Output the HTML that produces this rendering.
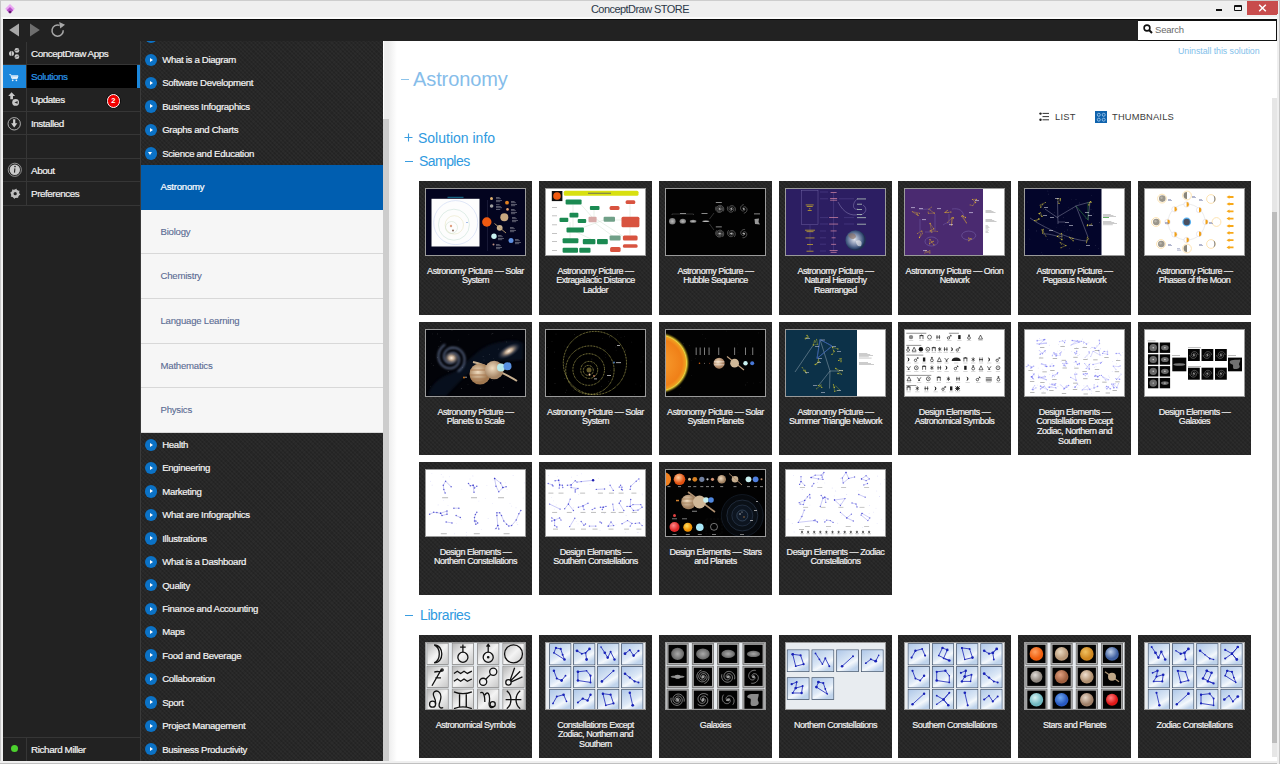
<!DOCTYPE html>
<html><head><meta charset="utf-8"><style>
*{margin:0;padding:0;box-sizing:border-box}
html,body{width:1280px;height:764px;overflow:hidden;background:#efefef;font-family:"Liberation Sans",sans-serif}
.a{position:absolute}
.tex{background-color:#252525;background-image:repeating-linear-gradient(45deg,rgba(255,255,255,0.02) 0 1.5px,rgba(0,0,0,0.035) 1.5px 3px),repeating-linear-gradient(-45deg,rgba(255,255,255,0.012) 0 1.5px,rgba(0,0,0,0.02) 1.5px 3px)}
.nr{position:absolute;left:0;width:137px;height:24px;border-bottom:1px solid #383838}
.nr .ic{position:absolute;left:0;top:0;width:23px;height:100%;border-right:1px solid #383838}
.nr .tx{position:absolute;left:28px;top:0;line-height:23px;font-size:9.6px;color:#f4f4f4;letter-spacing:-0.26px;white-space:nowrap}
.ci{position:absolute;left:0;width:243px;height:23.43px}
.ci .cc{position:absolute;left:3.6px;top:5.5px;width:12.4px;height:12.4px;border-radius:50%;background:#0b72c6}
.ci .cc:after{content:"";position:absolute;left:5px;top:4px;border-left:3.5px solid #fff;border-top:2.2px solid transparent;border-bottom:2.2px solid transparent}
.ci .tx{position:absolute;left:21.2px;top:0;line-height:23px;font-size:9.6px;color:#f4f4f4;letter-spacing:-0.3px;white-space:nowrap;-webkit-text-stroke:0.2px #f4f4f4}
.ci .cc.dn:after{left:3.9px;top:5px;border-top:3.5px solid #fff;border-left:2.2px solid transparent;border-right:2.2px solid transparent;border-bottom:0}
.ch{position:absolute;left:1px;width:242px;background:#f6f6f6;border-bottom:1px solid #dadada}
.ch .tx{position:absolute;left:19.5px;font-size:9.6px;color:#5d6d92;letter-spacing:-0.2px;white-space:nowrap}
.card{position:absolute;width:113px;height:134px}
.card .th{position:absolute;left:6px;top:7px;width:101px;height:68px;overflow:hidden;border:1px solid #9a9a9a}
.card .th svg{display:block}
.card .ct{position:absolute;left:-5px;right:-5px;top:85.6px;white-space:nowrap;text-align:center;font-size:9px;line-height:9.7px;color:#f2f2f2;letter-spacing:-0.47px;-webkit-text-stroke:0.2px #f2f2f2}
.sec{position:absolute;font-size:14px;color:#2f9ae0;white-space:nowrap}
</style></head><body>
<div class="a" style="left:0;top:0;width:1280px;height:764px;background:#efefef;border:1px solid #c6c6c6;border-top-color:#cdcdcd"></div>
<div class="a" style="left:1px;top:16.5px;width:1278px;height:2px;background:#fbfbfb"></div>
<svg class="a" style="left:4px;top:3px" width="12" height="12" viewBox="0 0 12 12">
<path d="M6 1 L10.8 5.8 L6 10.6 L1.2 5.8Z" fill="#eaa8f2"/>
<path d="M6 4 L9.3 7.3 L6 10.6 L2.7 7.3Z" fill="#b64fc8"/>
<path d="M6 7.5 L7.8 9.1 L6 10.6 L4.2 9.1Z" fill="#5e1a6a"/></svg>
<div class="a" style="left:0;top:3px;width:1280px;text-align:center;font-size:11px;line-height:13px;color:#2b3848;letter-spacing:-0.55px">ConceptDraw STORE</div>
<div class="a" style="left:1216px;top:8.8px;width:6px;height:2px;background:#111"></div>
<div class="a" style="left:1234px;top:5px;width:7.5px;height:6px;border:1px solid #111;border-top-width:2px;border-radius:1px"></div>
<div class="a" style="left:1247px;top:1px;width:30.5px;height:13.5px;background:#c84c4c"></div>
<svg class="a" style="left:1258px;top:4px" width="9" height="8" viewBox="0 0 9 8"><path d="M1.2 0.8 L7.8 7.2 M7.8 0.8 L1.2 7.2" stroke="#fff" stroke-width="1.5"/></svg>
<div class="a" style="left:3px;top:18.75px;width:1274.8px;height:742px;background:#222;border-top:1px solid #0b0b0b"></div>
<svg class="a" style="left:8px;top:22px" width="60" height="16" viewBox="0 0 60 16"><path d="M1.2 8 L11 1.4 L11 14.6Z" fill="#a9a9a9"/><path d="M31.8 8 L22 1.4 L22 14.6Z" fill="#6f6f6f"/><path d="M52.6 3.4 A5.6 5.6 0 1 0 56.2 8.2" fill="none" stroke="#a8a8a8" stroke-width="1.5" transform="translate(-1,0)"/><path d="M51.2 0 L57 2.7 L52.2 6.4Z" fill="#a8a8a8"/></svg>
<div class="a" style="left:1137.5px;top:19.5px;width:139px;height:21px;background:#fff;border:1px solid #111;border-left:0"></div>
<svg class="a" style="left:1143px;top:24px" width="10" height="10" viewBox="0 0 10 10"><circle cx="4" cy="4" r="2.9" fill="none" stroke="#111" stroke-width="1.6"/><path d="M6 6 L9 9" stroke="#111" stroke-width="2"/></svg>
<div class="a" style="left:1155px;top:24px;font-size:9.5px;line-height:12px;color:#6a6a6a;letter-spacing:-0.2px">Search</div>
<div class="a" style="left:3px;top:40.5px;width:1274px;height:1px;background:#0d0d0d"></div>
<div class="a" style="left:3px;top:41px;width:137px;height:720px;background:#222"></div>
<div class="a" style="left:3px;top:41.60px;width:137px;height:23.43px;border-bottom:1px solid #363636"></div>
<div class="a" style="left:25.5px;top:41.60px;width:1px;height:23.43px;background:#363636"></div>
<div class="a" style="left:31px;top:41.60px;line-height:23.43px;font-size:9.9px;color:#f2f2f2;letter-spacing:-0.45px;white-space:nowrap;-webkit-text-stroke:0.2px #f2f2f2">ConceptDraw Apps</div>
<svg class="a" style="left:2.50px;top:41.31px" width="24" height="24" viewBox="0 0 24 24"><g fill="#c9c9c9"><circle cx="8.5" cy="12.6" r="2.5"/><circle cx="13.9" cy="9.4" r="2.4"/><circle cx="13.9" cy="15.7" r="2.4"/></g><g stroke="#333" stroke-width="0.6"><path d="M8.5 10.2V15"/><path d="M12 9.9L15.6 8.7"/><path d="M12.3 16.4L15.6 14.9"/></g></svg>
<div class="a" style="left:3px;top:65.03px;width:137px;height:23.43px;border-bottom:1px solid #363636"></div>
<div class="a" style="left:25.5px;top:65.03px;width:1px;height:23.43px;background:#363636"></div>
<div class="a" style="left:3px;top:65.43px;width:22.5px;height:22.43px;background:#1b87dc"></div>
<div class="a" style="left:26.5px;top:65.43px;width:110px;height:22.43px;background:#000"></div>
<div class="a" style="left:136.5px;top:65.43px;width:3.5px;height:22.43px;background:#1b87dc"></div>
<div class="a" style="left:31px;top:65.03px;line-height:23.43px;font-size:9.9px;color:#2b98ea;letter-spacing:-0.45px;white-space:nowrap;-webkit-text-stroke:0.2px #2b98ea">Solutions</div>
<svg class="a" style="left:2.50px;top:64.75px" width="24" height="24" viewBox="0 0 24 24"><g transform="translate(-1.2,0.4)"><path d="M7.6 9.2H9L10.1 13.2H15.4L16.2 10.4H9.6" fill="none" stroke="#e8f2fb" stroke-width="1"/><path d="M10 10.8H15.9L15.2 12.9H10.6Z" fill="#e8f2fb"/><circle cx="10.9" cy="14.9" r="0.85" fill="#e8f2fb"/><circle cx="14.6" cy="14.9" r="0.85" fill="#e8f2fb"/></g></svg>
<div class="a" style="left:3px;top:88.46px;width:137px;height:23.43px;border-bottom:1px solid #363636"></div>
<div class="a" style="left:25.5px;top:88.46px;width:1px;height:23.43px;background:#363636"></div>
<div class="a" style="left:31px;top:88.46px;line-height:23.43px;font-size:9.9px;color:#f2f2f2;letter-spacing:-0.45px;white-space:nowrap;-webkit-text-stroke:0.2px #f2f2f2">Updates</div>
<svg class="a" style="left:2.50px;top:88.18px" width="24" height="24" viewBox="0 0 24 24"><path d="M8.6 4.2L5.2 8H7.3V11.2H10V8H12.1Z" fill="#c9c9c9"/><circle cx="12.6" cy="14.4" r="3.4" fill="#c9c9c9"/><path d="M11.4 14.4L14.6 13V15.8Z" fill="#2a2a2a"/></svg>
<div class="a" style="left:3px;top:111.89px;width:137px;height:23.43px;border-bottom:1px solid #363636"></div>
<div class="a" style="left:25.5px;top:111.89px;width:1px;height:23.43px;background:#363636"></div>
<div class="a" style="left:31px;top:111.89px;line-height:23.43px;font-size:9.9px;color:#f2f2f2;letter-spacing:-0.45px;white-space:nowrap;-webkit-text-stroke:0.2px #f2f2f2">Installed</div>
<svg class="a" style="left:2.50px;top:111.60px" width="24" height="24" viewBox="0 0 24 24"><circle cx="11.2" cy="11.8" r="6.2" fill="none" stroke="#bdbdbd" stroke-width="0.9"/><path d="M10.1 7.3H12.3V11.3H14.3L11.2 15.4L8.1 11.3H10.1Z" fill="#cfcfcf"/></svg>
<div class="a" style="left:3px;top:135.32px;width:137px;height:23.43px;border-bottom:1px solid #363636"></div>
<div class="a" style="left:25.5px;top:135.32px;width:1px;height:23.43px;background:#363636"></div>

<div class="a" style="left:3px;top:158.75px;width:137px;height:23.43px;border-bottom:1px solid #363636"></div>
<div class="a" style="left:25.5px;top:158.75px;width:1px;height:23.43px;background:#363636"></div>
<div class="a" style="left:31px;top:158.75px;line-height:23.43px;font-size:9.9px;color:#f2f2f2;letter-spacing:-0.45px;white-space:nowrap;-webkit-text-stroke:0.2px #f2f2f2">About</div>
<svg class="a" style="left:2.50px;top:158.47px" width="24" height="24" viewBox="0 0 24 24"><circle cx="11.8" cy="11.8" r="6.6" fill="none" stroke="#9a9a9a" stroke-width="0.9"/><circle cx="11.8" cy="11.8" r="5.2" fill="#c9c9c9"/><circle cx="12" cy="8.6" r="0.8" fill="#222"/><path d="M11.9 10.4L11.5 14.6" stroke="#222" stroke-width="1.1"/></svg>
<div class="a" style="left:3px;top:182.18px;width:137px;height:23.43px;border-bottom:1px solid #363636"></div>
<div class="a" style="left:25.5px;top:182.18px;width:1px;height:23.43px;background:#363636"></div>
<div class="a" style="left:31px;top:182.18px;line-height:23.43px;font-size:9.9px;color:#f2f2f2;letter-spacing:-0.45px;white-space:nowrap;-webkit-text-stroke:0.2px #f2f2f2">Preferences</div>
<svg class="a" style="left:2.50px;top:181.89px" width="24" height="24" viewBox="0 0 24 24"><polygon points="17.40,12.73 15.19,13.70 15.14,16.11 12.90,15.23 11.17,16.90 10.20,14.69 7.79,14.64 8.67,12.40 7.00,10.67 9.21,9.70 9.26,7.29 11.50,8.17 13.23,6.50 14.20,8.71 16.61,8.76 15.73,11.00" fill="#bdbdbd"/><circle cx="12.2" cy="11.7" r="4.2" fill="#bdbdbd"/><circle cx="12.2" cy="11.7" r="1.6" fill="#222"/></svg>
<div class="a" style="left:106.6px;top:94.36px;width:13.5px;height:13.5px;border-radius:50%;background:#f00000;border:1.6px solid #fff;box-shadow:0 0 0 0.6px #000;color:#fff;font-size:7.5px;line-height:11px;text-align:center;font-weight:bold">2</div>
<div class="a" style="left:3px;top:736.6px;width:137px;height:1px;background:#363636"></div>
<div class="a" style="left:25.5px;top:737.6px;width:1px;height:23px;background:#363636"></div>
<div class="a" style="left:10.8px;top:744.6px;width:7.2px;height:7.2px;border-radius:50%;background:#4cd12e"></div>
<div class="a" style="left:31px;top:737.6px;line-height:23px;font-size:9.9px;color:#f2f2f2;letter-spacing:-0.4px;white-space:nowrap;-webkit-text-stroke:0.2px #f2f2f2">Richard Miller</div>
<div class="a" style="left:140px;top:41px;width:1px;height:720px;background:#3a3a3a"></div>
<div class="a tex" style="left:141px;top:41px;width:242px;height:719.6px;overflow:hidden">
<div class="ci" style="top:-16.38px"><div class="cc"></div><div class="tx"></div></div>
<div class="ci" style="top:7.05px"><div class="cc"></div><div class="tx">What is a Diagram</div></div>
<div class="ci" style="top:30.48px"><div class="cc"></div><div class="tx">Software Development</div></div>
<div class="ci" style="top:53.91px"><div class="cc"></div><div class="tx">Business Infographics</div></div>
<div class="ci" style="top:77.34px"><div class="cc"></div><div class="tx">Graphs and Charts</div></div>
<div class="ci" style="top:100.77px"><div class="cc dn"></div><div class="tx">Science and Education</div></div>
<div class="a" style="left:0;top:124.20px;width:242px;height:44.63px;background:#005eb0"></div>
<div class="a" style="left:19.5px;top:124.20px;line-height:44.63px;font-size:9.6px;color:#fff;letter-spacing:-0.22px;-webkit-text-stroke:0.2px #fff">Astronomy</div>
<div class="a" style="left:0;top:168.83px;width:242px;height:44.63px;background:#f6f6f6;border-bottom:1px solid #d8d8d8"></div>
<div class="a" style="left:19.5px;top:168.83px;line-height:44.63px;font-size:9.6px;color:#5a6b93;letter-spacing:-0.22px;-webkit-text-stroke:0.1px #5a6b93">Biology</div>
<div class="a" style="left:0;top:213.47px;width:242px;height:44.63px;background:#f6f6f6;border-bottom:1px solid #d8d8d8"></div>
<div class="a" style="left:19.5px;top:213.47px;line-height:44.63px;font-size:9.6px;color:#5a6b93;letter-spacing:-0.22px;-webkit-text-stroke:0.1px #5a6b93">Chemistry</div>
<div class="a" style="left:0;top:258.10px;width:242px;height:44.63px;background:#f6f6f6;border-bottom:1px solid #d8d8d8"></div>
<div class="a" style="left:19.5px;top:258.10px;line-height:44.63px;font-size:9.6px;color:#5a6b93;letter-spacing:-0.22px;-webkit-text-stroke:0.1px #5a6b93">Language Learning</div>
<div class="a" style="left:0;top:302.73px;width:242px;height:44.63px;background:#f6f6f6;border-bottom:1px solid #d8d8d8"></div>
<div class="a" style="left:19.5px;top:302.73px;line-height:44.63px;font-size:9.6px;color:#5a6b93;letter-spacing:-0.22px;-webkit-text-stroke:0.1px #5a6b93">Mathematics</div>
<div class="a" style="left:0;top:347.37px;width:242px;height:44.63px;background:#f6f6f6;border-bottom:1px solid #d8d8d8"></div>
<div class="a" style="left:19.5px;top:347.37px;line-height:44.63px;font-size:9.6px;color:#5a6b93;letter-spacing:-0.22px;-webkit-text-stroke:0.1px #5a6b93">Physics</div>
<div class="ci" style="top:392.00px"><div class="cc"></div><div class="tx">Health</div></div>
<div class="ci" style="top:415.43px"><div class="cc"></div><div class="tx">Engineering</div></div>
<div class="ci" style="top:438.86px"><div class="cc"></div><div class="tx">Marketing</div></div>
<div class="ci" style="top:462.29px"><div class="cc"></div><div class="tx">What are Infographics</div></div>
<div class="ci" style="top:485.72px"><div class="cc"></div><div class="tx">Illustrations</div></div>
<div class="ci" style="top:509.15px"><div class="cc"></div><div class="tx">What is a Dashboard</div></div>
<div class="ci" style="top:532.58px"><div class="cc"></div><div class="tx">Quality</div></div>
<div class="ci" style="top:556.01px"><div class="cc"></div><div class="tx">Finance and Accounting</div></div>
<div class="ci" style="top:579.44px"><div class="cc"></div><div class="tx">Maps</div></div>
<div class="ci" style="top:602.87px"><div class="cc"></div><div class="tx">Food and Beverage</div></div>
<div class="ci" style="top:626.30px"><div class="cc"></div><div class="tx">Collaboration</div></div>
<div class="ci" style="top:649.73px"><div class="cc"></div><div class="tx">Sport</div></div>
<div class="ci" style="top:673.16px"><div class="cc"></div><div class="tx">Project Management</div></div>
<div class="ci" style="top:696.59px"><div class="cc"></div><div class="tx">Business Productivity</div></div>
</div>
<div class="a" style="left:383px;top:41px;width:6px;height:720px;background:#cdcdcd"></div>
<div class="a" style="left:383px;top:41px;width:6px;height:77.8px;background:#ededed;border-left:1px solid #fff"></div>
<div class="a" style="left:389px;top:41px;width:8px;height:720px;background:linear-gradient(90deg,#eeeeee,#fff)"></div>
<div class="a" style="left:397px;top:41px;width:881px;height:720px;background:#fff"></div>
<div class="a" style="left:1271.8px;top:97.7px;width:5.5px;height:659.7px;background:#e6e6e6"></div>
<div class="a" style="left:1271.8px;top:211.5px;width:5.5px;height:531.5px;background:#bcbcbc"></div>
<div class="a" style="left:1178px;top:45.3px;font-size:8.8px;line-height:12px;color:#82c0ea;letter-spacing:-0.05px;white-space:nowrap">Uninstall this solution</div>
<div class="a" style="left:401px;top:78.8px;width:7.5px;height:1.2px;background:#8cc3ea"></div>
<div class="a" style="left:413px;top:67px;font-size:20px;line-height:24px;color:#86bdea;letter-spacing:-0.1px;white-space:nowrap">Astronomy</div>
<svg class="a" style="left:1039px;top:112px" width="11" height="10" viewBox="0 0 11 10"><circle cx="1.5" cy="1.6" r="1.2" fill="#222"/><circle cx="1.5" cy="7.8" r="1.2" fill="#222"/><path d="M3.5 1.4H10M3.5 4.6H10M3.5 7.8H10" stroke="#333" stroke-width="1"/></svg>
<div class="a" style="left:1055px;top:112px;font-size:9.3px;line-height:11px;color:#3a3a3a;letter-spacing:0.3px">LIST</div>
<svg class="a" style="left:1094.5px;top:110.8px" width="12.5" height="12.5" viewBox="0 0 12.5 12.5"><rect width="12.5" height="12.5" fill="#0f63ad"/><g fill="none" stroke="#9cc4ea" stroke-width="0.9"><circle cx="3.8" cy="3.8" r="1.5"/><circle cx="8.7" cy="3.8" r="1.5"/><circle cx="3.8" cy="8.7" r="1.5"/><circle cx="8.7" cy="8.7" r="1.5"/></g></svg>
<div class="a" style="left:1112px;top:112px;font-size:9.3px;line-height:11px;color:#3a3a3a;letter-spacing:0.2px">THUMBNAILS</div>
<svg class="a" style="left:404px;top:133px" width="9" height="9" viewBox="0 0 9 9"><path d="M0.5 4.5H8.5M4.5 0.5V8.5" stroke="#3a9de0" stroke-width="1.1"/></svg>
<div class="sec" style="left:418px;top:129px;line-height:18px;letter-spacing:0px">Solution info</div>
<div class="a" style="left:405px;top:161px;width:7.5px;height:1.2px;background:#3a9de0"></div>
<div class="sec" style="left:419px;top:152px;line-height:18px;letter-spacing:-0.55px">Samples</div>
<div class="a" style="left:405px;top:615px;width:7.5px;height:1.2px;background:#3a9de0"></div>
<div class="sec" style="left:420px;top:606px;line-height:18px;letter-spacing:-0.4px">Libraries</div>
<div class="card tex" style="left:419px;top:181px;height:134px"><div class="th"><svg width="99" height="66" viewBox="0 0 99 66"><rect width="99" height="66" fill="#03041f"/><rect x="5.5" y="9.8" width="48" height="47.7" fill="#fdfdfd"/><rect x="21.5" y="7.8" width="16" height="1" fill="#1a7a9a"/><circle cx="29.7" cy="33.6" r="22" fill="none" stroke="#c0cef0" stroke-width="0.5"/><circle cx="27.9" cy="35.7" r="15.5" fill="none" stroke="#c0dcd0" stroke-width="0.5"/><circle cx="28.3" cy="35.9" r="9.2" fill="none" stroke="#e4e0b8" stroke-width="0.5"/><circle cx="25.5" cy="38.5" r="6" fill="none" stroke="#c8dcc8" stroke-width="0.5"/><circle cx="25" cy="37" r="1.2" fill="#e0a080"/><circle cx="27" cy="41.5" r="0.9" fill="#806050"/><circle cx="41" cy="33.5" r="0.6" fill="#4070d0"/><path d="M61.5 11V62" stroke="#3a3a5a" stroke-width="0.4"/><circle cx="60.8" cy="33" r="4.7" fill="#f05a10"/><circle cx="78.3" cy="28.2" r="4" fill="#c8a880"/><circle cx="73.7" cy="38.8" r="2.9" fill="#c8b090"/><path d="M68.5 34.5L80 44" stroke="#c0a070" stroke-width="0.9"/><circle cx="68" cy="47.2" r="2.7" fill="#c8f0f0"/><circle cx="85" cy="51.5" r="2.5" fill="#6090e0"/><circle cx="65.5" cy="9.6" r="1.5" fill="#e0b070"/><circle cx="81" cy="13.7" r="1.9" fill="#e08020"/><circle cx="65.6" cy="17" r="1.8" fill="#a0a0a0"/><circle cx="81.5" cy="20.4" r="1.3" fill="#e0a070"/><circle cx="67.5" cy="55.5" r="1" fill="#c09080"/><rect x="70" y="8.0" width="3.6" height="0.6" fill="#b0b0b8" opacity="0.8"/><rect x="70" y="9.5" width="4.8" height="0.6" fill="#b0b0b8" opacity="0.8"/><rect x="70" y="11.0" width="6.0" height="0.6" fill="#b0b0b8" opacity="0.8"/><rect x="70" y="12.5" width="4.2" height="0.6" fill="#b0b0b8" opacity="0.8"/><rect x="85" y="12.0" width="3.6" height="0.6" fill="#b0b0b8" opacity="0.8"/><rect x="85" y="13.5" width="4.8" height="0.6" fill="#b0b0b8" opacity="0.8"/><rect x="85" y="15.0" width="6.0" height="0.6" fill="#b0b0b8" opacity="0.8"/><rect x="85" y="16.5" width="4.2" height="0.6" fill="#b0b0b8" opacity="0.8"/><rect x="70" y="15.5" width="3.6" height="0.6" fill="#b0b0b8" opacity="0.8"/><rect x="70" y="17.0" width="4.8" height="0.6" fill="#b0b0b8" opacity="0.8"/><rect x="70" y="18.5" width="6.0" height="0.6" fill="#b0b0b8" opacity="0.8"/><rect x="70" y="20.0" width="4.2" height="0.6" fill="#b0b0b8" opacity="0.8"/><rect x="85" y="20.0" width="3.6" height="0.6" fill="#b0b0b8" opacity="0.8"/><rect x="85" y="21.5" width="4.8" height="0.6" fill="#b0b0b8" opacity="0.8"/><rect x="85" y="23.0" width="6.0" height="0.6" fill="#b0b0b8" opacity="0.8"/><rect x="85" y="24.5" width="4.2" height="0.6" fill="#b0b0b8" opacity="0.8"/><rect x="86" y="28.0" width="3.6" height="0.6" fill="#b0b0b8" opacity="0.8"/><rect x="86" y="29.5" width="4.8" height="0.6" fill="#b0b0b8" opacity="0.8"/><rect x="86" y="31.0" width="6.0" height="0.6" fill="#b0b0b8" opacity="0.8"/><rect x="86" y="32.5" width="4.2" height="0.6" fill="#b0b0b8" opacity="0.8"/><rect x="84" y="38.0" width="3.6" height="0.6" fill="#b0b0b8" opacity="0.8"/><rect x="84" y="39.5" width="4.8" height="0.6" fill="#b0b0b8" opacity="0.8"/><rect x="84" y="41.0" width="6.0" height="0.6" fill="#b0b0b8" opacity="0.8"/><rect x="84" y="42.5" width="4.2" height="0.6" fill="#b0b0b8" opacity="0.8"/><rect x="72" y="46.0" width="3.6" height="0.6" fill="#b0b0b8" opacity="0.8"/><rect x="72" y="47.5" width="4.8" height="0.6" fill="#b0b0b8" opacity="0.8"/><rect x="72" y="49.0" width="6.0" height="0.6" fill="#b0b0b8" opacity="0.8"/><rect x="72" y="50.5" width="4.2" height="0.6" fill="#b0b0b8" opacity="0.8"/><rect x="89" y="50.0" width="3.6" height="0.6" fill="#b0b0b8" opacity="0.8"/><rect x="89" y="51.5" width="4.8" height="0.6" fill="#b0b0b8" opacity="0.8"/><rect x="89" y="53.0" width="6.0" height="0.6" fill="#b0b0b8" opacity="0.8"/><rect x="89" y="54.5" width="4.2" height="0.6" fill="#b0b0b8" opacity="0.8"/><rect x="70" y="55.0" width="3.6" height="0.6" fill="#b0b0b8" opacity="0.8"/><rect x="70" y="56.5" width="4.8" height="0.6" fill="#b0b0b8" opacity="0.8"/><rect x="70" y="58.0" width="6.0" height="0.6" fill="#b0b0b8" opacity="0.8"/><rect x="70" y="59.5" width="4.2" height="0.6" fill="#b0b0b8" opacity="0.8"/></svg></div><div class="ct">Astronomy Picture — Solar<br>System</div></div>
<div class="card tex" style="left:539px;top:181px;height:134px"><div class="th"><svg width="99" height="66" viewBox="0 0 99 66"><rect width="99" height="66" fill="#fff"/><rect x="5.8" y="2" width="10.6" height="10.1" fill="#111"/><circle cx="11" cy="7" r="3.8" fill="#f05a10"/><rect x="17.8" y="1.8" width="74.7" height="5" rx="1.5" fill="#d8e010"/><rect x="42" y="3.8" width="23" height="0.8" fill="#556"/><g stroke="#c8d8c8" stroke-width="0.4"><path d="M27 15.5L27 38"/><path d="M35 15.5L46 28"/><path d="M48 21L48 28"/><path d="M50 30L78 48"/><path d="M30 43L45 50"/><path d="M33 40L66 28"/><path d="M84 15L84 28"/><path d="M84 38L84 46"/><path d="M49 34L68 48"/><path d="M58 31L76 31"/><path d="M24 33L24 50"/></g><rect x="19.6" y="10.5" width="16" height="5" rx="1" fill="#1b8a52"/><rect x="43.9" y="17.1" width="9.6" height="3.9" rx="1" fill="#1b8a52"/><rect x="23.5" y="23.7" width="8.9" height="4.9" rx="1" fill="#1b8a52"/><rect x="13.5" y="28.8" width="8.8" height="4.1" rx="1" fill="#1b8a52"/><rect x="31.7" y="30" width="8.5" height="4.1" rx="1" fill="#1b8a52"/><rect x="20.5" y="38.5" width="17.4" height="5" rx="1" fill="#1b8a52"/><rect x="16.6" y="49.2" width="15.8" height="5.1" rx="1" fill="#1b8a52"/><rect x="36.8" y="50.1" width="12.6" height="5.1" rx="1" fill="#1b8a52"/><rect x="51" y="50.1" width="10.8" height="5.1" rx="1" fill="#1b8a52"/><rect x="16.6" y="58.7" width="15.4" height="5" rx="1" fill="#1b8a52"/><rect x="33.3" y="58.7" width="11.2" height="5" rx="1" fill="#1b8a52"/><rect x="57.6" y="27.7" width="11.4" height="5" rx="1" fill="#70a088"/><rect x="63.6" y="46.5" width="11" height="5" rx="1" fill="#70a088"/><rect x="42.5" y="27.7" width="8.1" height="5.5" rx="1" fill="#d8aaa8"/><rect x="79.6" y="11.2" width="9.7" height="3.7" rx="1.5" fill="#d8533f"/><rect x="63.6" y="17.1" width="9.9" height="3.9" rx="1.5" fill="#d8533f"/><rect x="75.5" y="27.7" width="17.9" height="10.5" rx="1.5" fill="#d8533f"/><rect x="76.9" y="46.5" width="14.7" height="5" rx="1.5" fill="#d8533f"/><rect x="76.9" y="55.2" width="14.7" height="3.6" rx="1.5" fill="#d8533f"/><rect x="64.1" y="57.9" width="10.5" height="5.1" rx="1.5" fill="#d8533f"/><rect x="6" y="18" width="5" height="0.7" fill="#aaa"/><rect x="6" y="26.5" width="5" height="0.7" fill="#aaa"/><rect x="6" y="35.5" width="5" height="0.7" fill="#aaa"/><rect x="6" y="44" width="5" height="0.7" fill="#aaa"/><rect x="6" y="52" width="5" height="0.7" fill="#aaa"/><rect x="6" y="61" width="5" height="0.7" fill="#aaa"/></svg></div><div class="ct">Astronomy Picture —<br>Extragalactic Distance<br>Ladder</div></div>
<div class="card tex" style="left:659px;top:181px;height:134px"><div class="th"><svg width="99" height="66" viewBox="0 0 99 66"><rect width="99" height="66" fill="#020202"/><defs><radialGradient id="hg"><stop offset="0" stop-color="#bbb"/><stop offset="1" stop-color="#777"/></radialGradient></defs><ellipse cx="6.3" cy="32.3" rx="3.3" ry="3.3" fill="url(#hg)"/><ellipse cx="16.8" cy="32.3" rx="3.2" ry="2.5" fill="url(#hg)"/><ellipse cx="27.1" cy="32.3" rx="3.3" ry="1.5" fill="url(#hg)"/><ellipse cx="39.8" cy="32.3" rx="3.6" ry="0.8" fill="#bbb"/><path d="M6 26V25H27.5V26M43.5 30L48 24M43.5 35L48 41" stroke="#888" stroke-width="0.35" fill="none"/><path d="M54.47 19.90L54.54 20.15L54.52 20.43L54.40 20.72L54.18 20.97L53.87 21.17L53.49 21.26L53.07 21.24L52.65 21.08L52.27 20.79L51.98 20.37L51.82 19.87L51.81 19.30L51.97 18.74L52.31 18.22L52.80 17.80L53.42 17.53L54.12 17.45L54.84 17.58L55.52 17.92L56.09 18.47L56.50 19.18L56.69 20.01L56.63 20.88L56.32 21.73L55.75 22.47L54.98 23.04L54.04 23.38L53.03 23.43L52.01 23.19L51.08 22.64L50.32 21.84L49.81 20.82L49.61 19.68L49.74 18.50L50.22 17.37" fill="none" stroke="#b0b0b0" stroke-width="0.45"/><path d="M52.93 19.90L52.86 19.65L52.88 19.37L53.00 19.08L53.22 18.83L53.53 18.63L53.91 18.54L54.33 18.56L54.75 18.72L55.13 19.01L55.42 19.43L55.58 19.93L55.59 20.50L55.43 21.06L55.09 21.58L54.60 22.00L53.98 22.27L53.28 22.35L52.56 22.22L51.88 21.88L51.31 21.33L50.90 20.62L50.71 19.79L50.77 18.92L51.08 18.07L51.65 17.33L52.42 16.76L53.36 16.42L54.37 16.37L55.39 16.61L56.32 17.16L57.08 17.96L57.59 18.98L57.79 20.12L57.66 21.30L57.18 22.43" fill="none" stroke="#b0b0b0" stroke-width="0.45"/><circle cx="53.7" cy="19.9" r="0.95" fill="#b0b0b0"/><path d="M54.44 44.83L54.43 45.08L54.33 45.35L54.13 45.59L53.84 45.77L53.49 45.86L53.10 45.84L52.70 45.69L52.35 45.42L52.07 45.03L51.92 44.55L51.91 44.01L52.07 43.47L52.39 42.98L52.87 42.58L53.46 42.33L54.13 42.25L54.83 42.38L55.48 42.72L56.03 43.25L56.41 43.94L56.59 44.74L56.52 45.59L56.21 46.40L55.66 47.12L54.90 47.67L53.99 47.98L53.00 48.02L52.01 47.77L51.11 47.24L50.38 46.45L49.90 45.45L49.71 44.33L49.86 43.18L50.33 42.09L51.12 41.16" fill="none" stroke="#b0b0b0" stroke-width="0.45"/><path d="M52.96 44.37L52.97 44.12L53.07 43.85L53.27 43.61L53.56 43.43L53.91 43.34L54.30 43.36L54.70 43.51L55.05 43.78L55.33 44.17L55.48 44.65L55.49 45.19L55.33 45.73L55.01 46.22L54.53 46.62L53.94 46.87L53.27 46.95L52.57 46.82L51.92 46.48L51.37 45.95L50.99 45.26L50.81 44.46L50.88 43.61L51.19 42.80L51.74 42.08L52.50 41.53L53.41 41.22L54.40 41.18L55.39 41.43L56.29 41.96L57.02 42.75L57.50 43.75L57.69 44.87L57.54 46.02L57.07 47.11L56.28 48.04" fill="none" stroke="#b0b0b0" stroke-width="0.45"/><ellipse cx="53.7" cy="44.6" rx="1.50" ry="0.52" fill="#b0b0b0" transform="rotate(17.2 53.7 44.6)"/><circle cx="53.7" cy="44.6" r="0.95" fill="#b0b0b0"/><path d="M66.17 19.90L66.26 20.07L66.30 20.28L66.29 20.50L66.23 20.74L66.10 20.97L65.92 21.18L65.68 21.35L65.39 21.48L65.06 21.54L64.70 21.54L64.34 21.45L63.98 21.28L63.65 21.03L63.37 20.70L63.15 20.31L63.01 19.86L62.97 19.37L63.03 18.86L63.20 18.36L63.47 17.88L63.85 17.46L64.32 17.11L64.88 16.85L65.49 16.71L66.13 16.69L66.79 16.80L67.43 17.05L68.02 17.44L68.54 17.95L68.95 18.57L69.25 19.27L69.40 20.04L69.39 20.85L69.22 21.65L68.88 22.43" fill="none" stroke="#b0b0b0" stroke-width="0.45"/><path d="M64.63 19.90L64.54 19.73L64.50 19.52L64.51 19.30L64.57 19.06L64.70 18.83L64.88 18.62L65.12 18.45L65.41 18.32L65.74 18.26L66.10 18.26L66.46 18.35L66.82 18.52L67.15 18.77L67.43 19.10L67.65 19.49L67.79 19.94L67.83 20.43L67.77 20.94L67.60 21.44L67.33 21.92L66.95 22.34L66.48 22.69L65.92 22.95L65.31 23.09L64.67 23.11L64.01 23.00L63.37 22.75L62.78 22.36L62.26 21.85L61.85 21.23L61.55 20.53L61.40 19.76L61.41 18.95L61.58 18.15L61.92 17.37" fill="none" stroke="#b0b0b0" stroke-width="0.45"/><circle cx="65.4" cy="19.9" r="0.95" fill="#b0b0b0"/><path d="M66.14 44.83L66.17 45.02L66.15 45.22L66.08 45.44L65.94 45.64L65.76 45.83L65.52 45.97L65.24 46.07L64.92 46.11L64.58 46.07L64.25 45.96L63.92 45.77L63.63 45.50L63.39 45.16L63.22 44.77L63.13 44.33L63.13 43.85L63.24 43.37L63.44 42.91L63.75 42.48L64.15 42.10L64.64 41.81L65.20 41.62L65.80 41.53L66.43 41.58L67.05 41.75L67.64 42.05L68.18 42.48L68.63 43.02L68.97 43.66L69.19 44.38L69.26 45.14L69.17 45.92L68.93 46.68L68.53 47.40L67.98 48.04" fill="none" stroke="#b0b0b0" stroke-width="0.45"/><path d="M64.66 44.37L64.63 44.18L64.65 43.98L64.72 43.76L64.86 43.56L65.04 43.37L65.28 43.23L65.56 43.13L65.88 43.09L66.22 43.13L66.55 43.24L66.88 43.43L67.17 43.70L67.41 44.04L67.58 44.43L67.67 44.87L67.67 45.35L67.56 45.83L67.36 46.29L67.05 46.72L66.65 47.10L66.16 47.39L65.60 47.58L65.00 47.67L64.37 47.62L63.75 47.45L63.16 47.15L62.62 46.72L62.17 46.18L61.83 45.54L61.61 44.82L61.54 44.06L61.63 43.28L61.87 42.52L62.27 41.80L62.82 41.16" fill="none" stroke="#b0b0b0" stroke-width="0.45"/><ellipse cx="65.4" cy="44.6" rx="1.50" ry="0.52" fill="#b0b0b0" transform="rotate(17.2 65.4 44.6)"/><circle cx="65.4" cy="44.6" r="0.95" fill="#b0b0b0"/><path d="M78.57 19.90L78.67 20.02L78.74 20.16L78.79 20.32L78.81 20.50L78.80 20.70L78.75 20.90L78.67 21.10L78.55 21.29L78.39 21.47L78.20 21.64L77.97 21.77L77.71 21.88L77.43 21.95L77.12 21.98L76.81 21.96L76.49 21.89L76.16 21.77L75.85 21.60L75.56 21.38L75.29 21.11L75.05 20.79L74.86 20.43L74.71 20.04L74.62 19.61L74.59 19.17L74.62 18.71L74.72 18.24L74.89 17.79L75.13 17.35L75.43 16.93L75.80 16.55L76.23 16.22L76.71 15.95L77.24 15.74L77.80 15.60" fill="none" stroke="#b0b0b0" stroke-width="0.45"/><path d="M77.03 19.90L76.93 19.78L76.86 19.64L76.81 19.48L76.79 19.30L76.80 19.10L76.85 18.90L76.93 18.70L77.05 18.51L77.21 18.33L77.40 18.16L77.63 18.03L77.89 17.92L78.17 17.85L78.48 17.82L78.79 17.84L79.11 17.91L79.44 18.03L79.75 18.20L80.04 18.42L80.31 18.69L80.55 19.01L80.74 19.37L80.89 19.76L80.98 20.19L81.01 20.63L80.98 21.09L80.88 21.56L80.71 22.01L80.47 22.45L80.17 22.87L79.80 23.25L79.37 23.58L78.89 23.85L78.36 24.06L77.80 24.20" fill="none" stroke="#b0b0b0" stroke-width="0.45"/><circle cx="77.8" cy="19.9" r="0.95" fill="#b0b0b0"/><path d="M78.54 44.83L78.59 44.97L78.62 45.13L78.62 45.30L78.59 45.48L78.52 45.66L78.42 45.83L78.28 46.00L78.10 46.15L77.90 46.28L77.67 46.38L77.41 46.44L77.13 46.47L76.84 46.45L76.54 46.39L76.24 46.27L75.96 46.11L75.68 45.91L75.44 45.65L75.22 45.35L75.04 45.01L74.91 44.64L74.83 44.24L74.81 43.82L74.85 43.39L74.95 42.95L75.12 42.52L75.35 42.11L75.65 41.72L76.00 41.37L76.42 41.07L76.88 40.81L77.39 40.62L77.93 40.50L78.49 40.46L79.07 40.49" fill="none" stroke="#b0b0b0" stroke-width="0.45"/><path d="M77.06 44.37L77.01 44.23L76.98 44.07L76.98 43.90L77.01 43.72L77.08 43.54L77.18 43.37L77.32 43.20L77.50 43.05L77.70 42.92L77.93 42.82L78.19 42.76L78.47 42.73L78.76 42.75L79.06 42.81L79.36 42.93L79.64 43.09L79.92 43.29L80.16 43.55L80.38 43.85L80.56 44.19L80.69 44.56L80.77 44.96L80.79 45.38L80.75 45.81L80.65 46.25L80.48 46.68L80.25 47.09L79.95 47.48L79.60 47.83L79.18 48.13L78.72 48.39L78.21 48.58L77.67 48.70L77.11 48.74L76.53 48.71" fill="none" stroke="#b0b0b0" stroke-width="0.45"/><ellipse cx="77.8" cy="44.6" rx="1.50" ry="0.52" fill="#b0b0b0" transform="rotate(17.2 77.8 44.6)"/><circle cx="77.8" cy="44.6" r="0.95" fill="#b0b0b0"/><path d="M88.5 30L93 29.5L92.5 33L94 35.5L89 35Z" fill="#999"/><rect x="49.8" y="13" width="6" height="0.8" fill="#aaa"/><rect x="49.8" y="37.5" width="6" height="0.8" fill="#aaa"/><rect x="14" y="24" width="6" height="0.8" fill="#aaa"/><rect x="35.5" y="24" width="6" height="0.8" fill="#aaa"/><rect x="88" y="24.5" width="6" height="0.8" fill="#aaa"/></svg></div><div class="ct">Astronomy Picture —<br>Hubble Sequence</div></div>
<div class="card tex" style="left:779px;top:181px;height:134px"><div class="th"><svg width="99" height="66" viewBox="0 0 99 66"><rect width="99" height="66" fill="#2c1e62"/><rect x="15.5" y="1.2" width="16.5" height="34.3" fill="none" stroke="#7c70b0" stroke-width="0.4"/><path d="M47.6 4V62M24 36V62M34 3H42M34 9.8H42M34 28.6H42M34 35H42M34 42H40M34 48.8H40M34 55.2H40M34 62H40M53 9.8H68M58 28.6H68M58 35H68" stroke="#6a60a8" stroke-width="0.35"/><path d="M52 13C58 25 66 27 72 25.5M72 9.5C66 13 66 22 72 20M77 16C82 19 80 25 74 26" fill="none" stroke="#a8a0d0" stroke-width="0.4"/><rect x="19.7" y="15.6" width="8" height="0.7" fill="#d8b828"/><rect x="20.7" y="17.3" width="6" height="0.7" fill="#d8b828"/><rect x="22.95" y="19.5" width="1.5" height="0.7" fill="#d8b828"/><rect x="21.7" y="21.2" width="4" height="0.7" fill="#d8b828"/><rect x="19.0" y="40.8" width="10" height="0.7" fill="#d8b828"/><rect x="20.5" y="42.4" width="7" height="0.7" fill="#d8b828"/><rect x="19.5" y="48.6" width="9" height="0.7" fill="#d8b828"/><rect x="21.0" y="55" width="6" height="0.7" fill="#d8b828"/><rect x="20.5" y="61.8" width="7" height="0.7" fill="#d8b828"/><rect x="44.6" y="3" width="6" height="0.7" fill="#d88aa8"/><rect x="44.1" y="9.2" width="7" height="0.7" fill="#d88aa8"/><rect x="44.1" y="10.8" width="7" height="0.7" fill="#d88aa8"/><rect x="43.1" y="28.3" width="9" height="0.7" fill="#d88aa8"/><rect x="43.1" y="34.7" width="9" height="0.7" fill="#d88aa8"/><rect x="44.6" y="41.6" width="6" height="0.7" fill="#d88aa8"/><rect x="45.6" y="48.5" width="4" height="0.7" fill="#d88aa8"/><rect x="45.1" y="54.9" width="5" height="0.7" fill="#d88aa8"/><rect x="43.6" y="61.3" width="8" height="0.7" fill="#d88aa8"/><rect x="44.6" y="62.9" width="6" height="0.7" fill="#d88aa8"/><rect x="71" y="9.6" width="9" height="0.7" fill="#c8e0c8"/><rect x="71" y="14.8" width="5" height="0.7" fill="#c8e0c8"/><rect x="71" y="20" width="5" height="0.7" fill="#c8e0c8"/><rect x="71" y="25.2" width="5" height="0.7" fill="#c8e0c8"/><rect x="71" y="28.4" width="9" height="0.7" fill="#c8e0c8"/><rect x="71" y="34.8" width="9" height="0.7" fill="#c8e0c8"/><defs><radialGradient id="eg" cx="0.45" cy="0.45"><stop offset="0" stop-color="#e0e4ec"/><stop offset="0.55" stop-color="#7888a8"/><stop offset="0.9" stop-color="#304870"/><stop offset="1" stop-color="#203050"/></radialGradient></defs><circle cx="69.6" cy="51.5" r="10.2" fill="url(#eg)"/><path d="M62 46C65 43 70 44 70 48C68 51 64 51 62 46Z" fill="#8a6a58" opacity="0.55"/><path d="M70 52C74 50 77 53 75 57C72 58 70 56 70 52Z" fill="#f0f0f0" opacity="0.6"/></svg></div><div class="ct">Astronomy Picture —<br>Natural Hierarchy<br>Rearranged</div></div>
<div class="card tex" style="left:898px;top:181px;height:134px"><div class="th"><svg width="99" height="66" viewBox="0 0 99 66"><rect width="99" height="66" fill="#4a2a70"/><rect x="78" y="0" width="21" height="66" fill="#fff"/><path d="M14 20C20 21 24 19 26 21M15 30V43M20 43H28M30 25V42M44 25V34M47 20C54 19 58 21 59 28M38 36C42 33 44 34 45 34" stroke="#7c68b0" stroke-width="0.45" fill="none"/><path d="M12.0 24.9L13.4 26.5L12.9 26.4L7.2 22.7L14.5 24.2" fill="none" stroke="#e0b030" stroke-width="0.4" opacity="0.85"/><circle cx="12.0" cy="24.9" r="0.62" fill="#e0b030"/><circle cx="13.4" cy="26.5" r="0.34" fill="#e0b030"/><circle cx="12.9" cy="26.4" r="0.46" fill="#e0b030"/><circle cx="7.2" cy="22.7" r="0.39" fill="#e0b030"/><circle cx="14.5" cy="24.2" r="0.49" fill="#e0b030"/><path d="M26.6 18.1L23.7 20.2L29.3 24.1L23.3 24.4L23.1 22.9" fill="none" stroke="#e0b030" stroke-width="0.4" opacity="0.85"/><circle cx="26.6" cy="18.1" r="0.34" fill="#e0b030"/><circle cx="23.7" cy="20.2" r="0.30" fill="#e0b030"/><circle cx="29.3" cy="24.1" r="0.60" fill="#e0b030"/><circle cx="23.3" cy="24.4" r="0.37" fill="#e0b030"/><circle cx="23.1" cy="22.9" r="0.38" fill="#e0b030"/><path d="M45.9 23.0L40.3 23.7L42.3 21.4L39.6 23.5L43.5 23.7" fill="none" stroke="#e0b030" stroke-width="0.4" opacity="0.85"/><circle cx="45.9" cy="23.0" r="0.61" fill="#e0b030"/><circle cx="40.3" cy="23.7" r="0.40" fill="#e0b030"/><circle cx="42.3" cy="21.4" r="0.43" fill="#e0b030"/><circle cx="39.6" cy="23.5" r="0.36" fill="#e0b030"/><circle cx="43.5" cy="23.7" r="0.35" fill="#e0b030"/><path d="M12.5 44.4L16.8 42.0L17.4 44.7L14.5 48.5L15.8 44.5" fill="none" stroke="#e0b030" stroke-width="0.4" opacity="0.85"/><circle cx="12.5" cy="44.4" r="0.47" fill="#e0b030"/><circle cx="16.8" cy="42.0" r="0.55" fill="#e0b030"/><circle cx="17.4" cy="44.7" r="0.32" fill="#e0b030"/><circle cx="14.5" cy="48.5" r="0.64" fill="#e0b030"/><circle cx="15.8" cy="44.5" r="0.31" fill="#e0b030"/><path d="M32.5 42.4L25.2 41.9L28.7 39.8L25.1 34.5L26.8 43.6" fill="none" stroke="#e0b030" stroke-width="0.4" opacity="0.85"/><circle cx="32.5" cy="42.4" r="0.37" fill="#e0b030"/><circle cx="25.2" cy="41.9" r="0.56" fill="#e0b030"/><circle cx="28.7" cy="39.8" r="0.63" fill="#e0b030"/><circle cx="25.1" cy="34.5" r="0.63" fill="#e0b030"/><circle cx="26.8" cy="43.6" r="0.42" fill="#e0b030"/><path d="M42.5 33.2L46.8 29.1L46.5 36.0L47.6 28.4L48.5 28.9" fill="none" stroke="#e0b030" stroke-width="0.4" opacity="0.85"/><circle cx="42.5" cy="33.2" r="0.42" fill="#e0b030"/><circle cx="46.8" cy="29.1" r="0.51" fill="#e0b030"/><circle cx="46.5" cy="36.0" r="0.62" fill="#e0b030"/><circle cx="47.6" cy="28.4" r="0.42" fill="#e0b030"/><circle cx="48.5" cy="28.9" r="0.62" fill="#e0b030"/><path d="M60.4 28.5L58.5 27.4L56.6 27.2L61.5 34.0L57.3 26.4" fill="none" stroke="#e0b030" stroke-width="0.4" opacity="0.85"/><circle cx="60.4" cy="28.5" r="0.65" fill="#e0b030"/><circle cx="58.5" cy="27.4" r="0.49" fill="#e0b030"/><circle cx="56.6" cy="27.2" r="0.44" fill="#e0b030"/><circle cx="61.5" cy="34.0" r="0.38" fill="#e0b030"/><circle cx="57.3" cy="26.4" r="0.51" fill="#e0b030"/><path d="M70.6 13.6L67.4 10.4L71.3 10.3L67.9 16.7L65.0 15.9" fill="none" stroke="#e0b030" stroke-width="0.4" opacity="0.85"/><circle cx="70.6" cy="13.6" r="0.63" fill="#e0b030"/><circle cx="67.4" cy="10.4" r="0.52" fill="#e0b030"/><circle cx="71.3" cy="10.3" r="0.58" fill="#e0b030"/><circle cx="67.9" cy="16.7" r="0.34" fill="#e0b030"/><circle cx="65.0" cy="15.9" r="0.45" fill="#e0b030"/><path d="M19.9 64.1L20.8 61.7L25.0 64.1L24.9 61.7L21.9 63.4" fill="none" stroke="#e0b030" stroke-width="0.4" opacity="0.85"/><circle cx="19.9" cy="64.1" r="0.47" fill="#e0b030"/><circle cx="20.8" cy="61.7" r="0.40" fill="#e0b030"/><circle cx="25.0" cy="64.1" r="0.44" fill="#e0b030"/><circle cx="24.9" cy="61.7" r="0.35" fill="#e0b030"/><circle cx="21.9" cy="63.4" r="0.43" fill="#e0b030"/><path d="M28.9 55.8L26.8 53.0L25.0 50.5L24.6 54.7L28.2 52.2" fill="none" stroke="#e0b030" stroke-width="0.4" opacity="0.85"/><circle cx="28.9" cy="55.8" r="0.58" fill="#e0b030"/><circle cx="26.8" cy="53.0" r="0.57" fill="#e0b030"/><circle cx="25.0" cy="50.5" r="0.54" fill="#e0b030"/><circle cx="24.6" cy="54.7" r="0.53" fill="#e0b030"/><circle cx="28.2" cy="52.2" r="0.57" fill="#e0b030"/><path d="M64.2 50.2L63.7 48.9L66.6 50.1L63.8 51.7L65.9 49.5" fill="none" stroke="#e0b030" stroke-width="0.4" opacity="0.85"/><circle cx="64.2" cy="50.2" r="0.30" fill="#e0b030"/><circle cx="63.7" cy="48.9" r="0.49" fill="#e0b030"/><circle cx="66.6" cy="50.1" r="0.39" fill="#e0b030"/><circle cx="63.8" cy="51.7" r="0.54" fill="#e0b030"/><circle cx="65.9" cy="49.5" r="0.46" fill="#e0b030"/><ellipse cx="26.5" cy="52.5" rx="6.5" ry="4.5" fill="none" stroke="#8878c0" stroke-width="0.4"/><ellipse cx="63.7" cy="46.5" rx="7" ry="4.4" fill="none" stroke="#8878c0" stroke-width="0.4"/><rect x="6" y="18" width="4" height="1.1" fill="#d8d0e8" opacity="0.6"/><rect x="14" y="19" width="4" height="1.1" fill="#d8d0e8" opacity="0.6"/><rect x="32" y="19" width="4" height="1.1" fill="#d8d0e8" opacity="0.6"/><rect x="17" y="30" width="4" height="1.1" fill="#d8d0e8" opacity="0.6"/><rect x="44" y="35" width="4" height="1.1" fill="#d8d0e8" opacity="0.6"/><rect x="64" y="23" width="4" height="1.1" fill="#d8d0e8" opacity="0.6"/><rect x="70" y="11" width="4" height="1.1" fill="#d8d0e8" opacity="0.6"/><rect x="18" y="61" width="4" height="1.1" fill="#d8d0e8" opacity="0.6"/><rect x="80.5" y="21.0" width="6.0" height="0.5" fill="#999" opacity="1"/><rect x="80.5" y="22.2" width="8.0" height="0.5" fill="#999" opacity="1"/><rect x="80.5" y="23.4" width="10.0" height="0.5" fill="#999" opacity="1"/><rect x="80.5" y="30.0" width="6.6" height="0.5" fill="#999" opacity="1"/><rect x="80.5" y="31.2" width="8.8" height="0.5" fill="#999" opacity="1"/><rect x="80.5" y="32.4" width="11.0" height="0.5" fill="#999" opacity="1"/><rect x="80.5" y="36.0" width="2.4" height="0.5" fill="#aaa" opacity="1"/><rect x="80.5" y="37.2" width="3.2" height="0.5" fill="#aaa" opacity="1"/><rect x="80.5" y="38.4" width="4.0" height="0.5" fill="#aaa" opacity="1"/><rect x="80.5" y="39.6" width="2.8" height="0.5" fill="#aaa" opacity="1"/><rect x="80.5" y="40.8" width="3.6" height="0.5" fill="#aaa" opacity="1"/><rect x="80.5" y="42.0" width="2.4" height="0.5" fill="#aaa" opacity="1"/><rect x="80.5" y="43.2" width="3.2" height="0.5" fill="#aaa" opacity="1"/></svg></div><div class="ct">Astronomy Picture — Orion<br>Network</div></div>
<div class="card tex" style="left:1018px;top:181px;height:134px"><div class="th"><svg width="99" height="66" viewBox="0 0 99 66"><rect width="99" height="66" fill="#03052a"/><rect x="76.5" y="0" width="22.5" height="66" fill="#fff"/><path d="M32.5 12L33 35M32.5 28L51 17L63 48M50.5 17L65 13L63 31M20 20L33 29M5 29C20 40 50 52 62 52M18 45C25 44 34 49 38 47M33 33H40" stroke="#9898b0" stroke-width="0.45" fill="none"/><path d="M51 17L63 31V13" stroke="#2a7a3a" stroke-width="0.6" fill="none"/><path d="M17.8 15.2L15.8 18.2L15.0 16.0L20.4 13.5" fill="none" stroke="#e0d040" stroke-width="0.4" opacity="0.85"/><circle cx="17.8" cy="15.2" r="0.49" fill="#e0d040"/><circle cx="15.8" cy="18.2" r="0.52" fill="#e0d040"/><circle cx="15.0" cy="16.0" r="0.31" fill="#e0d040"/><circle cx="20.4" cy="13.5" r="0.43" fill="#e0d040"/><path d="M35.2 11.7L35.4 9.9L32.4 9.7L34.0 14.5" fill="none" stroke="#e0d040" stroke-width="0.4" opacity="0.85"/><circle cx="35.2" cy="11.7" r="0.51" fill="#e0d040"/><circle cx="35.4" cy="9.9" r="0.57" fill="#e0d040"/><circle cx="32.4" cy="9.7" r="0.43" fill="#e0d040"/><circle cx="34.0" cy="14.5" r="0.56" fill="#e0d040"/><path d="M13.6 24.7L17.0 27.4L15.5 23.5L14.6 24.3" fill="none" stroke="#e0d040" stroke-width="0.4" opacity="0.85"/><circle cx="13.6" cy="24.7" r="0.40" fill="#e0d040"/><circle cx="17.0" cy="27.4" r="0.58" fill="#e0d040"/><circle cx="15.5" cy="23.5" r="0.37" fill="#e0d040"/><circle cx="14.6" cy="24.3" r="0.61" fill="#e0d040"/><path d="M13.9 29.8L11.4 32.0L9.6 31.6L14.0 30.1" fill="none" stroke="#e0d040" stroke-width="0.4" opacity="0.85"/><circle cx="13.9" cy="29.8" r="0.51" fill="#e0d040"/><circle cx="11.4" cy="32.0" r="0.34" fill="#e0d040"/><circle cx="9.6" cy="31.6" r="0.50" fill="#e0d040"/><circle cx="14.0" cy="30.1" r="0.61" fill="#e0d040"/><path d="M18.6 40.1L17.7 44.3L17.1 40.7L21.0 47.4" fill="none" stroke="#e0d040" stroke-width="0.4" opacity="0.85"/><circle cx="18.6" cy="40.1" r="0.45" fill="#e0d040"/><circle cx="17.7" cy="44.3" r="0.44" fill="#e0d040"/><circle cx="17.1" cy="40.7" r="0.52" fill="#e0d040"/><circle cx="21.0" cy="47.4" r="0.33" fill="#e0d040"/><path d="M36.6 44.4L36.9 50.7L32.4 47.4L36.9 44.2" fill="none" stroke="#e0d040" stroke-width="0.4" opacity="0.85"/><circle cx="36.6" cy="44.4" r="0.39" fill="#e0d040"/><circle cx="36.9" cy="50.7" r="0.65" fill="#e0d040"/><circle cx="32.4" cy="47.4" r="0.65" fill="#e0d040"/><circle cx="36.9" cy="44.2" r="0.34" fill="#e0d040"/><path d="M48.2 51.7L45.4 49.7L44.3 48.2L48.0 49.5" fill="none" stroke="#e0d040" stroke-width="0.4" opacity="0.85"/><circle cx="48.2" cy="51.7" r="0.57" fill="#e0d040"/><circle cx="45.4" cy="49.7" r="0.33" fill="#e0d040"/><circle cx="44.3" cy="48.2" r="0.42" fill="#e0d040"/><circle cx="48.0" cy="49.5" r="0.60" fill="#e0d040"/><path d="M62.5 50.7L61.4 53.9L62.4 48.1L63.8 50.0" fill="none" stroke="#e0d040" stroke-width="0.4" opacity="0.85"/><circle cx="62.5" cy="50.7" r="0.45" fill="#e0d040"/><circle cx="61.4" cy="53.9" r="0.37" fill="#e0d040"/><circle cx="62.4" cy="48.1" r="0.46" fill="#e0d040"/><circle cx="63.8" cy="50.0" r="0.41" fill="#e0d040"/><path d="M62.5 35.8L62.6 36.7L62.2 36.7L66.8 35.0" fill="none" stroke="#e0d040" stroke-width="0.4" opacity="0.85"/><circle cx="62.5" cy="35.8" r="0.55" fill="#e0d040"/><circle cx="62.6" cy="36.7" r="0.39" fill="#e0d040"/><circle cx="62.2" cy="36.7" r="0.56" fill="#e0d040"/><circle cx="66.8" cy="35.0" r="0.45" fill="#e0d040"/><path d="M63.9 15.9L64.6 13.5L66.4 13.5L65.7 12.7" fill="none" stroke="#e0d040" stroke-width="0.4" opacity="0.85"/><circle cx="63.9" cy="15.9" r="0.60" fill="#e0d040"/><circle cx="64.6" cy="13.5" r="0.39" fill="#e0d040"/><circle cx="66.4" cy="13.5" r="0.32" fill="#e0d040"/><circle cx="65.7" cy="12.7" r="0.64" fill="#e0d040"/><path d="M36.0 58.7L40.9 56.6L35.1 53.4L36.3 55.3" fill="none" stroke="#e0d040" stroke-width="0.4" opacity="0.85"/><circle cx="36.0" cy="58.7" r="0.51" fill="#e0d040"/><circle cx="40.9" cy="56.6" r="0.64" fill="#e0d040"/><circle cx="35.1" cy="53.4" r="0.42" fill="#e0d040"/><circle cx="36.3" cy="55.3" r="0.35" fill="#e0d040"/><rect x="30" y="9" width="4" height="1" fill="#e8e8f0" opacity="0.55"/><rect x="19" y="18" width="4" height="1" fill="#e8e8f0" opacity="0.55"/><rect x="18" y="26" width="4" height="1" fill="#e8e8f0" opacity="0.55"/><rect x="25" y="28" width="4" height="1" fill="#e8e8f0" opacity="0.55"/><rect x="40" y="33" width="4" height="1" fill="#e8e8f0" opacity="0.55"/><rect x="44" y="36" width="4" height="1" fill="#e8e8f0" opacity="0.55"/><rect x="60" y="23" width="4" height="1" fill="#e8e8f0" opacity="0.55"/><rect x="63" y="26" width="4" height="1" fill="#e8e8f0" opacity="0.55"/><rect x="64" y="36" width="4" height="1" fill="#e8e8f0" opacity="0.55"/><rect x="24" y="41" width="4" height="1" fill="#e8e8f0" opacity="0.55"/><rect x="61" y="56" width="4" height="1" fill="#e8e8f0" opacity="0.55"/><circle cx="18.1" cy="35.9" r="0.3" fill="#fff" opacity="0.31"/><circle cx="45.9" cy="41.3" r="0.3" fill="#fff" opacity="0.22"/><circle cx="1.0" cy="55.3" r="0.3" fill="#fff" opacity="0.28"/><circle cx="17.8" cy="65.7" r="0.3" fill="#fff" opacity="0.34"/><circle cx="63.6" cy="31.4" r="0.3" fill="#fff" opacity="0.39"/><circle cx="11.4" cy="41.9" r="0.3" fill="#fff" opacity="0.46"/><circle cx="39.8" cy="48.9" r="0.3" fill="#fff" opacity="0.40"/><circle cx="4.9" cy="50.0" r="0.3" fill="#fff" opacity="0.38"/><circle cx="22.9" cy="2.0" r="0.3" fill="#fff" opacity="0.46"/><circle cx="35.9" cy="47.4" r="0.3" fill="#fff" opacity="0.46"/><circle cx="54.3" cy="60.8" r="0.3" fill="#fff" opacity="0.32"/><circle cx="60.9" cy="29.3" r="0.3" fill="#fff" opacity="0.48"/><circle cx="66.8" cy="6.4" r="0.3" fill="#fff" opacity="0.24"/><circle cx="16.5" cy="63.7" r="0.3" fill="#fff" opacity="0.33"/><circle cx="47.6" cy="19.9" r="0.3" fill="#fff" opacity="0.35"/><circle cx="29.3" cy="23.2" r="0.3" fill="#fff" opacity="0.38"/><circle cx="44.4" cy="59.7" r="0.3" fill="#fff" opacity="0.40"/><circle cx="70.6" cy="56.5" r="0.3" fill="#fff" opacity="0.50"/><circle cx="51.0" cy="10.8" r="0.3" fill="#fff" opacity="0.46"/><circle cx="73.3" cy="59.7" r="0.3" fill="#fff" opacity="0.37"/><circle cx="54.3" cy="13.9" r="0.3" fill="#fff" opacity="0.45"/><circle cx="43.6" cy="18.8" r="0.3" fill="#fff" opacity="0.22"/><circle cx="64.9" cy="65.3" r="0.3" fill="#fff" opacity="0.23"/><circle cx="60.8" cy="27.1" r="0.3" fill="#fff" opacity="0.25"/><circle cx="22.3" cy="50.7" r="0.3" fill="#fff" opacity="0.46"/><circle cx="3.4" cy="40.6" r="0.3" fill="#fff" opacity="0.21"/><circle cx="54.6" cy="21.8" r="0.3" fill="#fff" opacity="0.46"/><circle cx="74.5" cy="33.4" r="0.3" fill="#fff" opacity="0.50"/><circle cx="23.5" cy="5.1" r="0.3" fill="#fff" opacity="0.38"/><circle cx="2.4" cy="13.0" r="0.3" fill="#fff" opacity="0.32"/><circle cx="46.4" cy="10.3" r="0.3" fill="#fff" opacity="0.21"/><circle cx="66.0" cy="20.7" r="0.3" fill="#fff" opacity="0.49"/><circle cx="68.1" cy="24.9" r="0.3" fill="#fff" opacity="0.34"/><circle cx="39.5" cy="42.5" r="0.3" fill="#fff" opacity="0.38"/><circle cx="42.5" cy="40.9" r="0.3" fill="#fff" opacity="0.48"/><circle cx="38.5" cy="28.5" r="0.3" fill="#fff" opacity="0.42"/><circle cx="18.1" cy="19.9" r="0.3" fill="#fff" opacity="0.49"/><circle cx="39.6" cy="36.2" r="0.3" fill="#fff" opacity="0.20"/><circle cx="31.6" cy="38.3" r="0.3" fill="#fff" opacity="0.21"/><circle cx="46.8" cy="41.7" r="0.3" fill="#fff" opacity="0.22"/><rect x="78" y="25.0" width="7.8" height="0.5" fill="#999" opacity="1"/><rect x="78" y="26.2" width="10.4" height="0.5" fill="#999" opacity="1"/><rect x="78" y="27.4" width="13.0" height="0.5" fill="#999" opacity="1"/><rect x="78" y="28" width="6" height="0.8" fill="#40a040"/><rect x="78" y="32.0" width="8.4" height="0.5" fill="#999" opacity="1"/><rect x="78" y="33.2" width="11.2" height="0.5" fill="#999" opacity="1"/><rect x="78" y="34.4" width="14.0" height="0.5" fill="#999" opacity="1"/><rect x="78" y="35.6" width="9.8" height="0.5" fill="#999" opacity="1"/></svg></div><div class="ct">Astronomy Picture —<br>Pegasus Network</div></div>
<div class="card tex" style="left:1138px;top:181px;height:134px"><div class="th"><svg width="99" height="66" viewBox="0 0 99 66"><rect width="99" height="66" fill="#fff"/><ellipse cx="41.6" cy="33" rx="18.5" ry="18" fill="none" stroke="#c8c8c8" stroke-width="0.35"/><circle cx="41.6" cy="15.5" r="2.7" fill="#fff" stroke="#d0c8d8" stroke-width="0.4"/><path d="M41.6 13.1A2.4 2.4 0 0 1 41.6 17.9Z" fill="#f0a018"/><circle cx="29.5" cy="20.2" r="2.7" fill="#fff" stroke="#d0c8d8" stroke-width="0.4"/><path d="M29.5 17.8A2.4 2.4 0 0 1 29.5 22.599999999999998Z" fill="#f0a018"/><circle cx="54" cy="21" r="2.7" fill="#fff" stroke="#d0c8d8" stroke-width="0.4"/><path d="M54 18.6A2.4 2.4 0 0 1 54 23.4Z" fill="#f0a018"/><circle cx="22.5" cy="33" r="2.7" fill="#fff" stroke="#d0c8d8" stroke-width="0.4"/><path d="M22.5 30.6A2.4 2.4 0 0 1 22.5 35.4Z" fill="#f0a018"/><circle cx="60.5" cy="33" r="2.7" fill="#fff" stroke="#d0c8d8" stroke-width="0.4"/><path d="M60.5 30.6A2.4 2.4 0 0 1 60.5 35.4Z" fill="#f0a018"/><circle cx="29.5" cy="45.5" r="2.7" fill="#fff" stroke="#d0c8d8" stroke-width="0.4"/><path d="M29.5 43.1A2.4 2.4 0 0 1 29.5 47.9Z" fill="#f0a018"/><circle cx="54" cy="45" r="2.7" fill="#fff" stroke="#d0c8d8" stroke-width="0.4"/><path d="M54 42.6A2.4 2.4 0 0 1 54 47.4Z" fill="#f0a018"/><circle cx="41.6" cy="51" r="2.7" fill="#fff" stroke="#d0c8d8" stroke-width="0.4"/><path d="M41.6 48.6A2.4 2.4 0 0 1 41.6 53.4Z" fill="#f0a018"/><circle cx="41.7" cy="33" r="4.4" fill="#58b0f0"/><circle cx="41.7" cy="33" r="3.2" fill="#4a5060"/><circle cx="17" cy="9.6" r="4.4" fill="#fff" stroke="#fde0a8" stroke-width="0.9"/><circle cx="17.3" cy="9.6" r="3.3" fill="#9a958a"/><circle cx="16.5" cy="8.799999999999999" r="1.2" fill="#b8b4aa"/><circle cx="42" cy="6.5" r="4.4" fill="#fff" stroke="#fde0a8" stroke-width="0.9"/><path d="M42 3.1A3.4 3.4 0 0 0 42 9.9Z" fill="#8a8578"/><circle cx="66" cy="10" r="4.4" fill="#fff" stroke="#fde0a8" stroke-width="0.9"/><path d="M67 6.6A3.4 3.4 0 0 1 67 13.4A2.4 3.4 0 0 0 67 6.6Z" fill="#777"/><circle cx="11" cy="33" r="4.4" fill="#fff" stroke="#fde0a8" stroke-width="0.9"/><circle cx="11.3" cy="33" r="3.3" fill="#9a958a"/><circle cx="10.5" cy="32.2" r="1.2" fill="#b8b4aa"/><circle cx="71.5" cy="33" r="4.4" fill="#fff" stroke="#fde0a8" stroke-width="0.9"/><circle cx="16" cy="55" r="4.4" fill="#fff" stroke="#fde0a8" stroke-width="0.9"/><circle cx="16.3" cy="55" r="3.3" fill="#9a958a"/><circle cx="15.5" cy="54.2" r="1.2" fill="#b8b4aa"/><circle cx="42" cy="59.5" r="4.4" fill="#fff" stroke="#fde0a8" stroke-width="0.9"/><path d="M42 56.1A3.4 3.4 0 0 0 42 62.9Z" fill="#8a8578"/><circle cx="66" cy="55" r="4.4" fill="#fff" stroke="#fde0a8" stroke-width="0.9"/><path d="M67 51.6A3.4 3.4 0 0 1 67 58.4A2.4 3.4 0 0 0 67 51.6Z" fill="#777"/><path d="M81.5 8L84.5 6.2V7.1H88.5V8.9H84.5V9.8Z" fill="#f8a818"/><path d="M81.5 15L84.5 13.2V14.1H88.5V15.9H84.5V16.8Z" fill="#f8a818"/><path d="M81.5 22.3L84.5 20.5V21.400000000000002H88.5V23.2H84.5V24.1Z" fill="#f8a818"/><path d="M81.5 29.6L84.5 27.8V28.700000000000003H88.5V30.5H84.5V31.400000000000002Z" fill="#f8a818"/><path d="M81.5 37L84.5 35.2V36.1H88.5V37.9H84.5V38.8Z" fill="#f8a818"/><path d="M81.5 43.9L84.5 42.1V43.0H88.5V44.8H84.5V45.699999999999996Z" fill="#f8a818"/><path d="M81.5 51.2L84.5 49.400000000000006V50.300000000000004H88.5V52.1H84.5V53.0Z" fill="#f8a818"/><path d="M81.5 58.4L84.5 56.6V57.5H88.5V59.3H84.5V60.199999999999996Z" fill="#f8a818"/><rect x="23" y="10.0" width="3.0" height="0.6" fill="#8088b0" opacity="1"/><rect x="23" y="11.3" width="4.0" height="0.6" fill="#8088b0" opacity="1"/><rect x="54" y="10.0" width="3.0" height="0.6" fill="#8088b0" opacity="1"/><rect x="54" y="11.3" width="4.0" height="0.6" fill="#8088b0" opacity="1"/><rect x="20" y="33.0" width="3.0" height="0.6" fill="#8088b0" opacity="1"/><rect x="20" y="34.3" width="4.0" height="0.6" fill="#8088b0" opacity="1"/><rect x="64" y="33.0" width="3.0" height="0.6" fill="#8088b0" opacity="1"/><rect x="64" y="34.3" width="4.0" height="0.6" fill="#8088b0" opacity="1"/><rect x="23" y="55.0" width="3.0" height="0.6" fill="#8088b0" opacity="1"/><rect x="23" y="56.3" width="4.0" height="0.6" fill="#8088b0" opacity="1"/><rect x="54" y="55.0" width="3.0" height="0.6" fill="#8088b0" opacity="1"/><rect x="54" y="56.3" width="4.0" height="0.6" fill="#8088b0" opacity="1"/><rect x="32" y="59.5" width="3.0" height="0.6" fill="#8088b0" opacity="1"/><rect x="32" y="60.8" width="4.0" height="0.6" fill="#8088b0" opacity="1"/><rect x="47" y="7.0" width="3.0" height="0.6" fill="#8088b0" opacity="1"/><rect x="47" y="8.3" width="4.0" height="0.6" fill="#8088b0" opacity="1"/></svg></div><div class="ct">Astronomy Picture —<br>Phases of the Moon</div></div>
<div class="card tex" style="left:419px;top:322px;height:133px"><div class="th"><svg width="99" height="66" viewBox="0 0 99 66"><rect width="99" height="66" fill="#020308"/><defs><radialGradient id="gal" ><stop offset="0" stop-color="#fff0e0"/><stop offset="0.3" stop-color="#c0a890"/><stop offset="1" stop-color="#203050" stop-opacity="0"/></radialGradient><radialGradient id="jup" cx="0.4" cy="0.4"><stop offset="0" stop-color="#f0dcc0"/><stop offset="1" stop-color="#a07850"/></radialGradient><radialGradient id="sat" cx="0.4" cy="0.4"><stop offset="0" stop-color="#f0dcc0"/><stop offset="1" stop-color="#a88868"/></radialGradient><filter id="blr" x="-0.3" y="-0.3" width="1.6" height="1.6"><feGaussianBlur stdDeviation="0.9"/></filter></defs><path d="M3 62C8 50 18 46 28 42C40 36 48 20 66 14C80 10 90 9 97 13V30C82 32 70 30 58 34C40 42 30 56 20 66H3Z" fill="#101a30" opacity="0.5" filter="url(#blr)"/><circle cx="32.1" cy="10.0" r="0.3" fill="#fff" opacity="0.46"/><circle cx="7.2" cy="35.4" r="0.3" fill="#fff" opacity="0.35"/><circle cx="5.7" cy="33.5" r="0.3" fill="#fff" opacity="0.21"/><circle cx="42.9" cy="4.6" r="0.3" fill="#fff" opacity="0.24"/><circle cx="42.0" cy="54.6" r="0.3" fill="#fff" opacity="0.25"/><circle cx="22.1" cy="41.4" r="0.3" fill="#fff" opacity="0.58"/><circle cx="57.1" cy="26.2" r="0.3" fill="#fff" opacity="0.59"/><circle cx="4.6" cy="56.7" r="0.3" fill="#fff" opacity="0.32"/><circle cx="14.3" cy="7.8" r="0.3" fill="#fff" opacity="0.32"/><circle cx="80.8" cy="11.9" r="0.3" fill="#fff" opacity="0.43"/><circle cx="63.3" cy="24.6" r="0.3" fill="#fff" opacity="0.42"/><circle cx="6.2" cy="3.9" r="0.3" fill="#fff" opacity="0.28"/><circle cx="67.4" cy="28.2" r="0.3" fill="#fff" opacity="0.33"/><circle cx="58.0" cy="29.9" r="0.3" fill="#fff" opacity="0.32"/><circle cx="78.6" cy="46.1" r="0.3" fill="#fff" opacity="0.30"/><circle cx="56.9" cy="34.7" r="0.3" fill="#fff" opacity="0.55"/><circle cx="72.2" cy="19.0" r="0.3" fill="#fff" opacity="0.59"/><circle cx="11.7" cy="27.6" r="0.3" fill="#fff" opacity="0.50"/><circle cx="15.0" cy="32.3" r="0.3" fill="#fff" opacity="0.22"/><circle cx="66.2" cy="50.5" r="0.3" fill="#fff" opacity="0.43"/><circle cx="86.7" cy="20.7" r="0.3" fill="#fff" opacity="0.48"/><circle cx="58.8" cy="38.3" r="0.3" fill="#fff" opacity="0.38"/><circle cx="83.2" cy="62.3" r="0.3" fill="#fff" opacity="0.39"/><circle cx="65.8" cy="4.0" r="0.3" fill="#fff" opacity="0.48"/><circle cx="64.1" cy="65.5" r="0.3" fill="#fff" opacity="0.53"/><circle cx="28.2" cy="25.5" r="0.3" fill="#fff" opacity="0.47"/><circle cx="2.2" cy="30.5" r="0.3" fill="#fff" opacity="0.27"/><circle cx="11.6" cy="3.9" r="0.3" fill="#fff" opacity="0.51"/><circle cx="12.8" cy="16.3" r="0.3" fill="#fff" opacity="0.36"/><circle cx="86.3" cy="5.3" r="0.3" fill="#fff" opacity="0.38"/><circle cx="54.4" cy="58.3" r="0.3" fill="#fff" opacity="0.53"/><circle cx="85.5" cy="18.4" r="0.3" fill="#fff" opacity="0.37"/><circle cx="35.5" cy="58.4" r="0.3" fill="#fff" opacity="0.58"/><circle cx="14.9" cy="11.6" r="0.3" fill="#fff" opacity="0.29"/><circle cx="23.1" cy="32.0" r="0.3" fill="#fff" opacity="0.44"/><circle cx="26.0" cy="0.3" r="0.3" fill="#fff" opacity="0.37"/><circle cx="36.6" cy="37.4" r="0.3" fill="#fff" opacity="0.58"/><circle cx="68.4" cy="34.0" r="0.3" fill="#fff" opacity="0.45"/><circle cx="66.9" cy="3.6" r="0.3" fill="#fff" opacity="0.56"/><circle cx="77.2" cy="57.7" r="0.3" fill="#fff" opacity="0.52"/><g filter="url(#blr)"><path d="M27.87 29.29L27.84 29.96L27.63 30.65L27.23 31.33L26.64 31.94L25.87 32.44L24.95 32.78L23.92 32.91L22.81 32.81L21.69 32.46L20.62 31.84L19.64 30.97L18.84 29.86L18.25 28.54L17.94 27.07L17.93 25.49L18.27 23.88L18.95 22.31L19.98 20.86L21.33 19.60L22.97 18.61L24.84 17.94L26.87 17.66L28.99 17.80L31.10 18.38L33.11 19.40L34.93 20.85L36.47 22.68L37.64 24.85L38.37 27.27L38.61 29.86L38.32 32.51L37.49 35.12L36.12 37.57L34.25 39.75L31.92 41.56" fill="none" stroke="#5c6a88" stroke-width="1.7"/><path d="M23.13 26.71L23.16 26.04L23.37 25.35L23.77 24.67L24.36 24.06L25.13 23.56L26.05 23.22L27.08 23.09L28.19 23.19L29.31 23.54L30.38 24.16L31.36 25.03L32.16 26.14L32.75 27.46L33.06 28.93L33.07 30.51L32.73 32.12L32.05 33.69L31.02 35.14L29.67 36.40L28.03 37.39L26.16 38.06L24.13 38.34L22.01 38.20L19.90 37.62L17.89 36.60L16.07 35.15L14.53 33.32L13.36 31.15L12.63 28.73L12.39 26.14L12.68 23.49L13.51 20.88L14.88 18.43L16.75 16.25L19.08 14.44" fill="none" stroke="#5c6a88" stroke-width="1.7"/><circle cx="25.5" cy="28" r="0.00" fill="#5c6a88"/></g><ellipse cx="25.5" cy="28" rx="9" ry="7.5" fill="url(#gal)"/><ellipse cx="83" cy="21" rx="13" ry="6" transform="rotate(-30 83 21)" fill="url(#gal)"/><path d="M47 32C60 35 82 45 91 51" stroke="#c8b090" stroke-width="2" fill="none"/><circle cx="54" cy="44" r="10.5" fill="url(#jup)"/><path d="M44.5 40H63.5M44 45H64M45 49H63" stroke="#a87850" stroke-width="0.9"/><circle cx="68.2" cy="40" r="9.3" fill="url(#sat)"/><circle cx="75" cy="37.6" r="4" fill="#b8e8ea"/><circle cx="81.5" cy="36.2" r="4" fill="#5890e0"/><circle cx="38" cy="47.5" r="0.9" fill="#e08020"/><circle cx="40" cy="47.3" r="0.8" fill="#aaa"/></svg></div><div class="ct">Astronomy Picture —<br>Planets to Scale</div></div>
<div class="card tex" style="left:539px;top:322px;height:133px"><div class="th"><svg width="99" height="66" viewBox="0 0 99 66"><rect width="99" height="66" fill="#000"/><circle cx="44.8" cy="36.9" r="0.3" fill="#fff" opacity="0.43"/><circle cx="46.1" cy="33.5" r="0.3" fill="#fff" opacity="0.35"/><circle cx="18.3" cy="33.8" r="0.3" fill="#fff" opacity="0.36"/><circle cx="78.5" cy="6.2" r="0.3" fill="#fff" opacity="0.28"/><circle cx="9.0" cy="53.4" r="0.3" fill="#fff" opacity="0.37"/><circle cx="4.1" cy="64.8" r="0.3" fill="#fff" opacity="0.44"/><circle cx="64.7" cy="40.6" r="0.3" fill="#fff" opacity="0.24"/><circle cx="1.5" cy="34.9" r="0.3" fill="#fff" opacity="0.21"/><circle cx="18.8" cy="16.0" r="0.3" fill="#fff" opacity="0.21"/><circle cx="45.9" cy="29.1" r="0.3" fill="#fff" opacity="0.41"/><circle cx="51.4" cy="42.3" r="0.3" fill="#fff" opacity="0.32"/><circle cx="65.6" cy="30.2" r="0.3" fill="#fff" opacity="0.27"/><circle cx="98.8" cy="65.7" r="0.3" fill="#fff" opacity="0.41"/><circle cx="70.1" cy="20.8" r="0.3" fill="#fff" opacity="0.26"/><circle cx="28.6" cy="4.6" r="0.3" fill="#fff" opacity="0.39"/><circle cx="39.6" cy="55.9" r="0.3" fill="#fff" opacity="0.30"/><circle cx="94.8" cy="55.9" r="0.3" fill="#fff" opacity="0.20"/><circle cx="20.8" cy="60.1" r="0.3" fill="#fff" opacity="0.32"/><circle cx="97.1" cy="26.2" r="0.3" fill="#fff" opacity="0.22"/><circle cx="62.3" cy="51.4" r="0.3" fill="#fff" opacity="0.27"/><circle cx="8.6" cy="22.0" r="0.3" fill="#fff" opacity="0.44"/><circle cx="75.0" cy="7.8" r="0.3" fill="#fff" opacity="0.26"/><circle cx="10.0" cy="4.0" r="0.3" fill="#fff" opacity="0.40"/><circle cx="17.6" cy="36.9" r="0.3" fill="#fff" opacity="0.31"/><circle cx="18.9" cy="48.3" r="0.3" fill="#fff" opacity="0.23"/><circle cx="63.7" cy="7.7" r="0.3" fill="#fff" opacity="0.31"/><circle cx="21.1" cy="17.8" r="0.3" fill="#fff" opacity="0.44"/><circle cx="79.5" cy="20.1" r="0.3" fill="#fff" opacity="0.42"/><circle cx="20.9" cy="26.0" r="0.3" fill="#fff" opacity="0.41"/><circle cx="63.5" cy="6.6" r="0.3" fill="#fff" opacity="0.45"/><circle cx="21.1" cy="17.0" r="0.3" fill="#fff" opacity="0.39"/><circle cx="32.6" cy="19.6" r="0.3" fill="#fff" opacity="0.22"/><circle cx="8.9" cy="38.5" r="0.3" fill="#fff" opacity="0.26"/><circle cx="59.5" cy="24.5" r="0.3" fill="#fff" opacity="0.31"/><circle cx="95.0" cy="31.9" r="0.3" fill="#fff" opacity="0.34"/><circle cx="85.8" cy="12.1" r="0.3" fill="#fff" opacity="0.24"/><circle cx="89.9" cy="54.0" r="0.3" fill="#fff" opacity="0.26"/><circle cx="18.8" cy="48.8" r="0.3" fill="#fff" opacity="0.44"/><circle cx="19.5" cy="62.7" r="0.3" fill="#fff" opacity="0.42"/><circle cx="59.7" cy="27.8" r="0.3" fill="#fff" opacity="0.23"/><circle cx="3.8" cy="63.5" r="0.3" fill="#fff" opacity="0.26"/><circle cx="69.8" cy="17.0" r="0.3" fill="#fff" opacity="0.41"/><circle cx="59.1" cy="19.4" r="0.3" fill="#fff" opacity="0.24"/><circle cx="71.3" cy="4.5" r="0.3" fill="#fff" opacity="0.26"/><circle cx="55.4" cy="56.3" r="0.3" fill="#fff" opacity="0.35"/><circle cx="27.7" cy="60.5" r="0.3" fill="#fff" opacity="0.25"/><circle cx="1.6" cy="17.8" r="0.3" fill="#fff" opacity="0.31"/><circle cx="6.0" cy="11.6" r="0.3" fill="#fff" opacity="0.29"/><circle cx="56.6" cy="8.7" r="0.3" fill="#fff" opacity="0.29"/><circle cx="88.2" cy="64.7" r="0.3" fill="#fff" opacity="0.36"/><circle cx="48.9" cy="33" r="31.6" fill="none" stroke="#d8d068" stroke-width="0.75" stroke-dasharray="0.75 0.8"/><circle cx="43.9" cy="40.1" r="24.2" fill="none" stroke="#d8d068" stroke-width="0.75" stroke-dasharray="0.75 0.8"/><circle cx="42.7" cy="39.5" r="15.8" fill="none" stroke="#d8d068" stroke-width="0.75" stroke-dasharray="0.75 0.8"/><circle cx="43.2" cy="39.9" r="8.5" fill="none" stroke="#d8d068" stroke-width="0.75" stroke-dasharray="0.75 0.8"/><circle cx="42.3" cy="40.4" r="5" fill="none" stroke="#d8d068" stroke-width="0.75" stroke-dasharray="0.75 0.8"/><circle cx="43" cy="40" r="2.5" fill="#a89848" opacity="0.6"/><circle cx="68" cy="32.5" r="0.9" fill="#5080c0"/><circle cx="43.5" cy="44.5" r="0.9" fill="#f0c0a0"/><circle cx="48" cy="46" r="0.9" fill="#c08060"/><rect x="70" y="32.3" width="5" height="0.8" fill="#ccc"/><rect x="71" y="15" width="3" height="0.8" fill="#ccc"/><rect x="61" y="45" width="4" height="0.8" fill="#ccc"/><rect x="48" y="48.5" width="3" height="0.8" fill="#ccc"/></svg></div><div class="ct">Astronomy Picture — Solar<br>System</div></div>
<div class="card tex" style="left:659px;top:322px;height:133px"><div class="th"><svg width="99" height="66" viewBox="0 0 99 66"><rect width="99" height="66" fill="#020202"/><defs><radialGradient id="sun2" cx="0.5" cy="0.5" r="0.5"><stop offset="0" stop-color="#f8a030"/><stop offset="0.75" stop-color="#f08018"/><stop offset="0.86" stop-color="#f0a020"/><stop offset="0.89" stop-color="#e8d040"/><stop offset="0.93" stop-color="#807018"/><stop offset="1" stop-color="#181404" stop-opacity="0"/></radialGradient><radialGradient id="jup2" cx="0.4" cy="0.4"><stop offset="0" stop-color="#f0dcc0"/><stop offset="1" stop-color="#a88060"/></radialGradient></defs><circle cx="25.6" cy="45.2" r="0.3" fill="#fff" opacity="0.27"/><circle cx="84.1" cy="12.3" r="0.3" fill="#fff" opacity="0.22"/><circle cx="14.6" cy="14.9" r="0.3" fill="#fff" opacity="0.27"/><circle cx="12.9" cy="35.1" r="0.3" fill="#fff" opacity="0.22"/><circle cx="29.2" cy="28.5" r="0.3" fill="#fff" opacity="0.28"/><circle cx="60.2" cy="1.0" r="0.3" fill="#fff" opacity="0.23"/><circle cx="14.5" cy="57.5" r="0.3" fill="#fff" opacity="0.28"/><circle cx="79.8" cy="54.5" r="0.3" fill="#fff" opacity="0.27"/><circle cx="94.0" cy="52.4" r="0.3" fill="#fff" opacity="0.23"/><circle cx="84.1" cy="32.1" r="0.3" fill="#fff" opacity="0.28"/><circle cx="55.8" cy="28.4" r="0.3" fill="#fff" opacity="0.24"/><circle cx="42.6" cy="20.7" r="0.3" fill="#fff" opacity="0.21"/><circle cx="81.1" cy="52.7" r="0.3" fill="#fff" opacity="0.30"/><circle cx="68.4" cy="36.6" r="0.3" fill="#fff" opacity="0.27"/><circle cx="13.4" cy="44.7" r="0.3" fill="#fff" opacity="0.24"/><circle cx="17.5" cy="13.4" r="0.3" fill="#fff" opacity="0.25"/><circle cx="25.1" cy="30.3" r="0.3" fill="#fff" opacity="0.26"/><circle cx="39.2" cy="8.6" r="0.3" fill="#fff" opacity="0.25"/><circle cx="23.3" cy="15.6" r="0.3" fill="#fff" opacity="0.22"/><circle cx="36.3" cy="4.8" r="0.3" fill="#fff" opacity="0.27"/><circle cx="94.4" cy="25.7" r="0.3" fill="#fff" opacity="0.27"/><circle cx="92.4" cy="2.9" r="0.3" fill="#fff" opacity="0.21"/><circle cx="79.8" cy="55.3" r="0.3" fill="#fff" opacity="0.26"/><circle cx="15.8" cy="27.3" r="0.3" fill="#fff" opacity="0.29"/><circle cx="87.7" cy="53.0" r="0.3" fill="#fff" opacity="0.22"/><circle cx="84.5" cy="24.7" r="0.3" fill="#fff" opacity="0.27"/><circle cx="13.6" cy="64.1" r="0.3" fill="#fff" opacity="0.26"/><circle cx="71.5" cy="14.0" r="0.3" fill="#fff" opacity="0.26"/><circle cx="57.5" cy="39.0" r="0.3" fill="#fff" opacity="0.24"/><circle cx="72.0" cy="22.5" r="0.3" fill="#fff" opacity="0.23"/><circle cx="-7.5" cy="33" r="31.5" fill="url(#sun2)"/><circle cx="53.1" cy="33.2" r="5.5" fill="url(#jup2)"/><path d="M47.8 31.8H58.4M47.8 34.8H58.4" stroke="#f8f0e8" stroke-width="0.6"/><path d="M61 26.5L78 40" stroke="#c0a080" stroke-width="1.1"/><circle cx="68.6" cy="33.2" r="4.4" fill="#d0b898"/><circle cx="79.5" cy="33.2" r="2.2" fill="#c8f0f0"/><circle cx="86.2" cy="33.2" r="2" fill="#4878d8"/><circle cx="33.5" cy="33.3" r="0.8" fill="#d06010"/><circle cx="38.5" cy="33.3" r="0.5" fill="#888"/><circle cx="43.5" cy="33.3" r="0.5" fill="#a05030"/><rect x="29.7" y="17.5" width="0.9" height="7.5" fill="#bbb" opacity="0.75"/><rect x="33.7" y="17.5" width="0.9" height="7.5" fill="#bbb" opacity="0.75"/><rect x="38" y="17.5" width="0.9" height="7.5" fill="#bbb" opacity="0.75"/><rect x="42.6" y="17.5" width="0.9" height="7.5" fill="#bbb" opacity="0.75"/><rect x="52.3" y="17.5" width="0.9" height="7.5" fill="#bbb" opacity="0.75"/><rect x="68.2" y="17.5" width="0.9" height="7.5" fill="#bbb" opacity="0.75"/><rect x="79" y="17.5" width="0.9" height="7.5" fill="#bbb" opacity="0.75"/><rect x="86.3" y="17.5" width="0.9" height="7.5" fill="#bbb" opacity="0.75"/></svg></div><div class="ct">Astronomy Picture — Solar<br>System Planets</div></div>
<div class="card tex" style="left:779px;top:322px;height:133px"><div class="th"><svg width="99" height="66" viewBox="0 0 99 66"><rect width="99" height="66" fill="#0c3148"/><rect x="71" y="0" width="28" height="66" fill="#fff"/><path d="M34 9.5L31 28.5L46 16L34 9.5L44 41L43.5 58.5M27 15.5L9 42M44 41L33 55M44 41H53" stroke="#a8b8c0" stroke-width="0.45" fill="none"/><path d="M34 9.5L31 28.5L46 16Z" stroke="#2050c0" stroke-width="0.6" fill="none"/><path d="M19.0 8.1L21.8 6.9L19.3 8.8L22.8 7.1L21.0 5.4" fill="none" stroke="#c8c030" stroke-width="0.4" opacity="0.85"/><circle cx="19.0" cy="8.1" r="0.30" fill="#c8c030"/><circle cx="21.8" cy="6.9" r="0.43" fill="#c8c030"/><circle cx="19.3" cy="8.8" r="0.50" fill="#c8c030"/><circle cx="22.8" cy="7.1" r="0.32" fill="#c8c030"/><circle cx="21.0" cy="5.4" r="0.58" fill="#c8c030"/><path d="M28.4 10.4L27.3 15.0L31.4 14.3L30.7 9.2L29.0 12.0" fill="none" stroke="#c8c030" stroke-width="0.4" opacity="0.85"/><circle cx="28.4" cy="10.4" r="0.34" fill="#c8c030"/><circle cx="27.3" cy="15.0" r="0.63" fill="#c8c030"/><circle cx="31.4" cy="14.3" r="0.43" fill="#c8c030"/><circle cx="30.7" cy="9.2" r="0.35" fill="#c8c030"/><circle cx="29.0" cy="12.0" r="0.59" fill="#c8c030"/><path d="M46.0 24.4L48.6 21.4L47.7 20.9L46.5 17.3L51.9 18.9" fill="none" stroke="#c8c030" stroke-width="0.4" opacity="0.85"/><circle cx="46.0" cy="24.4" r="0.57" fill="#c8c030"/><circle cx="48.6" cy="21.4" r="0.37" fill="#c8c030"/><circle cx="47.7" cy="20.9" r="0.64" fill="#c8c030"/><circle cx="46.5" cy="17.3" r="0.61" fill="#c8c030"/><circle cx="51.9" cy="18.9" r="0.56" fill="#c8c030"/><path d="M32.6 32.5L32.4 29.7L30.9 34.0L29.2 34.5L33.3 31.5" fill="none" stroke="#c8c030" stroke-width="0.4" opacity="0.85"/><circle cx="32.6" cy="32.5" r="0.43" fill="#c8c030"/><circle cx="32.4" cy="29.7" r="0.46" fill="#c8c030"/><circle cx="30.9" cy="34.0" r="0.44" fill="#c8c030"/><circle cx="29.2" cy="34.5" r="0.65" fill="#c8c030"/><circle cx="33.3" cy="31.5" r="0.44" fill="#c8c030"/><path d="M16.2 37.6L20.3 43.0L19.0 39.9L19.3 41.5L17.3 40.7" fill="none" stroke="#c8c030" stroke-width="0.4" opacity="0.85"/><circle cx="16.2" cy="37.6" r="0.49" fill="#c8c030"/><circle cx="20.3" cy="43.0" r="0.52" fill="#c8c030"/><circle cx="19.0" cy="39.9" r="0.36" fill="#c8c030"/><circle cx="19.3" cy="41.5" r="0.36" fill="#c8c030"/><circle cx="17.3" cy="40.7" r="0.42" fill="#c8c030"/><path d="M56.4 40.8L53.8 40.5L49.8 38.5L55.5 44.2L52.0 43.5" fill="none" stroke="#c8c030" stroke-width="0.4" opacity="0.85"/><circle cx="56.4" cy="40.8" r="0.54" fill="#c8c030"/><circle cx="53.8" cy="40.5" r="0.61" fill="#c8c030"/><circle cx="49.8" cy="38.5" r="0.64" fill="#c8c030"/><circle cx="55.5" cy="44.2" r="0.44" fill="#c8c030"/><circle cx="52.0" cy="43.5" r="0.65" fill="#c8c030"/><path d="M35.8 57.5L35.3 56.9L32.3 55.5L35.3 55.0L30.4 58.8" fill="none" stroke="#c8c030" stroke-width="0.4" opacity="0.85"/><circle cx="35.8" cy="57.5" r="0.57" fill="#c8c030"/><circle cx="35.3" cy="56.9" r="0.47" fill="#c8c030"/><circle cx="32.3" cy="55.5" r="0.59" fill="#c8c030"/><circle cx="35.3" cy="55.0" r="0.32" fill="#c8c030"/><circle cx="30.4" cy="58.8" r="0.39" fill="#c8c030"/><path d="M48.3 57.4L47.4 54.6L48.7 61.2L53.9 60.0L49.8 56.0" fill="none" stroke="#c8c030" stroke-width="0.4" opacity="0.85"/><circle cx="48.3" cy="57.4" r="0.64" fill="#c8c030"/><circle cx="47.4" cy="54.6" r="0.48" fill="#c8c030"/><circle cx="48.7" cy="61.2" r="0.56" fill="#c8c030"/><circle cx="53.9" cy="60.0" r="0.31" fill="#c8c030"/><circle cx="49.8" cy="56.0" r="0.37" fill="#c8c030"/><path d="M55.0 31.8L55.3 30.6L52.6 30.5L55.1 28.8L53.2 28.7" fill="none" stroke="#c8c030" stroke-width="0.4" opacity="0.85"/><circle cx="55.0" cy="31.8" r="0.57" fill="#c8c030"/><circle cx="55.3" cy="30.6" r="0.30" fill="#c8c030"/><circle cx="52.6" cy="30.5" r="0.54" fill="#c8c030"/><circle cx="55.1" cy="28.8" r="0.63" fill="#c8c030"/><circle cx="53.2" cy="28.7" r="0.31" fill="#c8c030"/><rect x="20" y="8" width="4" height="1" fill="#dde" opacity="0.5"/><rect x="35" y="9.5" width="4" height="1" fill="#dde" opacity="0.5"/><rect x="29" y="16" width="4" height="1" fill="#dde" opacity="0.5"/><rect x="46" y="16" width="4" height="1" fill="#dde" opacity="0.5"/><rect x="51" y="21" width="4" height="1" fill="#dde" opacity="0.5"/><rect x="32" y="28" width="4" height="1" fill="#dde" opacity="0.5"/><rect x="31" y="32" width="4" height="1" fill="#dde" opacity="0.5"/><rect x="19" y="42" width="4" height="1" fill="#dde" opacity="0.5"/><rect x="53" y="40" width="4" height="1" fill="#dde" opacity="0.5"/><rect x="27" y="55" width="4" height="1" fill="#dde" opacity="0.5"/><rect x="51" y="60" width="4" height="1" fill="#dde" opacity="0.5"/><rect x="35" y="62" width="4" height="1" fill="#dde" opacity="0.5"/><rect x="73" y="23.0" width="8.4" height="0.5" fill="#999" opacity="1"/><rect x="73" y="24.2" width="11.2" height="0.5" fill="#999" opacity="1"/><rect x="73" y="25.4" width="14.0" height="0.5" fill="#999" opacity="1"/><rect x="73" y="26.6" width="9.8" height="0.5" fill="#999" opacity="1"/><rect x="73" y="27.8" width="12.6" height="0.5" fill="#999" opacity="1"/><rect x="73" y="32.0" width="9.0" height="0.5" fill="#999" opacity="1"/><rect x="73" y="33.2" width="12.0" height="0.5" fill="#999" opacity="1"/><rect x="73" y="34.4" width="15.0" height="0.5" fill="#999" opacity="1"/></svg></div><div class="ct">Astronomy Picture —<br>Summer Triangle Network</div></div>
<div class="card tex" style="left:898px;top:322px;height:133px"><div class="th"><svg width="99" height="66" viewBox="0 0 99 66"><rect width="99" height="66" fill="#fff"/><rect x="1.3" y="2.8000000000000003" width="20" height="0.8" fill="#777"/><rect x="43.9" y="2.8000000000000003" width="10" height="0.8" fill="#777"/><rect x="1.3" y="14.9" width="15" height="0.8" fill="#777"/><rect x="1.3" y="24.700000000000003" width="17" height="0.8" fill="#777"/><rect x="1.3" y="44.9" width="25" height="0.8" fill="#777"/><rect x="1.3" y="55.0" width="10" height="0.8" fill="#777"/><circle cx="6" cy="7.1" r="2.2" fill="#888"/><rect x="3.8" y="10.3" width="4.4" height="0.6" fill="#c0c0c0"/><path d="M15.0 9.1V5.6H18.0V9.1M14.5 5.6H18.5M16.5 5.6V4.6" fill="none" stroke="#1a1a1a" stroke-width="0.65"/><rect x="14.3" y="10.3" width="4.4" height="0.6" fill="#c0c0c0"/><circle cx="24.5" cy="7.1" r="2" fill="none" stroke="#1a1a1a" stroke-width="0.6"/><rect x="22.3" y="10.3" width="4.4" height="0.6" fill="#c0c0c0"/><path d="M31.200000000000003 7.1H35.2M32.0 5.1V9.1M34.400000000000006 5.1V9.1" fill="none" stroke="#1a1a1a" stroke-width="0.65"/><rect x="31.000000000000004" y="10.3" width="4.4" height="0.6" fill="#c0c0c0"/><circle cx="43.5" cy="7.8999999999999995" r="1.2" fill="none" stroke="#1a1a1a" stroke-width="0.65"/><path d="M44.3 7.1L46.099999999999994 5.3M44.9 5.3H46.099999999999994V6.5" fill="none" stroke="#1a1a1a" stroke-width="0.65"/><rect x="42.099999999999994" y="10.3" width="4.4" height="0.6" fill="#c0c0c0"/><rect x="53.199999999999996" y="5.1" width="2.4" height="4" fill="#1a1a1a"/><rect x="52.199999999999996" y="10.3" width="4.4" height="0.6" fill="#c0c0c0"/><circle cx="64" cy="7.8999999999999995" r="1.4" fill="none" stroke="#1a1a1a" stroke-width="0.65"/><path d="M64 6.5V4.5M63 5.3H65" fill="none" stroke="#1a1a1a" stroke-width="0.65"/><rect x="61.8" y="10.3" width="4.4" height="0.6" fill="#c0c0c0"/><path d="M73.5 9.1L75.5 5.1L77.5 9.1Z" fill="none" stroke="#1a1a1a" stroke-width="0.65"/><rect x="73.3" y="10.3" width="4.4" height="0.6" fill="#c0c0c0"/><circle cx="3.1" cy="20.0" r="1.4" fill="none" stroke="#1a1a1a" stroke-width="0.65"/><path d="M3.1 18.599999999999998V16.599999999999998M2.1 17.4H4.1" fill="none" stroke="#1a1a1a" stroke-width="0.65"/><rect x="0.8999999999999999" y="22.4" width="4.4" height="0.6" fill="#c0c0c0"/><path d="M7.1 21.2L9.1 17.2L11.1 21.2Z" fill="none" stroke="#1a1a1a" stroke-width="0.65"/><rect x="6.8999999999999995" y="22.4" width="4.4" height="0.6" fill="#c0c0c0"/><circle cx="15.9" cy="19.2" r="2.2" fill="#111"/><rect x="13.7" y="22.4" width="4.4" height="0.6" fill="#c0c0c0"/><circle cx="22.8" cy="19.2" r="1.9" fill="none" stroke="#1a1a1a" stroke-width="0.65"/><circle cx="22.8" cy="19.2" r="0.5" fill="#1a1a1a"/><rect x="20.6" y="22.4" width="4.4" height="0.6" fill="#c0c0c0"/><path d="M27.3 21.2V17.7H30.3V21.2M26.8 17.7H30.8M28.8 17.7V16.7" fill="none" stroke="#1a1a1a" stroke-width="0.65"/><rect x="26.6" y="22.4" width="4.4" height="0.6" fill="#c0c0c0"/><path d="M34.7 17.0V21.4M33.1 18.2L36.300000000000004 20.2M36.300000000000004 18.2L33.1 20.2" fill="none" stroke="#1a1a1a" stroke-width="0.65"/><rect x="32.5" y="22.4" width="4.4" height="0.6" fill="#c0c0c0"/><path d="M38.7 19.2H42.7M39.5 17.2V21.2M41.900000000000006 17.2V21.2" fill="none" stroke="#1a1a1a" stroke-width="0.65"/><rect x="38.5" y="22.4" width="4.4" height="0.6" fill="#c0c0c0"/><path d="M45.7 17.2C48.6 17.2 48.6 21.2 45.7 21.2C47.1 20.2 47.1 18.2 45.7 17.2Z" fill="#1a1a1a"/><rect x="44.9" y="22.4" width="4.4" height="0.6" fill="#c0c0c0"/><circle cx="52.300000000000004" cy="20.0" r="1.2" fill="none" stroke="#1a1a1a" stroke-width="0.65"/><path d="M53.1 19.2L54.9 17.4M53.7 17.4H54.9V18.599999999999998" fill="none" stroke="#1a1a1a" stroke-width="0.65"/><rect x="50.9" y="22.4" width="4.4" height="0.6" fill="#c0c0c0"/><path d="M2.2 27.5C5.1 27.5 5.1 31.5 2.2 31.5C3.6 30.5 3.6 28.5 2.2 27.5Z" fill="#1a1a1a"/><rect x="1.4" y="32.7" width="4.4" height="0.6" fill="#c0c0c0"/><circle cx="10.5" cy="30.3" r="1.2" fill="none" stroke="#1a1a1a" stroke-width="0.65"/><path d="M11.3 29.5L13.100000000000001 27.7M11.9 27.7H13.100000000000001V28.9" fill="none" stroke="#1a1a1a" stroke-width="0.65"/><rect x="9.100000000000001" y="32.7" width="4.4" height="0.6" fill="#c0c0c0"/><rect x="17.900000000000002" y="27.5" width="2.4" height="4" fill="#1a1a1a"/><rect x="16.900000000000002" y="32.7" width="4.4" height="0.6" fill="#c0c0c0"/><circle cx="26.9" cy="30.3" r="1.4" fill="none" stroke="#1a1a1a" stroke-width="0.65"/><path d="M26.9 28.9V26.9M25.9 27.7H27.9" fill="none" stroke="#1a1a1a" stroke-width="0.65"/><rect x="24.7" y="32.7" width="4.4" height="0.6" fill="#c0c0c0"/><path d="M32.3 31.5L34.3 27.5L36.3 31.5Z" fill="none" stroke="#1a1a1a" stroke-width="0.65"/><rect x="32.099999999999994" y="32.7" width="4.4" height="0.6" fill="#c0c0c0"/><path d="M39.800000000000004 28.0C40.6 30.5 42.6 30.5 43.4 28.0M41.6 30.0V31.7M40.6 31.1H42.6" fill="none" stroke="#1a1a1a" stroke-width="0.65"/><rect x="39.4" y="32.7" width="4.4" height="0.6" fill="#c0c0c0"/><path d="M46.7 31.0A4.5 3.5 0 0 1 55.7 31.0Z" fill="#222"/><rect x="49.0" y="32.7" width="4.4" height="0.6" fill="#c0c0c0"/><path d="M58.9 31.5V28.0H61.9V31.5M58.4 28.0H62.4M60.4 28.0V27.0" fill="none" stroke="#1a1a1a" stroke-width="0.65"/><rect x="58.199999999999996" y="32.7" width="4.4" height="0.6" fill="#c0c0c0"/><path d="M68.2 27.3V31.7M66.60000000000001 28.5L69.8 30.5M69.8 28.5L66.60000000000001 30.5" fill="none" stroke="#1a1a1a" stroke-width="0.65"/><rect x="66.0" y="32.7" width="4.4" height="0.6" fill="#c0c0c0"/><path d="M74 29.5H78M74.8 27.5V31.5M77.2 27.5V31.5" fill="none" stroke="#1a1a1a" stroke-width="0.65"/><rect x="73.8" y="32.7" width="4.4" height="0.6" fill="#c0c0c0"/><path d="M82.8 27.5C85.7 27.5 85.7 31.5 82.8 31.5C84.2 30.5 84.2 28.5 82.8 27.5Z" fill="#1a1a1a"/><rect x="82.0" y="32.7" width="4.4" height="0.6" fill="#c0c0c0"/><circle cx="92.2" cy="30.3" r="1.2" fill="none" stroke="#1a1a1a" stroke-width="0.65"/><path d="M93 29.5L94.8 27.7M93.6 27.7H94.8V28.9" fill="none" stroke="#1a1a1a" stroke-width="0.65"/><rect x="90.8" y="32.7" width="4.4" height="0.6" fill="#c0c0c0"/><path d="M1.8 36.3C2.6 38.8 4.6 38.8 5.4 36.3M3.6 38.3V40.0M2.6 39.4H4.6" fill="none" stroke="#1a1a1a" stroke-width="0.65"/><rect x="1.4" y="41.0" width="4.4" height="0.6" fill="#c0c0c0"/><circle cx="11.3" cy="37.8" r="1.9" fill="none" stroke="#1a1a1a" stroke-width="0.65"/><circle cx="11.3" cy="37.8" r="0.5" fill="#1a1a1a"/><rect x="9.100000000000001" y="41.0" width="4.4" height="0.6" fill="#c0c0c0"/><path d="M17.6 39.8V36.3H20.6V39.8M17.1 36.3H21.1M19.1 36.3V35.3" fill="none" stroke="#1a1a1a" stroke-width="0.65"/><rect x="16.900000000000002" y="41.0" width="4.4" height="0.6" fill="#c0c0c0"/><path d="M26.9 35.599999999999994V40.0M25.299999999999997 36.8L28.5 38.8M28.5 36.8L25.299999999999997 38.8" fill="none" stroke="#1a1a1a" stroke-width="0.65"/><rect x="24.7" y="41.0" width="4.4" height="0.6" fill="#c0c0c0"/><path d="M32.3 37.8H36.3M33.099999999999994 35.8V39.8M35.5 35.8V39.8" fill="none" stroke="#1a1a1a" stroke-width="0.65"/><rect x="32.099999999999994" y="41.0" width="4.4" height="0.6" fill="#c0c0c0"/><path d="M40.2 35.8C43.1 35.8 43.1 39.8 40.2 39.8C41.6 38.8 41.6 36.8 40.2 35.8Z" fill="#1a1a1a"/><rect x="39.4" y="41.0" width="4.4" height="0.6" fill="#c0c0c0"/><circle cx="50.400000000000006" cy="38.599999999999994" r="1.2" fill="none" stroke="#1a1a1a" stroke-width="0.65"/><path d="M51.2 37.8L53.0 36.0M51.800000000000004 36.0H53.0V37.199999999999996" fill="none" stroke="#1a1a1a" stroke-width="0.65"/><rect x="49.0" y="41.0" width="4.4" height="0.6" fill="#c0c0c0"/><rect x="59.199999999999996" y="35.8" width="2.4" height="4" fill="#1a1a1a"/><rect x="58.199999999999996" y="41.0" width="4.4" height="0.6" fill="#c0c0c0"/><circle cx="68.2" cy="38.599999999999994" r="1.4" fill="none" stroke="#1a1a1a" stroke-width="0.65"/><path d="M68.2 37.199999999999996V35.199999999999996M67.2 36.0H69.2" fill="none" stroke="#1a1a1a" stroke-width="0.65"/><rect x="66.0" y="41.0" width="4.4" height="0.6" fill="#c0c0c0"/><path d="M74 39.8L76 35.8L78 39.8Z" fill="none" stroke="#1a1a1a" stroke-width="0.65"/><rect x="73.8" y="41.0" width="4.4" height="0.6" fill="#c0c0c0"/><path d="M82.4 36.3C83.2 38.8 85.2 38.8 86.0 36.3M84.2 38.3V40.0M83.2 39.4H85.2" fill="none" stroke="#1a1a1a" stroke-width="0.65"/><rect x="82.0" y="41.0" width="4.4" height="0.6" fill="#c0c0c0"/><circle cx="93" cy="37.8" r="1.9" fill="none" stroke="#1a1a1a" stroke-width="0.65"/><circle cx="93" cy="37.8" r="0.5" fill="#1a1a1a"/><rect x="90.8" y="41.0" width="4.4" height="0.6" fill="#c0c0c0"/><path d="M2 50.8L4 46.8L6 50.8Z" fill="none" stroke="#1a1a1a" stroke-width="0.65"/><rect x="1.7999999999999998" y="52.0" width="4.4" height="0.6" fill="#c0c0c0"/><path d="M12.299999999999999 47.3C13.1 49.8 15.1 49.8 15.9 47.3M14.1 49.3V51.0M13.1 50.4H15.1" fill="none" stroke="#1a1a1a" stroke-width="0.65"/><rect x="11.899999999999999" y="52.0" width="4.4" height="0.6" fill="#c0c0c0"/><circle cx="23.3" cy="48.8" r="1.9" fill="none" stroke="#1a1a1a" stroke-width="0.65"/><circle cx="23.3" cy="48.8" r="0.5" fill="#1a1a1a"/><rect x="21.1" y="52.0" width="4.4" height="0.6" fill="#c0c0c0"/><path d="M32.3 50.8V47.3H35.3V50.8M31.799999999999997 47.3H35.8M33.8 47.3V46.3" fill="none" stroke="#1a1a1a" stroke-width="0.65"/><rect x="31.599999999999998" y="52.0" width="4.4" height="0.6" fill="#c0c0c0"/><path d="M43.4 46.599999999999994V51.0M41.8 47.8L45.0 49.8M45.0 47.8L41.8 49.8" fill="none" stroke="#1a1a1a" stroke-width="0.65"/><rect x="41.199999999999996" y="52.0" width="4.4" height="0.6" fill="#c0c0c0"/><path d="M51 48.8H55M51.8 46.8V50.8M54.2 46.8V50.8" fill="none" stroke="#1a1a1a" stroke-width="0.65"/><rect x="50.8" y="52.0" width="4.4" height="0.6" fill="#c0c0c0"/><path d="M61.300000000000004 46.8C64.2 46.8 64.2 50.8 61.300000000000004 50.8C62.7 49.8 62.7 47.8 61.300000000000004 46.8Z" fill="#1a1a1a"/><rect x="60.5" y="52.0" width="4.4" height="0.6" fill="#c0c0c0"/><circle cx="72.4" cy="49.599999999999994" r="1.2" fill="none" stroke="#1a1a1a" stroke-width="0.65"/><path d="M73.2 48.8L75.0 47.0M73.8 47.0H75.0V48.199999999999996" fill="none" stroke="#1a1a1a" stroke-width="0.65"/><rect x="71.0" y="52.0" width="4.4" height="0.6" fill="#c0c0c0"/><path d="M80.8 47.8H86.8M80.8 49.3H86.8M80.8 50.8H86.8" stroke="#222" stroke-width="0.7"/><rect x="81.6" y="52.0" width="4.4" height="0.6" fill="#c0c0c0"/><circle cx="93.4" cy="49.599999999999994" r="1.4" fill="none" stroke="#1a1a1a" stroke-width="0.65"/><path d="M93.4 48.199999999999996V46.199999999999996M92.4 47.0H94.4" fill="none" stroke="#1a1a1a" stroke-width="0.65"/><rect x="91.2" y="52.0" width="4.4" height="0.6" fill="#c0c0c0"/><path d="M2.1 60.4V56.9H5.1V60.4M1.6 56.9H5.6M3.6 56.9V55.9" fill="none" stroke="#1a1a1a" stroke-width="0.65"/><rect x="1.4" y="61.6" width="4.4" height="0.6" fill="#c0c0c0"/><path d="M12.3 56.199999999999996V60.6M10.700000000000001 57.4L13.9 59.4M13.9 57.4L10.700000000000001 59.4" fill="none" stroke="#1a1a1a" stroke-width="0.65"/><rect x="10.100000000000001" y="61.6" width="4.4" height="0.6" fill="#c0c0c0"/><path d="M19.4 58.4H23.4M20.2 56.4V60.4M22.599999999999998 56.4V60.4" fill="none" stroke="#1a1a1a" stroke-width="0.65"/><rect x="19.2" y="61.6" width="4.4" height="0.6" fill="#c0c0c0"/><path d="M29.200000000000003 56.4C32.1 56.4 32.1 60.4 29.200000000000003 60.4C30.6 59.4 30.6 57.4 29.200000000000003 56.4Z" fill="#1a1a1a"/><rect x="28.400000000000002" y="61.6" width="4.4" height="0.6" fill="#c0c0c0"/><circle cx="38.0" cy="59.199999999999996" r="1.2" fill="none" stroke="#1a1a1a" stroke-width="0.65"/><path d="M38.8 58.4L40.599999999999994 56.6M39.4 56.6H40.599999999999994V57.8" fill="none" stroke="#1a1a1a" stroke-width="0.65"/><rect x="36.599999999999994" y="61.6" width="4.4" height="0.6" fill="#c0c0c0"/><rect x="45.0" y="56.4" width="2.4" height="4" fill="#1a1a1a"/><rect x="44.0" y="61.6" width="4.4" height="0.6" fill="#c0c0c0"/><path d="M50.6 56.4L54.6 60.4M54.6 56.4L50.6 60.4M52.6 56.0V60.8M50.2 58.4H55.0" stroke="#111" stroke-width="0.9"/><rect x="50.4" y="61.6" width="4.4" height="0.6" fill="#c0c0c0"/></svg></div><div class="ct">Design Elements —<br>Astronomical Symbols</div></div>
<div class="card tex" style="left:1018px;top:322px;height:133px"><div class="th"><svg width="99" height="66" viewBox="0 0 99 66"><rect width="99" height="66" fill="#fff"/><path d="M12.0 13.8L21.3 13.1L14.1 14.3L19.8 9.6L18.8 9.8L12.2 10.7" fill="none" stroke="#5a5af0" stroke-width="0.4" opacity="0.55"/><circle cx="12.0" cy="13.8" r="0.52" fill="#5a5af0" opacity="0.55"/><circle cx="21.3" cy="13.1" r="0.55" fill="#5a5af0" opacity="0.55"/><circle cx="14.1" cy="14.3" r="0.67" fill="#5a5af0" opacity="0.55"/><circle cx="19.8" cy="9.6" r="0.77" fill="#5a5af0" opacity="0.55"/><circle cx="18.8" cy="9.8" r="0.83" fill="#5a5af0" opacity="0.55"/><circle cx="12.2" cy="10.7" r="0.84" fill="#5a5af0" opacity="0.55"/><circle cx="24.3" cy="15.2" r="0.35" fill="#5a5af0" opacity="0.4"/><circle cx="14.4" cy="8.4" r="0.35" fill="#5a5af0" opacity="0.4"/><circle cx="19.0" cy="12.5" r="0.35" fill="#5a5af0" opacity="0.4"/><rect x="15.0" y="17.4" width="4.4" height="0.6" fill="#888"/><path d="M41.1 31.6L39.0 35.7L40.8 36.1L37.5 33.4L41.8 33.3" fill="none" stroke="#5a5af0" stroke-width="0.4" opacity="0.55"/><circle cx="41.1" cy="31.6" r="0.74" fill="#5a5af0" opacity="0.55"/><circle cx="39.0" cy="35.7" r="0.63" fill="#5a5af0" opacity="0.55"/><circle cx="40.8" cy="36.1" r="0.41" fill="#5a5af0" opacity="0.55"/><circle cx="37.5" cy="33.4" r="0.40" fill="#5a5af0" opacity="0.55"/><circle cx="41.8" cy="33.3" r="0.84" fill="#5a5af0" opacity="0.55"/><circle cx="36.1" cy="31.4" r="0.35" fill="#5a5af0" opacity="0.4"/><circle cx="38.1" cy="35.1" r="0.35" fill="#5a5af0" opacity="0.4"/><circle cx="43.0" cy="33.4" r="0.35" fill="#5a5af0" opacity="0.4"/><rect x="37.5" y="37.7" width="4.4" height="0.6" fill="#888"/><path d="M11.0 57.8L8.0 59.8L7.2 59.5L8.1 57.9L9.8 55.3" fill="none" stroke="#5a5af0" stroke-width="0.4" opacity="0.55"/><circle cx="11.0" cy="57.8" r="0.59" fill="#5a5af0" opacity="0.55"/><circle cx="8.0" cy="59.8" r="0.74" fill="#5a5af0" opacity="0.55"/><circle cx="7.2" cy="59.5" r="0.58" fill="#5a5af0" opacity="0.55"/><circle cx="8.1" cy="57.9" r="0.47" fill="#5a5af0" opacity="0.55"/><circle cx="9.8" cy="55.3" r="0.40" fill="#5a5af0" opacity="0.55"/><circle cx="8.1" cy="57.5" r="0.35" fill="#5a5af0" opacity="0.4"/><circle cx="12.2" cy="55.1" r="0.35" fill="#5a5af0" opacity="0.4"/><circle cx="7.9" cy="58.8" r="0.35" fill="#5a5af0" opacity="0.4"/><rect x="5.1" y="62.2" width="4.4" height="0.6" fill="#888"/><path d="M21.7 36.6L20.2 36.3L21.9 36.3L16.7 33.9L20.9 34.8" fill="none" stroke="#5a5af0" stroke-width="0.4" opacity="0.55"/><circle cx="21.7" cy="36.6" r="0.76" fill="#5a5af0" opacity="0.55"/><circle cx="20.2" cy="36.3" r="0.51" fill="#5a5af0" opacity="0.55"/><circle cx="21.9" cy="36.3" r="0.54" fill="#5a5af0" opacity="0.55"/><circle cx="16.7" cy="33.9" r="0.61" fill="#5a5af0" opacity="0.55"/><circle cx="20.9" cy="34.8" r="0.52" fill="#5a5af0" opacity="0.55"/><circle cx="15.3" cy="34.0" r="0.35" fill="#5a5af0" opacity="0.4"/><circle cx="17.9" cy="39.2" r="0.35" fill="#5a5af0" opacity="0.4"/><circle cx="13.2" cy="38.0" r="0.35" fill="#5a5af0" opacity="0.4"/><rect x="17.4" y="41.6" width="4.4" height="0.6" fill="#888"/><path d="M27.2 47.0L27.9 45.4L32.5 43.8L32.7 42.6L29.2 46.7" fill="none" stroke="#5a5af0" stroke-width="0.4" opacity="0.55"/><circle cx="27.2" cy="47.0" r="0.49" fill="#5a5af0" opacity="0.55"/><circle cx="27.9" cy="45.4" r="0.62" fill="#5a5af0" opacity="0.55"/><circle cx="32.5" cy="43.8" r="0.57" fill="#5a5af0" opacity="0.55"/><circle cx="32.7" cy="42.6" r="0.70" fill="#5a5af0" opacity="0.55"/><circle cx="29.2" cy="46.7" r="0.46" fill="#5a5af0" opacity="0.55"/><circle cx="24.8" cy="44.6" r="0.35" fill="#5a5af0" opacity="0.4"/><circle cx="31.4" cy="43.0" r="0.35" fill="#5a5af0" opacity="0.4"/><circle cx="27.6" cy="43.5" r="0.35" fill="#5a5af0" opacity="0.4"/><rect x="27.2" y="49.2" width="4.4" height="0.6" fill="#888"/><path d="M54.2 34.7L54.3 33.4L52.5 34.5L50.8 31.5" fill="none" stroke="#5a5af0" stroke-width="0.4" opacity="0.55"/><circle cx="54.2" cy="34.7" r="0.43" fill="#5a5af0" opacity="0.55"/><circle cx="54.3" cy="33.4" r="0.75" fill="#5a5af0" opacity="0.55"/><circle cx="52.5" cy="34.5" r="0.77" fill="#5a5af0" opacity="0.55"/><circle cx="50.8" cy="31.5" r="0.84" fill="#5a5af0" opacity="0.55"/><circle cx="49.3" cy="32.0" r="0.35" fill="#5a5af0" opacity="0.4"/><circle cx="49.4" cy="36.5" r="0.35" fill="#5a5af0" opacity="0.4"/><circle cx="49.0" cy="32.3" r="0.35" fill="#5a5af0" opacity="0.4"/><rect x="49.2" y="37.8" width="4.4" height="0.6" fill="#888"/><path d="M85.4 58.7L81.5 56.4L83.4 56.9L81.9 58.7" fill="none" stroke="#5a5af0" stroke-width="0.4" opacity="0.55"/><circle cx="85.4" cy="58.7" r="0.82" fill="#5a5af0" opacity="0.55"/><circle cx="81.5" cy="56.4" r="0.69" fill="#5a5af0" opacity="0.55"/><circle cx="83.4" cy="56.9" r="0.61" fill="#5a5af0" opacity="0.55"/><circle cx="81.9" cy="58.7" r="0.78" fill="#5a5af0" opacity="0.55"/><circle cx="81.0" cy="57.7" r="0.35" fill="#5a5af0" opacity="0.4"/><circle cx="84.5" cy="58.9" r="0.35" fill="#5a5af0" opacity="0.4"/><circle cx="80.1" cy="57.8" r="0.35" fill="#5a5af0" opacity="0.4"/><rect x="80.6" y="62.7" width="4.4" height="0.6" fill="#888"/><path d="M75.5 33.5L76.2 32.5L68.0 34.5" fill="none" stroke="#5a5af0" stroke-width="0.4" opacity="0.55"/><circle cx="75.5" cy="33.5" r="0.51" fill="#5a5af0" opacity="0.55"/><circle cx="76.2" cy="32.5" r="0.71" fill="#5a5af0" opacity="0.55"/><circle cx="68.0" cy="34.5" r="0.73" fill="#5a5af0" opacity="0.55"/><circle cx="71.0" cy="36.8" r="0.35" fill="#5a5af0" opacity="0.4"/><circle cx="69.4" cy="37.2" r="0.35" fill="#5a5af0" opacity="0.4"/><circle cx="77.8" cy="31.3" r="0.35" fill="#5a5af0" opacity="0.4"/><rect x="69.8" y="39.3" width="4.4" height="0.6" fill="#888"/><path d="M31.9 23.8L29.8 24.0L31.1 25.9L32.0 25.1L28.9 22.6L27.3 25.7" fill="none" stroke="#5a5af0" stroke-width="0.4" opacity="0.55"/><circle cx="31.9" cy="23.8" r="0.38" fill="#5a5af0" opacity="0.55"/><circle cx="29.8" cy="24.0" r="0.63" fill="#5a5af0" opacity="0.55"/><circle cx="31.1" cy="25.9" r="0.80" fill="#5a5af0" opacity="0.55"/><circle cx="32.0" cy="25.1" r="0.51" fill="#5a5af0" opacity="0.55"/><circle cx="28.9" cy="22.6" r="0.54" fill="#5a5af0" opacity="0.55"/><circle cx="27.3" cy="25.7" r="0.56" fill="#5a5af0" opacity="0.55"/><circle cx="33.6" cy="25.3" r="0.35" fill="#5a5af0" opacity="0.4"/><circle cx="32.8" cy="21.1" r="0.35" fill="#5a5af0" opacity="0.4"/><circle cx="31.8" cy="23.8" r="0.35" fill="#5a5af0" opacity="0.4"/><rect x="27.7" y="28.0" width="4.4" height="0.6" fill="#888"/><path d="M16.7 47.4L20.4 46.7L13.6 47.6L21.3 49.7L13.5 46.1" fill="none" stroke="#5a5af0" stroke-width="0.4" opacity="0.55"/><circle cx="16.7" cy="47.4" r="0.46" fill="#5a5af0" opacity="0.55"/><circle cx="20.4" cy="46.7" r="0.52" fill="#5a5af0" opacity="0.55"/><circle cx="13.6" cy="47.6" r="0.83" fill="#5a5af0" opacity="0.55"/><circle cx="21.3" cy="49.7" r="0.56" fill="#5a5af0" opacity="0.55"/><circle cx="13.5" cy="46.1" r="0.51" fill="#5a5af0" opacity="0.55"/><circle cx="14.3" cy="46.4" r="0.35" fill="#5a5af0" opacity="0.4"/><circle cx="19.7" cy="45.4" r="0.35" fill="#5a5af0" opacity="0.4"/><circle cx="13.2" cy="44.1" r="0.35" fill="#5a5af0" opacity="0.4"/><rect x="15.2" y="52.2" width="4.4" height="0.6" fill="#888"/><path d="M28.8 35.4L28.5 36.0L25.2 36.3" fill="none" stroke="#5a5af0" stroke-width="0.4" opacity="0.55"/><circle cx="28.8" cy="35.4" r="0.52" fill="#5a5af0" opacity="0.55"/><circle cx="28.5" cy="36.0" r="0.80" fill="#5a5af0" opacity="0.55"/><circle cx="25.2" cy="36.3" r="0.79" fill="#5a5af0" opacity="0.55"/><circle cx="27.2" cy="33.8" r="0.35" fill="#5a5af0" opacity="0.4"/><circle cx="26.8" cy="33.9" r="0.35" fill="#5a5af0" opacity="0.4"/><circle cx="25.1" cy="35.0" r="0.35" fill="#5a5af0" opacity="0.4"/><rect x="25.2" y="40.3" width="4.4" height="0.6" fill="#888"/><path d="M69.7 46.2L72.8 46.9L74.5 45.5L72.7 46.5L70.6 45.5" fill="none" stroke="#5a5af0" stroke-width="0.4" opacity="0.55"/><circle cx="69.7" cy="46.2" r="0.74" fill="#5a5af0" opacity="0.55"/><circle cx="72.8" cy="46.9" r="0.65" fill="#5a5af0" opacity="0.55"/><circle cx="74.5" cy="45.5" r="0.62" fill="#5a5af0" opacity="0.55"/><circle cx="72.7" cy="46.5" r="0.78" fill="#5a5af0" opacity="0.55"/><circle cx="70.6" cy="45.5" r="0.84" fill="#5a5af0" opacity="0.55"/><circle cx="70.1" cy="42.6" r="0.35" fill="#5a5af0" opacity="0.4"/><circle cx="73.0" cy="43.1" r="0.35" fill="#5a5af0" opacity="0.4"/><circle cx="76.0" cy="45.2" r="0.35" fill="#5a5af0" opacity="0.4"/><rect x="69.9" y="49.1" width="4.4" height="0.6" fill="#888"/><path d="M91.0 39.7L88.2 36.1L93.9 36.7L95.2 35.9" fill="none" stroke="#5a5af0" stroke-width="0.4" opacity="0.55"/><circle cx="91.0" cy="39.7" r="0.45" fill="#5a5af0" opacity="0.55"/><circle cx="88.2" cy="36.1" r="0.59" fill="#5a5af0" opacity="0.55"/><circle cx="93.9" cy="36.7" r="0.36" fill="#5a5af0" opacity="0.55"/><circle cx="95.2" cy="35.9" r="0.54" fill="#5a5af0" opacity="0.55"/><circle cx="95.7" cy="38.5" r="0.35" fill="#5a5af0" opacity="0.4"/><circle cx="91.6" cy="33.8" r="0.35" fill="#5a5af0" opacity="0.4"/><circle cx="87.6" cy="31.5" r="0.35" fill="#5a5af0" opacity="0.4"/><rect x="89.7" y="41.5" width="4.4" height="0.6" fill="#888"/><path d="M73.8 20.4L75.1 25.1L68.0 21.2L65.8 26.5" fill="none" stroke="#5a5af0" stroke-width="0.4" opacity="0.55"/><circle cx="73.8" cy="20.4" r="0.77" fill="#5a5af0" opacity="0.55"/><circle cx="75.1" cy="25.1" r="0.52" fill="#5a5af0" opacity="0.55"/><circle cx="68.0" cy="21.2" r="0.44" fill="#5a5af0" opacity="0.55"/><circle cx="65.8" cy="26.5" r="0.39" fill="#5a5af0" opacity="0.55"/><circle cx="69.1" cy="21.6" r="0.35" fill="#5a5af0" opacity="0.4"/><circle cx="63.7" cy="21.6" r="0.35" fill="#5a5af0" opacity="0.4"/><circle cx="75.3" cy="18.9" r="0.35" fill="#5a5af0" opacity="0.4"/><rect x="68.2" y="29.6" width="4.4" height="0.6" fill="#888"/><path d="M58.6 13.2L58.9 12.0L61.5 14.1" fill="none" stroke="#5a5af0" stroke-width="0.4" opacity="0.55"/><circle cx="58.6" cy="13.2" r="0.40" fill="#5a5af0" opacity="0.55"/><circle cx="58.9" cy="12.0" r="0.47" fill="#5a5af0" opacity="0.55"/><circle cx="61.5" cy="14.1" r="0.78" fill="#5a5af0" opacity="0.55"/><circle cx="63.9" cy="12.8" r="0.35" fill="#5a5af0" opacity="0.4"/><circle cx="62.1" cy="13.1" r="0.35" fill="#5a5af0" opacity="0.4"/><circle cx="59.0" cy="16.4" r="0.35" fill="#5a5af0" opacity="0.4"/><rect x="57.5" y="17.0" width="4.4" height="0.6" fill="#888"/><path d="M65.0 59.0L57.1 59.9L62.2 55.7L64.9 59.7" fill="none" stroke="#5a5af0" stroke-width="0.4" opacity="0.55"/><circle cx="65.0" cy="59.0" r="0.60" fill="#5a5af0" opacity="0.55"/><circle cx="57.1" cy="59.9" r="0.52" fill="#5a5af0" opacity="0.55"/><circle cx="62.2" cy="55.7" r="0.43" fill="#5a5af0" opacity="0.55"/><circle cx="64.9" cy="59.7" r="0.58" fill="#5a5af0" opacity="0.55"/><circle cx="58.9" cy="55.8" r="0.35" fill="#5a5af0" opacity="0.4"/><circle cx="62.6" cy="60.2" r="0.35" fill="#5a5af0" opacity="0.4"/><circle cx="66.7" cy="63.3" r="0.35" fill="#5a5af0" opacity="0.4"/><rect x="58.5" y="63.7" width="4.4" height="0.6" fill="#888"/><path d="M6.4 46.9L9.0 43.9L7.4 46.8L7.9 48.6L6.5 46.7L8.8 49.3" fill="none" stroke="#5a5af0" stroke-width="0.4" opacity="0.55"/><circle cx="6.4" cy="46.9" r="0.78" fill="#5a5af0" opacity="0.55"/><circle cx="9.0" cy="43.9" r="0.73" fill="#5a5af0" opacity="0.55"/><circle cx="7.4" cy="46.8" r="0.60" fill="#5a5af0" opacity="0.55"/><circle cx="7.9" cy="48.6" r="0.61" fill="#5a5af0" opacity="0.55"/><circle cx="6.5" cy="46.7" r="0.63" fill="#5a5af0" opacity="0.55"/><circle cx="8.8" cy="49.3" r="0.35" fill="#5a5af0" opacity="0.55"/><circle cx="7.2" cy="43.0" r="0.35" fill="#5a5af0" opacity="0.4"/><circle cx="6.0" cy="49.7" r="0.35" fill="#5a5af0" opacity="0.4"/><circle cx="9.9" cy="45.8" r="0.35" fill="#5a5af0" opacity="0.4"/><rect x="4.9" y="51.2" width="4.4" height="0.6" fill="#888"/><path d="M15.2 24.2L20.1 20.8L17.5 23.7L14.1 20.3" fill="none" stroke="#5a5af0" stroke-width="0.4" opacity="0.55"/><circle cx="15.2" cy="24.2" r="0.82" fill="#5a5af0" opacity="0.55"/><circle cx="20.1" cy="20.8" r="0.70" fill="#5a5af0" opacity="0.55"/><circle cx="17.5" cy="23.7" r="0.66" fill="#5a5af0" opacity="0.55"/><circle cx="14.1" cy="20.3" r="0.40" fill="#5a5af0" opacity="0.55"/><circle cx="20.6" cy="22.2" r="0.35" fill="#5a5af0" opacity="0.4"/><circle cx="15.7" cy="23.6" r="0.35" fill="#5a5af0" opacity="0.4"/><circle cx="15.5" cy="27.0" r="0.35" fill="#5a5af0" opacity="0.4"/><rect x="13.9" y="27.7" width="4.4" height="0.6" fill="#888"/><path d="M34.3 23.6L35.2 23.0L36.4 21.8L35.1 25.1" fill="none" stroke="#5a5af0" stroke-width="0.4" opacity="0.55"/><circle cx="34.3" cy="23.6" r="0.38" fill="#5a5af0" opacity="0.55"/><circle cx="35.2" cy="23.0" r="0.46" fill="#5a5af0" opacity="0.55"/><circle cx="36.4" cy="21.8" r="0.37" fill="#5a5af0" opacity="0.55"/><circle cx="35.1" cy="25.1" r="0.62" fill="#5a5af0" opacity="0.55"/><circle cx="34.9" cy="20.3" r="0.35" fill="#5a5af0" opacity="0.4"/><circle cx="32.6" cy="25.3" r="0.35" fill="#5a5af0" opacity="0.4"/><circle cx="39.1" cy="19.8" r="0.35" fill="#5a5af0" opacity="0.4"/><rect x="36.6" y="29.9" width="4.4" height="0.6" fill="#888"/><path d="M90.2 53.8L86.5 54.0L88.8 57.7L88.2 54.0L91.8 57.6L93.5 53.6" fill="none" stroke="#5a5af0" stroke-width="0.4" opacity="0.55"/><circle cx="90.2" cy="53.8" r="0.43" fill="#5a5af0" opacity="0.55"/><circle cx="86.5" cy="54.0" r="0.57" fill="#5a5af0" opacity="0.55"/><circle cx="88.8" cy="57.7" r="0.85" fill="#5a5af0" opacity="0.55"/><circle cx="88.2" cy="54.0" r="0.62" fill="#5a5af0" opacity="0.55"/><circle cx="91.8" cy="57.6" r="0.79" fill="#5a5af0" opacity="0.55"/><circle cx="93.5" cy="53.6" r="0.46" fill="#5a5af0" opacity="0.55"/><circle cx="89.5" cy="57.4" r="0.35" fill="#5a5af0" opacity="0.4"/><circle cx="87.1" cy="56.1" r="0.35" fill="#5a5af0" opacity="0.4"/><circle cx="92.9" cy="58.3" r="0.35" fill="#5a5af0" opacity="0.4"/><rect x="87.5" y="60.2" width="4.4" height="0.6" fill="#888"/><path d="M51.8 44.1L49.8 44.1L51.1 50.2L45.7 47.4" fill="none" stroke="#5a5af0" stroke-width="0.4" opacity="0.55"/><circle cx="51.8" cy="44.1" r="0.66" fill="#5a5af0" opacity="0.55"/><circle cx="49.8" cy="44.1" r="0.54" fill="#5a5af0" opacity="0.55"/><circle cx="51.1" cy="50.2" r="0.73" fill="#5a5af0" opacity="0.55"/><circle cx="45.7" cy="47.4" r="0.59" fill="#5a5af0" opacity="0.55"/><circle cx="50.8" cy="44.5" r="0.35" fill="#5a5af0" opacity="0.4"/><circle cx="51.1" cy="52.0" r="0.35" fill="#5a5af0" opacity="0.4"/><circle cx="50.4" cy="42.2" r="0.35" fill="#5a5af0" opacity="0.4"/><rect x="48.1" y="52.8" width="4.4" height="0.6" fill="#888"/><path d="M62.2 43.7L60.3 45.8L58.5 44.2L60.8 43.5" fill="none" stroke="#5a5af0" stroke-width="0.4" opacity="0.55"/><circle cx="62.2" cy="43.7" r="0.80" fill="#5a5af0" opacity="0.55"/><circle cx="60.3" cy="45.8" r="0.36" fill="#5a5af0" opacity="0.55"/><circle cx="58.5" cy="44.2" r="0.79" fill="#5a5af0" opacity="0.55"/><circle cx="60.8" cy="43.5" r="0.68" fill="#5a5af0" opacity="0.55"/><circle cx="59.5" cy="43.5" r="0.35" fill="#5a5af0" opacity="0.4"/><circle cx="63.2" cy="46.1" r="0.35" fill="#5a5af0" opacity="0.4"/><circle cx="58.0" cy="43.7" r="0.35" fill="#5a5af0" opacity="0.4"/><rect x="58.1" y="48.5" width="4.4" height="0.6" fill="#888"/><path d="M8.7 36.2L5.9 38.0L6.9 37.0L3.3 35.2L1.8 36.6" fill="none" stroke="#5a5af0" stroke-width="0.4" opacity="0.55"/><circle cx="8.7" cy="36.2" r="0.61" fill="#5a5af0" opacity="0.55"/><circle cx="5.9" cy="38.0" r="0.78" fill="#5a5af0" opacity="0.55"/><circle cx="6.9" cy="37.0" r="0.70" fill="#5a5af0" opacity="0.55"/><circle cx="3.3" cy="35.2" r="0.61" fill="#5a5af0" opacity="0.55"/><circle cx="1.8" cy="36.6" r="0.65" fill="#5a5af0" opacity="0.55"/><circle cx="2.8" cy="34.1" r="0.35" fill="#5a5af0" opacity="0.4"/><circle cx="5.6" cy="36.1" r="0.35" fill="#5a5af0" opacity="0.4"/><circle cx="0.1" cy="36.3" r="0.35" fill="#5a5af0" opacity="0.4"/><rect x="3.4" y="40.0" width="4.4" height="0.6" fill="#888"/><path d="M66.8 17.3L69.6 18.0L70.4 18.3L74.6 13.6L74.3 10.3" fill="none" stroke="#5a5af0" stroke-width="0.4" opacity="0.55"/><circle cx="66.8" cy="17.3" r="0.39" fill="#5a5af0" opacity="0.55"/><circle cx="69.6" cy="18.0" r="0.64" fill="#5a5af0" opacity="0.55"/><circle cx="70.4" cy="18.3" r="0.50" fill="#5a5af0" opacity="0.55"/><circle cx="74.6" cy="13.6" r="0.55" fill="#5a5af0" opacity="0.55"/><circle cx="74.3" cy="10.3" r="0.70" fill="#5a5af0" opacity="0.55"/><circle cx="71.5" cy="15.8" r="0.35" fill="#5a5af0" opacity="0.4"/><circle cx="75.7" cy="18.5" r="0.35" fill="#5a5af0" opacity="0.4"/><circle cx="65.8" cy="18.4" r="0.35" fill="#5a5af0" opacity="0.4"/><rect x="69.7" y="20.3" width="4.4" height="0.6" fill="#888"/><path d="M49.8 22.7L50.6 24.0L51.7 23.2L51.7 21.2" fill="none" stroke="#5a5af0" stroke-width="0.4" opacity="0.55"/><circle cx="49.8" cy="22.7" r="0.67" fill="#5a5af0" opacity="0.55"/><circle cx="50.6" cy="24.0" r="0.56" fill="#5a5af0" opacity="0.55"/><circle cx="51.7" cy="23.2" r="0.53" fill="#5a5af0" opacity="0.55"/><circle cx="51.7" cy="21.2" r="0.69" fill="#5a5af0" opacity="0.55"/><circle cx="46.8" cy="21.6" r="0.35" fill="#5a5af0" opacity="0.4"/><circle cx="53.4" cy="25.5" r="0.35" fill="#5a5af0" opacity="0.4"/><circle cx="52.5" cy="25.4" r="0.35" fill="#5a5af0" opacity="0.4"/><rect x="48.3" y="26.9" width="4.4" height="0.6" fill="#888"/><path d="M82.6 21.9L79.1 21.4L77.6 23.4L82.6 24.2" fill="none" stroke="#5a5af0" stroke-width="0.4" opacity="0.55"/><circle cx="82.6" cy="21.9" r="0.57" fill="#5a5af0" opacity="0.55"/><circle cx="79.1" cy="21.4" r="0.72" fill="#5a5af0" opacity="0.55"/><circle cx="77.6" cy="23.4" r="0.63" fill="#5a5af0" opacity="0.55"/><circle cx="82.6" cy="24.2" r="0.78" fill="#5a5af0" opacity="0.55"/><circle cx="82.0" cy="24.0" r="0.35" fill="#5a5af0" opacity="0.4"/><circle cx="82.5" cy="20.2" r="0.35" fill="#5a5af0" opacity="0.4"/><circle cx="77.1" cy="25.2" r="0.35" fill="#5a5af0" opacity="0.4"/><rect x="79.3" y="27.0" width="4.4" height="0.6" fill="#888"/><path d="M96.4 44.0L91.5 49.5L90.5 48.5L94.6 49.3" fill="none" stroke="#5a5af0" stroke-width="0.4" opacity="0.55"/><circle cx="96.4" cy="44.0" r="0.35" fill="#5a5af0" opacity="0.55"/><circle cx="91.5" cy="49.5" r="0.54" fill="#5a5af0" opacity="0.55"/><circle cx="90.5" cy="48.5" r="0.37" fill="#5a5af0" opacity="0.55"/><circle cx="94.6" cy="49.3" r="0.81" fill="#5a5af0" opacity="0.55"/><circle cx="95.5" cy="43.5" r="0.35" fill="#5a5af0" opacity="0.4"/><circle cx="87.2" cy="41.4" r="0.35" fill="#5a5af0" opacity="0.4"/><circle cx="99.3" cy="43.0" r="0.35" fill="#5a5af0" opacity="0.4"/><rect x="90.3" y="51.6" width="4.4" height="0.6" fill="#888"/><path d="M61.2 38.5L64.3 34.4L64.3 39.0L59.5 33.4" fill="none" stroke="#5a5af0" stroke-width="0.4" opacity="0.55"/><circle cx="61.2" cy="38.5" r="0.62" fill="#5a5af0" opacity="0.55"/><circle cx="64.3" cy="34.4" r="0.60" fill="#5a5af0" opacity="0.55"/><circle cx="64.3" cy="39.0" r="0.85" fill="#5a5af0" opacity="0.55"/><circle cx="59.5" cy="33.4" r="0.47" fill="#5a5af0" opacity="0.55"/><circle cx="62.6" cy="38.8" r="0.35" fill="#5a5af0" opacity="0.4"/><circle cx="60.9" cy="33.8" r="0.35" fill="#5a5af0" opacity="0.4"/><circle cx="65.1" cy="33.5" r="0.35" fill="#5a5af0" opacity="0.4"/><rect x="57.4" y="41.4" width="4.4" height="0.6" fill="#888"/><path d="M91.2 23.5L94.2 23.3L95.8 25.2" fill="none" stroke="#5a5af0" stroke-width="0.4" opacity="0.55"/><circle cx="91.2" cy="23.5" r="0.83" fill="#5a5af0" opacity="0.55"/><circle cx="94.2" cy="23.3" r="0.57" fill="#5a5af0" opacity="0.55"/><circle cx="95.8" cy="25.2" r="0.38" fill="#5a5af0" opacity="0.55"/><circle cx="97.5" cy="22.5" r="0.35" fill="#5a5af0" opacity="0.4"/><circle cx="99.1" cy="29.7" r="0.35" fill="#5a5af0" opacity="0.4"/><circle cx="92.5" cy="29.0" r="0.35" fill="#5a5af0" opacity="0.4"/><rect x="91.0" y="30.0" width="4.4" height="0.6" fill="#888"/><path d="M18.2 56.9L16.9 58.2L15.6 56.2L22.5 59.8L19.4 56.1L15.5 58.9" fill="none" stroke="#5a5af0" stroke-width="0.4" opacity="0.55"/><circle cx="18.2" cy="56.9" r="0.66" fill="#5a5af0" opacity="0.55"/><circle cx="16.9" cy="58.2" r="0.36" fill="#5a5af0" opacity="0.55"/><circle cx="15.6" cy="56.2" r="0.83" fill="#5a5af0" opacity="0.55"/><circle cx="22.5" cy="59.8" r="0.54" fill="#5a5af0" opacity="0.55"/><circle cx="19.4" cy="56.1" r="0.48" fill="#5a5af0" opacity="0.55"/><circle cx="15.5" cy="58.9" r="0.67" fill="#5a5af0" opacity="0.55"/><circle cx="23.0" cy="57.0" r="0.35" fill="#5a5af0" opacity="0.4"/><circle cx="18.7" cy="54.5" r="0.35" fill="#5a5af0" opacity="0.4"/><circle cx="18.2" cy="61.5" r="0.35" fill="#5a5af0" opacity="0.4"/><rect x="16.4" y="62.7" width="4.4" height="0.6" fill="#888"/><path d="M54.0 12.1L47.2 10.5L56.8 11.3L45.9 15.1L52.4 10.8" fill="none" stroke="#5a5af0" stroke-width="0.4" opacity="0.55"/><circle cx="54.0" cy="12.1" r="0.75" fill="#5a5af0" opacity="0.55"/><circle cx="47.2" cy="10.5" r="0.83" fill="#5a5af0" opacity="0.55"/><circle cx="56.8" cy="11.3" r="0.55" fill="#5a5af0" opacity="0.55"/><circle cx="45.9" cy="15.1" r="0.37" fill="#5a5af0" opacity="0.55"/><circle cx="52.4" cy="10.8" r="0.62" fill="#5a5af0" opacity="0.55"/><circle cx="51.7" cy="17.4" r="0.35" fill="#5a5af0" opacity="0.4"/><circle cx="57.7" cy="9.1" r="0.35" fill="#5a5af0" opacity="0.4"/><circle cx="58.4" cy="11.6" r="0.35" fill="#5a5af0" opacity="0.4"/><rect x="49.2" y="18.0" width="4.4" height="0.6" fill="#888"/><path d="M34.3 11.7L37.8 10.8L39.6 12.7L40.2 10.2" fill="none" stroke="#5a5af0" stroke-width="0.4" opacity="0.55"/><circle cx="34.3" cy="11.7" r="0.44" fill="#5a5af0" opacity="0.55"/><circle cx="37.8" cy="10.8" r="0.50" fill="#5a5af0" opacity="0.55"/><circle cx="39.6" cy="12.7" r="0.61" fill="#5a5af0" opacity="0.55"/><circle cx="40.2" cy="10.2" r="0.48" fill="#5a5af0" opacity="0.55"/><circle cx="37.7" cy="11.0" r="0.35" fill="#5a5af0" opacity="0.4"/><circle cx="33.4" cy="14.5" r="0.35" fill="#5a5af0" opacity="0.4"/><circle cx="38.0" cy="15.0" r="0.35" fill="#5a5af0" opacity="0.4"/><rect x="35.4" y="16.3" width="4.4" height="0.6" fill="#888"/><path d="M41.9 57.3L38.9 59.0L41.2 55.9L43.6 55.6L39.3 58.4L35.9 55.1" fill="none" stroke="#5a5af0" stroke-width="0.4" opacity="0.55"/><circle cx="41.9" cy="57.3" r="0.57" fill="#5a5af0" opacity="0.55"/><circle cx="38.9" cy="59.0" r="0.71" fill="#5a5af0" opacity="0.55"/><circle cx="41.2" cy="55.9" r="0.42" fill="#5a5af0" opacity="0.55"/><circle cx="43.6" cy="55.6" r="0.75" fill="#5a5af0" opacity="0.55"/><circle cx="39.3" cy="58.4" r="0.54" fill="#5a5af0" opacity="0.55"/><circle cx="35.9" cy="55.1" r="0.39" fill="#5a5af0" opacity="0.55"/><circle cx="43.9" cy="59.5" r="0.35" fill="#5a5af0" opacity="0.4"/><circle cx="35.1" cy="54.3" r="0.35" fill="#5a5af0" opacity="0.4"/><circle cx="32.9" cy="56.7" r="0.35" fill="#5a5af0" opacity="0.4"/><rect x="36.8" y="63.1" width="4.4" height="0.6" fill="#888"/><path d="M52.7 54.0L50.0 57.4L50.1 56.7" fill="none" stroke="#5a5af0" stroke-width="0.4" opacity="0.55"/><circle cx="52.7" cy="54.0" r="0.54" fill="#5a5af0" opacity="0.55"/><circle cx="50.0" cy="57.4" r="0.64" fill="#5a5af0" opacity="0.55"/><circle cx="50.1" cy="56.7" r="0.69" fill="#5a5af0" opacity="0.55"/><circle cx="54.0" cy="55.5" r="0.35" fill="#5a5af0" opacity="0.4"/><circle cx="52.2" cy="57.8" r="0.35" fill="#5a5af0" opacity="0.4"/><circle cx="47.9" cy="57.0" r="0.35" fill="#5a5af0" opacity="0.4"/><rect x="47.8" y="59.4" width="4.4" height="0.6" fill="#888"/><path d="M30.8 57.7L24.2 57.2L30.0 54.9L26.9 54.2L30.8 53.5" fill="none" stroke="#5a5af0" stroke-width="0.4" opacity="0.55"/><circle cx="30.8" cy="57.7" r="0.70" fill="#5a5af0" opacity="0.55"/><circle cx="24.2" cy="57.2" r="0.84" fill="#5a5af0" opacity="0.55"/><circle cx="30.0" cy="54.9" r="0.84" fill="#5a5af0" opacity="0.55"/><circle cx="26.9" cy="54.2" r="0.78" fill="#5a5af0" opacity="0.55"/><circle cx="30.8" cy="53.5" r="0.57" fill="#5a5af0" opacity="0.55"/><circle cx="31.4" cy="58.6" r="0.35" fill="#5a5af0" opacity="0.4"/><circle cx="25.5" cy="54.3" r="0.35" fill="#5a5af0" opacity="0.4"/><circle cx="24.5" cy="53.9" r="0.35" fill="#5a5af0" opacity="0.4"/><rect x="24.2" y="60.1" width="4.4" height="0.6" fill="#888"/><path d="M64.2 22.0L64.2 23.3L60.1 27.4" fill="none" stroke="#5a5af0" stroke-width="0.4" opacity="0.55"/><circle cx="64.2" cy="22.0" r="0.68" fill="#5a5af0" opacity="0.55"/><circle cx="64.2" cy="23.3" r="0.41" fill="#5a5af0" opacity="0.55"/><circle cx="60.1" cy="27.4" r="0.47" fill="#5a5af0" opacity="0.55"/><circle cx="62.0" cy="26.1" r="0.35" fill="#5a5af0" opacity="0.4"/><circle cx="54.6" cy="24.3" r="0.35" fill="#5a5af0" opacity="0.4"/><circle cx="62.6" cy="28.8" r="0.35" fill="#5a5af0" opacity="0.4"/><rect x="58.2" y="29.4" width="4.4" height="0.6" fill="#888"/><path d="M77.9 46.9L83.7 49.8L80.5 50.0L76.4 45.4" fill="none" stroke="#5a5af0" stroke-width="0.4" opacity="0.55"/><circle cx="77.9" cy="46.9" r="0.43" fill="#5a5af0" opacity="0.55"/><circle cx="83.7" cy="49.8" r="0.48" fill="#5a5af0" opacity="0.55"/><circle cx="80.5" cy="50.0" r="0.49" fill="#5a5af0" opacity="0.55"/><circle cx="76.4" cy="45.4" r="0.62" fill="#5a5af0" opacity="0.55"/><circle cx="83.8" cy="45.9" r="0.35" fill="#5a5af0" opacity="0.4"/><circle cx="77.4" cy="46.9" r="0.35" fill="#5a5af0" opacity="0.4"/><circle cx="84.5" cy="47.2" r="0.35" fill="#5a5af0" opacity="0.4"/><rect x="77.2" y="51.8" width="4.4" height="0.6" fill="#888"/><path d="M69.1 54.4L69.0 58.1L72.6 56.3" fill="none" stroke="#5a5af0" stroke-width="0.4" opacity="0.55"/><circle cx="69.1" cy="54.4" r="0.37" fill="#5a5af0" opacity="0.55"/><circle cx="69.0" cy="58.1" r="0.75" fill="#5a5af0" opacity="0.55"/><circle cx="72.6" cy="56.3" r="0.84" fill="#5a5af0" opacity="0.55"/><circle cx="66.8" cy="60.9" r="0.35" fill="#5a5af0" opacity="0.4"/><circle cx="72.5" cy="52.8" r="0.35" fill="#5a5af0" opacity="0.4"/><circle cx="66.9" cy="58.2" r="0.35" fill="#5a5af0" opacity="0.4"/><rect x="70.4" y="61.2" width="4.4" height="0.6" fill="#888"/></svg></div><div class="ct">Design Elements —<br>Constellations Except<br>Zodiac, Northern and<br>Southern</div></div>
<div class="card tex" style="left:1138px;top:322px;height:133px"><div class="th"><svg width="99" height="66" viewBox="0 0 99 66"><rect width="99" height="66" fill="#fff"/><rect x="2.5" y="10.5" width="8" height="0.8" fill="#aaa"/><rect x="27" y="25" width="8" height="0.8" fill="#aaa"/><rect x="43" y="17.3" width="13" height="0.8" fill="#aaa"/><rect x="43" y="36" width="13" height="0.8" fill="#aaa"/><rect x="83" y="25" width="8" height="0.8" fill="#aaa"/><rect x="3.0" y="12.5" width="10.4" height="10.4" fill="#050505"/><ellipse cx="8.2" cy="17.7" rx="3.8" ry="3.6" fill="#6a6a6a"/><circle cx="8.2" cy="17.7" r="0.7" fill="#ddd"/><rect x="14.7" y="12.5" width="10.4" height="10.4" fill="#050505"/><ellipse cx="19.9" cy="17.7" rx="3.8" ry="2.6" fill="#6a6a6a"/><circle cx="19.9" cy="17.7" r="0.7" fill="#ddd"/><rect x="3.0" y="24.3" width="10.4" height="10.4" fill="#050505"/><ellipse cx="8.2" cy="29.5" rx="3.8" ry="3.6" fill="#6a6a6a"/><circle cx="8.2" cy="29.5" r="0.7" fill="#ddd"/><rect x="14.7" y="24.3" width="10.4" height="10.4" fill="#050505"/><ellipse cx="19.9" cy="29.5" rx="3.8" ry="2.6" fill="#6a6a6a"/><circle cx="19.9" cy="29.5" r="0.7" fill="#ddd"/><rect x="3.0" y="36.1" width="10.4" height="10.4" fill="#050505"/><ellipse cx="8.2" cy="41.300000000000004" rx="3.8" ry="3.6" fill="#6a6a6a"/><circle cx="8.2" cy="41.300000000000004" r="0.7" fill="#ddd"/><rect x="14.7" y="36.1" width="10.4" height="10.4" fill="#050505"/><ellipse cx="19.9" cy="41.300000000000004" rx="3.8" ry="2.6" fill="#6a6a6a"/><circle cx="19.9" cy="41.300000000000004" r="0.7" fill="#ddd"/><rect x="3.0" y="47.900000000000006" width="10.4" height="10.4" fill="#050505"/><ellipse cx="8.2" cy="53.10000000000001" rx="3.8" ry="3.6" fill="#6a6a6a"/><circle cx="8.2" cy="53.10000000000001" r="0.7" fill="#ddd"/><rect x="14.7" y="47.900000000000006" width="10.4" height="10.4" fill="#050505"/><ellipse cx="19.9" cy="53.10000000000001" rx="3.8" ry="1.8" fill="#6a6a6a"/><circle cx="19.9" cy="53.10000000000001" r="0.7" fill="#ddd"/><rect x="27.3" y="27.6" width="14" height="13.7" fill="#050505"/><ellipse cx="34.3" cy="34.5" rx="6" ry="1.3" fill="#777"/><rect x="43.0" y="19.0" width="11.8" height="12" fill="#050505"/><path d="M49.66 25.00L49.74 25.15L49.79 25.33L49.80 25.54L49.77 25.76L49.68 25.98L49.54 26.19L49.35 26.37L49.11 26.53L48.83 26.64L48.51 26.70L48.18 26.69L47.83 26.62L47.49 26.47L47.17 26.25L46.89 25.97L46.65 25.62L46.48 25.22L46.38 24.77L46.37 24.30L46.45 23.82L46.62 23.34L46.88 22.89L47.24 22.48L47.67 22.13L48.18 21.86L48.75 21.69L49.36 21.62L49.99 21.66L50.61 21.82L51.21 22.10L51.77 22.50L52.25 23.00L52.65 23.59L52.94 24.27L53.10 25.00" fill="none" stroke="#999" stroke-width="0.5"/><path d="M48.14 25.00L48.06 24.85L48.01 24.67L48.00 24.46L48.03 24.24L48.12 24.02L48.26 23.81L48.45 23.63L48.69 23.47L48.97 23.36L49.29 23.30L49.62 23.31L49.97 23.38L50.31 23.53L50.63 23.75L50.91 24.03L51.15 24.38L51.32 24.78L51.42 25.23L51.43 25.70L51.35 26.18L51.18 26.66L50.92 27.11L50.56 27.52L50.13 27.87L49.62 28.14L49.05 28.31L48.44 28.38L47.81 28.34L47.19 28.18L46.59 27.90L46.03 27.50L45.55 27.00L45.15 26.41L44.86 25.73L44.70 25.00" fill="none" stroke="#999" stroke-width="0.5"/><circle cx="48.9" cy="25.0" r="0.92" fill="#999"/><rect x="43.0" y="37.7" width="11.8" height="12" fill="#050505"/><path d="M49.66 43.70L49.74 43.85L49.79 44.03L49.80 44.24L49.77 44.46L49.68 44.68L49.54 44.89L49.35 45.07L49.11 45.23L48.83 45.34L48.51 45.40L48.18 45.39L47.83 45.32L47.49 45.17L47.17 44.95L46.89 44.67L46.65 44.32L46.48 43.92L46.38 43.47L46.37 43.00L46.45 42.52L46.62 42.04L46.88 41.59L47.24 41.18L47.67 40.83L48.18 40.56L48.75 40.39L49.36 40.32L49.99 40.36L50.61 40.52L51.21 40.80L51.77 41.20L52.25 41.70L52.65 42.29L52.94 42.97L53.10 43.70" fill="none" stroke="#999" stroke-width="0.5"/><path d="M48.14 43.70L48.06 43.55L48.01 43.37L48.00 43.16L48.03 42.94L48.12 42.72L48.26 42.51L48.45 42.33L48.69 42.17L48.97 42.06L49.29 42.00L49.62 42.01L49.97 42.08L50.31 42.23L50.63 42.45L50.91 42.73L51.15 43.08L51.32 43.48L51.42 43.93L51.43 44.40L51.35 44.88L51.18 45.36L50.92 45.81L50.56 46.22L50.13 46.57L49.62 46.84L49.05 47.01L48.44 47.08L47.81 47.04L47.19 46.88L46.59 46.60L46.03 46.20L45.55 45.70L45.15 45.11L44.86 44.43L44.70 43.70" fill="none" stroke="#999" stroke-width="0.5"/><circle cx="48.9" cy="43.7" r="0.92" fill="#999"/><rect x="56.5" y="19.0" width="11.8" height="12" fill="#050505"/><path d="M63.16 25.00L63.24 25.15L63.29 25.33L63.30 25.54L63.27 25.76L63.18 25.98L63.04 26.19L62.85 26.37L62.61 26.53L62.33 26.64L62.01 26.70L61.68 26.69L61.33 26.62L60.99 26.47L60.67 26.25L60.39 25.97L60.15 25.62L59.98 25.22L59.88 24.77L59.87 24.30L59.95 23.82L60.12 23.34L60.38 22.89L60.74 22.48L61.17 22.13L61.68 21.86L62.25 21.69L62.86 21.62L63.49 21.66L64.11 21.82L64.71 22.10L65.27 22.50L65.75 23.00L66.15 23.59L66.44 24.27L66.60 25.00" fill="none" stroke="#999" stroke-width="0.5"/><path d="M61.64 25.00L61.56 24.85L61.51 24.67L61.50 24.46L61.53 24.24L61.62 24.02L61.76 23.81L61.95 23.63L62.19 23.47L62.47 23.36L62.79 23.30L63.12 23.31L63.47 23.38L63.81 23.53L64.13 23.75L64.41 24.03L64.65 24.38L64.82 24.78L64.92 25.23L64.93 25.70L64.85 26.18L64.68 26.66L64.42 27.11L64.06 27.52L63.63 27.87L63.12 28.14L62.55 28.31L61.94 28.38L61.31 28.34L60.69 28.18L60.09 27.90L59.53 27.50L59.05 27.00L58.65 26.41L58.36 25.73L58.20 25.00" fill="none" stroke="#999" stroke-width="0.5"/><circle cx="62.4" cy="25.0" r="0.92" fill="#999"/><rect x="56.5" y="37.7" width="11.8" height="12" fill="#050505"/><path d="M63.16 43.70L63.24 43.85L63.29 44.03L63.30 44.24L63.27 44.46L63.18 44.68L63.04 44.89L62.85 45.07L62.61 45.23L62.33 45.34L62.01 45.40L61.68 45.39L61.33 45.32L60.99 45.17L60.67 44.95L60.39 44.67L60.15 44.32L59.98 43.92L59.88 43.47L59.87 43.00L59.95 42.52L60.12 42.04L60.38 41.59L60.74 41.18L61.17 40.83L61.68 40.56L62.25 40.39L62.86 40.32L63.49 40.36L64.11 40.52L64.71 40.80L65.27 41.20L65.75 41.70L66.15 42.29L66.44 42.97L66.60 43.70" fill="none" stroke="#999" stroke-width="0.5"/><path d="M61.64 43.70L61.56 43.55L61.51 43.37L61.50 43.16L61.53 42.94L61.62 42.72L61.76 42.51L61.95 42.33L62.19 42.17L62.47 42.06L62.79 42.00L63.12 42.01L63.47 42.08L63.81 42.23L64.13 42.45L64.41 42.73L64.65 43.08L64.82 43.48L64.92 43.93L64.93 44.40L64.85 44.88L64.68 45.36L64.42 45.81L64.06 46.22L63.63 46.57L63.12 46.84L62.55 47.01L61.94 47.08L61.31 47.04L60.69 46.88L60.09 46.60L59.53 46.20L59.05 45.70L58.65 45.11L58.36 44.43L58.20 43.70" fill="none" stroke="#999" stroke-width="0.5"/><circle cx="62.4" cy="43.7" r="0.92" fill="#999"/><rect x="70.0" y="19.0" width="11.8" height="12" fill="#050505"/><path d="M76.66 25.00L76.74 25.15L76.79 25.33L76.80 25.54L76.77 25.76L76.68 25.98L76.54 26.19L76.35 26.37L76.11 26.53L75.83 26.64L75.51 26.70L75.18 26.69L74.83 26.62L74.49 26.47L74.17 26.25L73.89 25.97L73.65 25.62L73.48 25.22L73.38 24.77L73.37 24.30L73.45 23.82L73.62 23.34L73.88 22.89L74.24 22.48L74.67 22.13L75.18 21.86L75.75 21.69L76.36 21.62L76.99 21.66L77.61 21.82L78.21 22.10L78.77 22.50L79.25 23.00L79.65 23.59L79.94 24.27L80.10 25.00" fill="none" stroke="#999" stroke-width="0.5"/><path d="M75.14 25.00L75.06 24.85L75.01 24.67L75.00 24.46L75.03 24.24L75.12 24.02L75.26 23.81L75.45 23.63L75.69 23.47L75.97 23.36L76.29 23.30L76.62 23.31L76.97 23.38L77.31 23.53L77.63 23.75L77.91 24.03L78.15 24.38L78.32 24.78L78.42 25.23L78.43 25.70L78.35 26.18L78.18 26.66L77.92 27.11L77.56 27.52L77.13 27.87L76.62 28.14L76.05 28.31L75.44 28.38L74.81 28.34L74.19 28.18L73.59 27.90L73.03 27.50L72.55 27.00L72.15 26.41L71.86 25.73L71.70 25.00" fill="none" stroke="#999" stroke-width="0.5"/><circle cx="75.9" cy="25.0" r="0.92" fill="#999"/><rect x="70.0" y="37.7" width="11.8" height="12" fill="#050505"/><path d="M76.66 43.70L76.74 43.85L76.79 44.03L76.80 44.24L76.77 44.46L76.68 44.68L76.54 44.89L76.35 45.07L76.11 45.23L75.83 45.34L75.51 45.40L75.18 45.39L74.83 45.32L74.49 45.17L74.17 44.95L73.89 44.67L73.65 44.32L73.48 43.92L73.38 43.47L73.37 43.00L73.45 42.52L73.62 42.04L73.88 41.59L74.24 41.18L74.67 40.83L75.18 40.56L75.75 40.39L76.36 40.32L76.99 40.36L77.61 40.52L78.21 40.80L78.77 41.20L79.25 41.70L79.65 42.29L79.94 42.97L80.10 43.70" fill="none" stroke="#999" stroke-width="0.5"/><path d="M75.14 43.70L75.06 43.55L75.01 43.37L75.00 43.16L75.03 42.94L75.12 42.72L75.26 42.51L75.45 42.33L75.69 42.17L75.97 42.06L76.29 42.00L76.62 42.01L76.97 42.08L77.31 42.23L77.63 42.45L77.91 42.73L78.15 43.08L78.32 43.48L78.42 43.93L78.43 44.40L78.35 44.88L78.18 45.36L77.92 45.81L77.56 46.22L77.13 46.57L76.62 46.84L76.05 47.01L75.44 47.08L74.81 47.04L74.19 46.88L73.59 46.60L73.03 46.20L72.55 45.70L72.15 45.11L71.86 44.43L71.70 43.70" fill="none" stroke="#999" stroke-width="0.5"/><circle cx="75.9" cy="43.7" r="0.92" fill="#999"/><rect x="83" y="27.6" width="14" height="13.7" fill="#050505"/><path d="M85 31C88 29 92 30 95 29.5C96 32 93 33 94.5 35.5C95.5 38 93 39.5 89 39C87 37.5 89 35.5 87.5 34.5C85.5 34 84 33 85 31Z" fill="#707070"/></svg></div><div class="ct">Design Elements —<br>Galaxies</div></div>
<div class="card tex" style="left:419px;top:462px;height:133px"><div class="th"><svg width="99" height="66" viewBox="0 0 99 66"><rect width="99" height="66" fill="#fff"/><path d="M19.1 23.1L17.8 19.4L17.3 15.3L19.6 11.2L25.1 16.7" fill="none" stroke="#6a6ae0" stroke-width="0.45" opacity="0.8"/><circle cx="19.1" cy="23.1" r="0.75" fill="#3030c8" opacity="0.75"/><circle cx="17.8" cy="19.4" r="0.75" fill="#3030c8" opacity="0.75"/><circle cx="17.3" cy="15.3" r="0.75" fill="#3030c8" opacity="0.75"/><circle cx="19.6" cy="11.2" r="0.75" fill="#3030c8" opacity="0.75"/><circle cx="25.1" cy="16.7" r="0.75" fill="#3030c8" opacity="0.75"/><path d="M42.5 13.5L44.3 15.8L47.1 15.3L48.5 18.1L50.8 16.2" fill="none" stroke="#6a6ae0" stroke-width="0.45" opacity="0.8"/><circle cx="42.5" cy="13.5" r="0.75" fill="#3030c8" opacity="0.75"/><circle cx="44.3" cy="15.8" r="0.75" fill="#3030c8" opacity="0.75"/><circle cx="47.1" cy="15.3" r="0.75" fill="#3030c8" opacity="0.75"/><circle cx="48.5" cy="18.1" r="0.75" fill="#3030c8" opacity="0.75"/><circle cx="50.8" cy="16.2" r="0.75" fill="#3030c8" opacity="0.75"/><path d="M47.1 15.3L48.0 22.2" fill="none" stroke="#6a6ae0" stroke-width="0.45" opacity="0.8"/><circle cx="47.1" cy="15.3" r="0.75" fill="#3030c8" opacity="0.75"/><circle cx="48.0" cy="22.2" r="0.75" fill="#3030c8" opacity="0.75"/><path d="M68.6 8.4L74.6 13.0L76.9 17.6L72.8 21.7L70.0 16.2L68.6 8.4" fill="none" stroke="#6a6ae0" stroke-width="0.45" opacity="0.8"/><circle cx="68.6" cy="8.4" r="0.75" fill="#3030c8" opacity="0.75"/><circle cx="74.6" cy="13.0" r="0.75" fill="#3030c8" opacity="0.75"/><circle cx="76.9" cy="17.6" r="0.75" fill="#3030c8" opacity="0.75"/><circle cx="72.8" cy="21.7" r="0.75" fill="#3030c8" opacity="0.75"/><circle cx="70.0" cy="16.2" r="0.75" fill="#3030c8" opacity="0.75"/><circle cx="68.6" cy="8.4" r="0.75" fill="#3030c8" opacity="0.75"/><path d="M76.9 17.6L80.1 16.7" fill="none" stroke="#6a6ae0" stroke-width="0.45" opacity="0.8"/><circle cx="76.9" cy="17.6" r="0.75" fill="#3030c8" opacity="0.75"/><circle cx="80.1" cy="16.7" r="0.75" fill="#3030c8" opacity="0.75"/><path d="M3.6 44.2L7.7 42.3L10.9 42.6L14.6 43.3L21.0 41.0L21.0 44.2L16.0 45.6L14.6 43.3" fill="none" stroke="#6a6ae0" stroke-width="0.45" opacity="0.8"/><circle cx="3.6" cy="44.2" r="0.75" fill="#3030c8" opacity="0.75"/><circle cx="7.7" cy="42.3" r="0.75" fill="#3030c8" opacity="0.75"/><circle cx="10.9" cy="42.6" r="0.75" fill="#3030c8" opacity="0.75"/><circle cx="14.6" cy="43.3" r="0.75" fill="#3030c8" opacity="0.75"/><circle cx="21.0" cy="41.0" r="0.75" fill="#3030c8" opacity="0.75"/><circle cx="21.0" cy="44.2" r="0.75" fill="#3030c8" opacity="0.75"/><circle cx="16.0" cy="45.6" r="0.75" fill="#3030c8" opacity="0.75"/><circle cx="14.6" cy="43.3" r="0.75" fill="#3030c8" opacity="0.75"/><path d="M27.9 38.2L32.9 38.2" fill="none" stroke="#6a6ae0" stroke-width="0.45" opacity="0.8"/><circle cx="27.9" cy="38.2" r="0.75" fill="#3030c8" opacity="0.75"/><circle cx="32.9" cy="38.2" r="0.75" fill="#3030c8" opacity="0.75"/><path d="M30.1 45.6L34.3 47.4" fill="none" stroke="#6a6ae0" stroke-width="0.45" opacity="0.8"/><circle cx="30.1" cy="45.6" r="0.75" fill="#3030c8" opacity="0.75"/><circle cx="34.3" cy="47.4" r="0.75" fill="#3030c8" opacity="0.75"/><path d="M20.1 52.0L26.0 52.9" fill="none" stroke="#6a6ae0" stroke-width="0.45" opacity="0.8"/><circle cx="20.1" cy="52.0" r="0.75" fill="#3030c8" opacity="0.75"/><circle cx="26.0" cy="52.9" r="0.75" fill="#3030c8" opacity="0.75"/><path d="M50.8 42.3L49.4 44.6L48.5 47.4L48.5 51.0L49.8 54.3L51.7 52.9L49.8 51.0" fill="none" stroke="#6a6ae0" stroke-width="0.45" opacity="0.8"/><circle cx="50.8" cy="42.3" r="0.75" fill="#3030c8" opacity="0.75"/><circle cx="49.4" cy="44.6" r="0.75" fill="#3030c8" opacity="0.75"/><circle cx="48.5" cy="47.4" r="0.75" fill="#3030c8" opacity="0.75"/><circle cx="48.5" cy="51.0" r="0.75" fill="#3030c8" opacity="0.75"/><circle cx="49.8" cy="54.3" r="0.75" fill="#3030c8" opacity="0.75"/><circle cx="51.7" cy="52.9" r="0.75" fill="#3030c8" opacity="0.75"/><circle cx="49.8" cy="51.0" r="0.75" fill="#3030c8" opacity="0.75"/><path d="M71.8 55.6L70.9 45.6L70.9 42.8L73.7 42.8L75.5 45.6L77.8 51.0L80.6 54.3L82.8 56.1L85.6 55.6L90.2 50.1L92.9 43.7L94.8 40.5" fill="none" stroke="#6a6ae0" stroke-width="0.45" opacity="0.8"/><circle cx="71.8" cy="55.6" r="0.75" fill="#3030c8" opacity="0.75"/><circle cx="70.9" cy="45.6" r="0.75" fill="#3030c8" opacity="0.75"/><circle cx="70.9" cy="42.8" r="0.75" fill="#3030c8" opacity="0.75"/><circle cx="73.7" cy="42.8" r="0.75" fill="#3030c8" opacity="0.75"/><circle cx="75.5" cy="45.6" r="0.75" fill="#3030c8" opacity="0.75"/><circle cx="77.8" cy="51.0" r="0.75" fill="#3030c8" opacity="0.75"/><circle cx="80.6" cy="54.3" r="0.75" fill="#3030c8" opacity="0.75"/><circle cx="82.8" cy="56.1" r="0.75" fill="#3030c8" opacity="0.75"/><circle cx="85.6" cy="55.6" r="0.75" fill="#3030c8" opacity="0.75"/><circle cx="90.2" cy="50.1" r="0.75" fill="#3030c8" opacity="0.75"/><circle cx="92.9" cy="43.7" r="0.75" fill="#3030c8" opacity="0.75"/><circle cx="94.8" cy="40.5" r="0.75" fill="#3030c8" opacity="0.75"/><path d="M70.0 58.4L71.8 55.6L72.8 58.9" fill="none" stroke="#6a6ae0" stroke-width="0.45" opacity="0.8"/><circle cx="70.0" cy="58.4" r="0.75" fill="#3030c8" opacity="0.75"/><circle cx="71.8" cy="55.6" r="0.75" fill="#3030c8" opacity="0.75"/><circle cx="72.8" cy="58.9" r="0.75" fill="#3030c8" opacity="0.75"/><rect x="16.1" y="27.3" width="6" height="0.9" fill="#b0b0b0"/><rect x="45" y="27.3" width="6" height="0.9" fill="#b0b0b0"/><rect x="72" y="27.3" width="6" height="0.9" fill="#b0b0b0"/><rect x="14.8" y="63.300000000000004" width="6" height="0.9" fill="#b0b0b0"/><rect x="47.8" y="63.300000000000004" width="6" height="0.9" fill="#b0b0b0"/><rect x="77.6" y="63.300000000000004" width="6" height="0.9" fill="#b0b0b0"/><circle cx="23.4" cy="6.8" r="0.4" fill="#6060e0" opacity="0.30"/><circle cx="15.3" cy="4.4" r="0.4" fill="#6060e0" opacity="0.30"/><circle cx="90.9" cy="52.8" r="0.4" fill="#6060e0" opacity="0.39"/><circle cx="22.0" cy="35.4" r="0.4" fill="#6060e0" opacity="0.27"/><circle cx="17.1" cy="7.0" r="0.4" fill="#6060e0" opacity="0.25"/><circle cx="91.8" cy="54.7" r="0.4" fill="#6060e0" opacity="0.40"/><circle cx="79.2" cy="12.8" r="0.4" fill="#6060e0" opacity="0.28"/><circle cx="62.1" cy="48.3" r="0.4" fill="#6060e0" opacity="0.41"/><circle cx="87.1" cy="5.7" r="0.4" fill="#6060e0" opacity="0.35"/><circle cx="66.5" cy="33.4" r="0.4" fill="#6060e0" opacity="0.24"/><circle cx="46.9" cy="5.9" r="0.4" fill="#6060e0" opacity="0.43"/><circle cx="85.7" cy="36.1" r="0.4" fill="#6060e0" opacity="0.28"/><circle cx="90.0" cy="37.8" r="0.4" fill="#6060e0" opacity="0.42"/><circle cx="84.0" cy="33.6" r="0.4" fill="#6060e0" opacity="0.30"/><circle cx="59.3" cy="28.4" r="0.4" fill="#6060e0" opacity="0.24"/><circle cx="30.2" cy="53.6" r="0.4" fill="#6060e0" opacity="0.21"/><circle cx="4.6" cy="41.3" r="0.4" fill="#6060e0" opacity="0.27"/><circle cx="52.9" cy="31.1" r="0.4" fill="#6060e0" opacity="0.29"/><circle cx="98.7" cy="12.9" r="0.4" fill="#6060e0" opacity="0.30"/><circle cx="20.1" cy="41.8" r="0.4" fill="#6060e0" opacity="0.27"/><circle cx="35.2" cy="49.3" r="0.4" fill="#6060e0" opacity="0.28"/><circle cx="55.3" cy="59.7" r="0.4" fill="#6060e0" opacity="0.23"/><circle cx="6.1" cy="15.1" r="0.4" fill="#6060e0" opacity="0.39"/><circle cx="60.9" cy="15.7" r="0.4" fill="#6060e0" opacity="0.28"/><circle cx="17.6" cy="30.3" r="0.4" fill="#6060e0" opacity="0.21"/><circle cx="69.0" cy="59.1" r="0.4" fill="#6060e0" opacity="0.44"/><circle cx="72.8" cy="63.4" r="0.4" fill="#6060e0" opacity="0.20"/><circle cx="28.6" cy="63.8" r="0.4" fill="#6060e0" opacity="0.39"/><circle cx="40.6" cy="62.3" r="0.4" fill="#6060e0" opacity="0.36"/><circle cx="81.0" cy="19.4" r="0.4" fill="#6060e0" opacity="0.25"/><circle cx="44.0" cy="9.0" r="0.4" fill="#6060e0" opacity="0.30"/><circle cx="95.2" cy="21.9" r="0.4" fill="#6060e0" opacity="0.20"/><circle cx="4.4" cy="11.2" r="0.4" fill="#6060e0" opacity="0.40"/><circle cx="35.9" cy="19.2" r="0.4" fill="#6060e0" opacity="0.22"/><circle cx="97.2" cy="28.0" r="0.4" fill="#6060e0" opacity="0.25"/><circle cx="5.9" cy="3.6" r="0.4" fill="#6060e0" opacity="0.24"/><circle cx="67.0" cy="9.9" r="0.4" fill="#6060e0" opacity="0.21"/><circle cx="48.6" cy="16.4" r="0.4" fill="#6060e0" opacity="0.45"/><circle cx="12.1" cy="34.9" r="0.4" fill="#6060e0" opacity="0.39"/><circle cx="40.5" cy="65.2" r="0.4" fill="#6060e0" opacity="0.32"/></svg></div><div class="ct">Design Elements —<br>Northern Constellations</div></div>
<div class="card tex" style="left:539px;top:462px;height:133px"><div class="th"><svg width="99" height="66" viewBox="0 0 99 66"><rect width="99" height="66" fill="#fff"/><path d="M2.2 13.5L6.3 14.9L7.0 16.0" fill="none" stroke="#6a6ae8" stroke-width="0.45" opacity="0.8"/><circle cx="2.2" cy="13.5" r="0.7" fill="#3434d0" opacity="0.75"/><circle cx="6.3" cy="14.9" r="0.7" fill="#3434d0" opacity="0.75"/><circle cx="7.0" cy="16.0" r="0.7" fill="#3434d0" opacity="0.75"/><path d="M12.7 10.3L13.6 14.9L13.2 18.1" fill="none" stroke="#6a6ae8" stroke-width="0.45" opacity="0.8"/><circle cx="12.7" cy="10.3" r="0.7" fill="#3434d0" opacity="0.75"/><circle cx="13.6" cy="14.9" r="0.7" fill="#3434d0" opacity="0.75"/><circle cx="13.2" cy="18.1" r="0.7" fill="#3434d0" opacity="0.75"/><path d="M13.6 14.9L16.4 15.3L16.8 17.6" fill="none" stroke="#6a6ae8" stroke-width="0.45" opacity="0.8"/><circle cx="13.6" cy="14.9" r="0.7" fill="#3434d0" opacity="0.75"/><circle cx="16.4" cy="15.3" r="0.7" fill="#3434d0" opacity="0.75"/><circle cx="16.8" cy="17.6" r="0.7" fill="#3434d0" opacity="0.75"/><path d="M9.1 10.7L12.7 10.3" fill="none" stroke="#6a6ae8" stroke-width="0.45" opacity="0.8"/><circle cx="9.1" cy="10.7" r="0.7" fill="#3434d0" opacity="0.75"/><circle cx="12.7" cy="10.3" r="0.7" fill="#3434d0" opacity="0.75"/><path d="M21.4 15.3L25.1 14.9L29.2 10.7L31.0 12.1L35.2 11.6L47.1 10.3" fill="none" stroke="#6a6ae8" stroke-width="0.45" opacity="0.8"/><circle cx="21.4" cy="15.3" r="0.7" fill="#3434d0" opacity="0.75"/><circle cx="25.1" cy="14.9" r="0.7" fill="#3434d0" opacity="0.75"/><circle cx="29.2" cy="10.7" r="0.7" fill="#3434d0" opacity="0.75"/><circle cx="31.0" cy="12.1" r="0.7" fill="#3434d0" opacity="0.75"/><circle cx="35.2" cy="11.6" r="0.7" fill="#3434d0" opacity="0.75"/><circle cx="47.1" cy="10.3" r="0.7" fill="#3434d0" opacity="0.75"/><path d="M25.1 14.9L25.1 17.6L32.0 18.5L29.2 19.9L29.2 22.0" fill="none" stroke="#6a6ae8" stroke-width="0.45" opacity="0.8"/><circle cx="25.1" cy="14.9" r="0.7" fill="#3434d0" opacity="0.75"/><circle cx="25.1" cy="17.6" r="0.7" fill="#3434d0" opacity="0.75"/><circle cx="32.0" cy="18.5" r="0.7" fill="#3434d0" opacity="0.75"/><circle cx="29.2" cy="19.9" r="0.7" fill="#3434d0" opacity="0.75"/><circle cx="29.2" cy="22.0" r="0.7" fill="#3434d0" opacity="0.75"/><circle cx="47.1" cy="10.3" r="1.2" fill="#2020b0"/><path d="M50.3 19.4L58.6 19.0" fill="none" stroke="#6a6ae8" stroke-width="0.45" opacity="0.8"/><circle cx="50.3" cy="19.4" r="0.7" fill="#3434d0" opacity="0.75"/><circle cx="58.6" cy="19.0" r="0.7" fill="#3434d0" opacity="0.75"/><path d="M64.1 15.3L67.3 20.4" fill="none" stroke="#6a6ae8" stroke-width="0.45" opacity="0.8"/><circle cx="64.1" cy="15.3" r="0.7" fill="#3434d0" opacity="0.75"/><circle cx="67.3" cy="20.4" r="0.7" fill="#3434d0" opacity="0.75"/><path d="M74.6 15.3L73.2 17.1L76.0 17.1L75.5 19.4L76.4 19.9" fill="none" stroke="#6a6ae8" stroke-width="0.45" opacity="0.8"/><circle cx="74.6" cy="15.3" r="0.7" fill="#3434d0" opacity="0.75"/><circle cx="73.2" cy="17.1" r="0.7" fill="#3434d0" opacity="0.75"/><circle cx="76.0" cy="17.1" r="0.7" fill="#3434d0" opacity="0.75"/><circle cx="75.5" cy="19.4" r="0.7" fill="#3434d0" opacity="0.75"/><circle cx="76.4" cy="19.9" r="0.7" fill="#3434d0" opacity="0.75"/><path d="M92.9 8.9L90.2 11.2L84.7 16.2L84.2 19.4" fill="none" stroke="#6a6ae8" stroke-width="0.45" opacity="0.8"/><circle cx="92.9" cy="8.9" r="0.7" fill="#3434d0" opacity="0.75"/><circle cx="90.2" cy="11.2" r="0.7" fill="#3434d0" opacity="0.75"/><circle cx="84.7" cy="16.2" r="0.7" fill="#3434d0" opacity="0.75"/><circle cx="84.2" cy="19.4" r="0.7" fill="#3434d0" opacity="0.75"/><path d="M3.6 34.1L14.1 39.1" fill="none" stroke="#6a6ae8" stroke-width="0.45" opacity="0.8"/><circle cx="3.6" cy="34.1" r="0.7" fill="#3434d0" opacity="0.75"/><circle cx="14.1" cy="39.1" r="0.7" fill="#3434d0" opacity="0.75"/><path d="M24.2 29.1L22.4 34.1L27.4 40.5" fill="none" stroke="#6a6ae8" stroke-width="0.45" opacity="0.8"/><circle cx="24.2" cy="29.1" r="0.7" fill="#3434d0" opacity="0.75"/><circle cx="22.4" cy="34.1" r="0.7" fill="#3434d0" opacity="0.75"/><circle cx="27.4" cy="40.5" r="0.7" fill="#3434d0" opacity="0.75"/><path d="M22.4 34.1L18.7 38.7" fill="none" stroke="#6a6ae8" stroke-width="0.45" opacity="0.8"/><circle cx="22.4" cy="34.1" r="0.7" fill="#3434d0" opacity="0.75"/><circle cx="18.7" cy="38.7" r="0.7" fill="#3434d0" opacity="0.75"/><path d="M32.4 37.3L37.0 35.9L42.0 33.2" fill="none" stroke="#6a6ae8" stroke-width="0.45" opacity="0.8"/><circle cx="32.4" cy="37.3" r="0.7" fill="#3434d0" opacity="0.75"/><circle cx="37.0" cy="35.9" r="0.7" fill="#3434d0" opacity="0.75"/><circle cx="42.0" cy="33.2" r="0.7" fill="#3434d0" opacity="0.75"/><path d="M37.0 35.9L38.0 39.6" fill="none" stroke="#6a6ae8" stroke-width="0.45" opacity="0.8"/><circle cx="37.0" cy="35.9" r="0.7" fill="#3434d0" opacity="0.75"/><circle cx="38.0" cy="39.6" r="0.7" fill="#3434d0" opacity="0.75"/><path d="M46.2 39.6L48.9 38.2" fill="none" stroke="#6a6ae8" stroke-width="0.45" opacity="0.8"/><circle cx="46.2" cy="39.6" r="0.7" fill="#3434d0" opacity="0.75"/><circle cx="48.9" cy="38.2" r="0.7" fill="#3434d0" opacity="0.75"/><path d="M54.4 37.3L57.2 37.3L60.0 36.4" fill="none" stroke="#6a6ae8" stroke-width="0.45" opacity="0.8"/><circle cx="54.4" cy="37.3" r="0.7" fill="#3434d0" opacity="0.75"/><circle cx="57.2" cy="37.3" r="0.7" fill="#3434d0" opacity="0.75"/><circle cx="60.0" cy="36.4" r="0.7" fill="#3434d0" opacity="0.75"/><path d="M57.2 37.3L56.3 39.6" fill="none" stroke="#6a6ae8" stroke-width="0.45" opacity="0.8"/><circle cx="57.2" cy="37.3" r="0.7" fill="#3434d0" opacity="0.75"/><circle cx="56.3" cy="39.6" r="0.7" fill="#3434d0" opacity="0.75"/><path d="M66.8 34.1L67.7 40.1" fill="none" stroke="#6a6ae8" stroke-width="0.45" opacity="0.8"/><circle cx="66.8" cy="34.1" r="0.7" fill="#3434d0" opacity="0.75"/><circle cx="67.7" cy="40.1" r="0.7" fill="#3434d0" opacity="0.75"/><path d="M74.6 30.9L73.2 33.2L77.8 40.5" fill="none" stroke="#6a6ae8" stroke-width="0.45" opacity="0.8"/><circle cx="74.6" cy="30.9" r="0.7" fill="#3434d0" opacity="0.75"/><circle cx="73.2" cy="33.2" r="0.7" fill="#3434d0" opacity="0.75"/><circle cx="77.8" cy="40.5" r="0.7" fill="#3434d0" opacity="0.75"/><path d="M84.7 29.5L84.2 36.4L81.0 36.4" fill="none" stroke="#6a6ae8" stroke-width="0.45" opacity="0.8"/><circle cx="84.7" cy="29.5" r="0.7" fill="#3434d0" opacity="0.75"/><circle cx="84.2" cy="36.4" r="0.7" fill="#3434d0" opacity="0.75"/><circle cx="81.0" cy="36.4" r="0.7" fill="#3434d0" opacity="0.75"/><path d="M84.2 36.4L87.4 40.5L92.0 40.1L96.1 37.3L94.8 34.6L87.0 34.6L84.2 36.4" fill="none" stroke="#6a6ae8" stroke-width="0.45" opacity="0.8"/><circle cx="84.2" cy="36.4" r="0.7" fill="#3434d0" opacity="0.75"/><circle cx="87.4" cy="40.5" r="0.7" fill="#3434d0" opacity="0.75"/><circle cx="92.0" cy="40.1" r="0.7" fill="#3434d0" opacity="0.75"/><circle cx="96.1" cy="37.3" r="0.7" fill="#3434d0" opacity="0.75"/><circle cx="94.8" cy="34.6" r="0.7" fill="#3434d0" opacity="0.75"/><circle cx="87.0" cy="34.6" r="0.7" fill="#3434d0" opacity="0.75"/><circle cx="84.2" cy="36.4" r="0.7" fill="#3434d0" opacity="0.75"/><path d="M5.8 47.9L8.6 50.1L13.6 47.9L15.0 50.1" fill="none" stroke="#6a6ae8" stroke-width="0.45" opacity="0.8"/><circle cx="5.8" cy="47.9" r="0.7" fill="#3434d0" opacity="0.75"/><circle cx="8.6" cy="50.1" r="0.7" fill="#3434d0" opacity="0.75"/><circle cx="13.6" cy="47.9" r="0.7" fill="#3434d0" opacity="0.75"/><circle cx="15.0" cy="50.1" r="0.7" fill="#3434d0" opacity="0.75"/><path d="M8.6 50.1L5.8 51.0" fill="none" stroke="#6a6ae8" stroke-width="0.45" opacity="0.8"/><circle cx="8.6" cy="50.1" r="0.7" fill="#3434d0" opacity="0.75"/><circle cx="5.8" cy="51.0" r="0.7" fill="#3434d0" opacity="0.75"/><path d="M8.6 50.1L8.6 55.6L10.9 57.0" fill="none" stroke="#6a6ae8" stroke-width="0.45" opacity="0.8"/><circle cx="8.6" cy="50.1" r="0.7" fill="#3434d0" opacity="0.75"/><circle cx="8.6" cy="55.6" r="0.7" fill="#3434d0" opacity="0.75"/><circle cx="10.9" cy="57.0" r="0.7" fill="#3434d0" opacity="0.75"/><path d="M23.7 56.6L28.8 48.3" fill="none" stroke="#6a6ae8" stroke-width="0.45" opacity="0.8"/><circle cx="23.7" cy="56.6" r="0.7" fill="#3434d0" opacity="0.75"/><circle cx="28.8" cy="48.3" r="0.7" fill="#3434d0" opacity="0.75"/><path d="M35.2 51.5L37.9 55.2L39.5 54.0" fill="none" stroke="#6a6ae8" stroke-width="0.45" opacity="0.8"/><circle cx="35.2" cy="51.5" r="0.7" fill="#3434d0" opacity="0.75"/><circle cx="37.9" cy="55.2" r="0.7" fill="#3434d0" opacity="0.75"/><circle cx="39.5" cy="54.0" r="0.7" fill="#3434d0" opacity="0.75"/><path d="M43.4 56.1L49.8 56.1" fill="none" stroke="#6a6ae8" stroke-width="0.45" opacity="0.8"/><circle cx="43.4" cy="56.1" r="0.7" fill="#3434d0" opacity="0.75"/><circle cx="49.8" cy="56.1" r="0.7" fill="#3434d0" opacity="0.75"/><path d="M54.0 52.0L55.5 53.0" fill="none" stroke="#6a6ae8" stroke-width="0.45" opacity="0.8"/><circle cx="54.0" cy="52.0" r="0.7" fill="#3434d0" opacity="0.75"/><circle cx="55.5" cy="53.0" r="0.7" fill="#3434d0" opacity="0.75"/><path d="M62.2 56.1L65.0 52.0L67.7 55.6L62.2 56.1" fill="none" stroke="#6a6ae8" stroke-width="0.45" opacity="0.8"/><circle cx="62.2" cy="56.1" r="0.7" fill="#3434d0" opacity="0.75"/><circle cx="65.0" cy="52.0" r="0.7" fill="#3434d0" opacity="0.75"/><circle cx="67.7" cy="55.6" r="0.7" fill="#3434d0" opacity="0.75"/><circle cx="62.2" cy="56.1" r="0.7" fill="#3434d0" opacity="0.75"/><path d="M76.0 53.8L81.5 50.6L86.0 53.4L84.2 56.1" fill="none" stroke="#6a6ae8" stroke-width="0.45" opacity="0.8"/><circle cx="76.0" cy="53.8" r="0.7" fill="#3434d0" opacity="0.75"/><circle cx="81.5" cy="50.6" r="0.7" fill="#3434d0" opacity="0.75"/><circle cx="86.0" cy="53.4" r="0.7" fill="#3434d0" opacity="0.75"/><circle cx="84.2" cy="56.1" r="0.7" fill="#3434d0" opacity="0.75"/><path d="M89.3 53.4L93.4 52.9L96.1 55.6" fill="none" stroke="#6a6ae8" stroke-width="0.45" opacity="0.8"/><circle cx="89.3" cy="53.4" r="0.7" fill="#3434d0" opacity="0.75"/><circle cx="93.4" cy="52.9" r="0.7" fill="#3434d0" opacity="0.75"/><circle cx="96.1" cy="55.6" r="0.7" fill="#3434d0" opacity="0.75"/><rect x="2.4000000000000004" y="22.700000000000003" width="5" height="0.8" fill="#b0b0b0"/><rect x="12.5" y="22.700000000000003" width="5" height="0.8" fill="#b0b0b0"/><rect x="34.1" y="22.700000000000003" width="5" height="0.8" fill="#b0b0b0"/><rect x="51.9" y="22.700000000000003" width="5" height="0.8" fill="#b0b0b0"/><rect x="62.900000000000006" y="22.700000000000003" width="5" height="0.8" fill="#b0b0b0"/><rect x="72.6" y="22.700000000000003" width="5" height="0.8" fill="#b0b0b0"/><rect x="85.4" y="22.700000000000003" width="5" height="0.8" fill="#b0b0b0"/><rect x="6.1" y="41.95" width="5" height="0.8" fill="#b0b0b0"/><rect x="20.8" y="41.95" width="5" height="0.8" fill="#b0b0b0"/><rect x="34.5" y="41.95" width="5" height="0.8" fill="#b0b0b0"/><rect x="45.0" y="41.95" width="5" height="0.8" fill="#b0b0b0"/><rect x="55.1" y="41.95" width="5" height="0.8" fill="#b0b0b0"/><rect x="64.8" y="41.95" width="5" height="0.8" fill="#b0b0b0"/><rect x="72.6" y="41.95" width="5" height="0.8" fill="#b0b0b0"/><rect x="85.8" y="41.95" width="5" height="0.8" fill="#b0b0b0"/><rect x="7.0" y="58.7" width="5" height="0.8" fill="#b0b0b0"/><rect x="24.0" y="58.7" width="5" height="0.8" fill="#b0b0b0"/><rect x="35.0" y="58.7" width="5" height="0.8" fill="#b0b0b0"/><rect x="46.5" y="58.7" width="5" height="0.8" fill="#b0b0b0"/><rect x="62.5" y="58.7" width="5" height="0.8" fill="#b0b0b0"/><rect x="78.1" y="58.7" width="5" height="0.8" fill="#b0b0b0"/><rect x="90.4" y="58.7" width="5" height="0.8" fill="#b0b0b0"/><circle cx="91.6" cy="62.6" r="0.4" fill="#6060e0" opacity="0.38"/><circle cx="8.3" cy="39.1" r="0.4" fill="#6060e0" opacity="0.28"/><circle cx="52.5" cy="8.6" r="0.4" fill="#6060e0" opacity="0.24"/><circle cx="44.0" cy="14.6" r="0.4" fill="#6060e0" opacity="0.29"/><circle cx="2.5" cy="5.7" r="0.4" fill="#6060e0" opacity="0.34"/><circle cx="41.7" cy="33.8" r="0.4" fill="#6060e0" opacity="0.35"/><circle cx="35.5" cy="3.8" r="0.4" fill="#6060e0" opacity="0.36"/><circle cx="58.3" cy="43.4" r="0.4" fill="#6060e0" opacity="0.32"/><circle cx="96.1" cy="23.9" r="0.4" fill="#6060e0" opacity="0.35"/><circle cx="36.5" cy="37.8" r="0.4" fill="#6060e0" opacity="0.33"/><circle cx="31.1" cy="5.7" r="0.4" fill="#6060e0" opacity="0.29"/><circle cx="71.1" cy="39.0" r="0.4" fill="#6060e0" opacity="0.29"/><circle cx="63.6" cy="12.0" r="0.4" fill="#6060e0" opacity="0.24"/><circle cx="32.0" cy="53.8" r="0.4" fill="#6060e0" opacity="0.24"/><circle cx="11.3" cy="6.5" r="0.4" fill="#6060e0" opacity="0.21"/><circle cx="27.3" cy="37.8" r="0.4" fill="#6060e0" opacity="0.36"/><circle cx="32.7" cy="24.4" r="0.4" fill="#6060e0" opacity="0.26"/><circle cx="30.2" cy="51.3" r="0.4" fill="#6060e0" opacity="0.31"/><circle cx="25.6" cy="7.1" r="0.4" fill="#6060e0" opacity="0.36"/><circle cx="70.0" cy="54.7" r="0.4" fill="#6060e0" opacity="0.25"/><circle cx="54.0" cy="60.6" r="0.4" fill="#6060e0" opacity="0.32"/><circle cx="93.6" cy="11.0" r="0.4" fill="#6060e0" opacity="0.40"/><circle cx="5.5" cy="27.5" r="0.4" fill="#6060e0" opacity="0.20"/><circle cx="80.1" cy="45.4" r="0.4" fill="#6060e0" opacity="0.39"/><circle cx="79.7" cy="62.6" r="0.4" fill="#6060e0" opacity="0.31"/><circle cx="97.8" cy="49.4" r="0.4" fill="#6060e0" opacity="0.27"/><circle cx="96.5" cy="24.9" r="0.4" fill="#6060e0" opacity="0.24"/><circle cx="7.5" cy="30.8" r="0.4" fill="#6060e0" opacity="0.24"/><circle cx="92.4" cy="62.7" r="0.4" fill="#6060e0" opacity="0.24"/><circle cx="10.2" cy="34.9" r="0.4" fill="#6060e0" opacity="0.23"/></svg></div><div class="ct">Design Elements —<br>Southern Constellations</div></div>
<div class="card tex" style="left:659px;top:462px;height:133px"><div class="th"><svg width="99" height="66" viewBox="0 0 99 66"><rect width="99" height="66" fill="#020202"/><defs><radialGradient id="sp1" cx="0.4" cy="0.35"><stop offset="0" stop-color="#ffd0a0"/><stop offset="1" stop-color="#e05010"/></radialGradient><radialGradient id="sp2" cx="0.4" cy="0.4"><stop offset="0" stop-color="#f0dcc0"/><stop offset="1" stop-color="#a08060"/></radialGradient></defs><circle cx="-2" cy="9.3" r="7" fill="#f08020"/><circle cx="13.5" cy="9.3" r="5.8" fill="url(#sp1)"/><circle cx="23.5" cy="9.3" r="1.5" fill="#e0c090"/><circle cx="28.8" cy="9.3" r="2.4" fill="#d88020"/><circle cx="35.8" cy="9.3" r="2.6" fill="#7080a0"/><circle cx="41.5" cy="9.3" r="1.1" fill="#ccc"/><circle cx="46.5" cy="9.3" r="1.6" fill="#d09070"/><circle cx="55.7" cy="9.3" r="4.3" fill="url(#sp2)"/><circle cx="69" cy="9.3" r="3.3" fill="#c8b090"/><circle cx="82.5" cy="9.3" r="2.9" fill="#c8f0f0"/><circle cx="89.6" cy="9.3" r="2.9" fill="#5080e0"/><circle cx="95.5" cy="9.3" r="1" fill="#c09070"/><path d="M63 3.5L76 15" stroke="#b09070" stroke-width="0.9"/><rect x="1.5" y="16.3" width="3" height="0.8" fill="#aaa"/><rect x="12.0" y="16.3" width="3" height="0.8" fill="#aaa"/><rect x="22.0" y="16.3" width="3" height="0.8" fill="#aaa"/><rect x="27.3" y="16.3" width="3" height="0.8" fill="#aaa"/><rect x="34.3" y="16.3" width="3" height="0.8" fill="#aaa"/><rect x="40.0" y="16.3" width="3" height="0.8" fill="#aaa"/><rect x="45.0" y="16.3" width="3" height="0.8" fill="#aaa"/><rect x="54.2" y="16.3" width="3" height="0.8" fill="#aaa"/><rect x="67.5" y="16.3" width="3" height="0.8" fill="#aaa"/><rect x="81.0" y="16.3" width="3" height="0.8" fill="#aaa"/><rect x="88.1" y="16.3" width="3" height="0.8" fill="#aaa"/><rect x="94.0" y="16.3" width="3" height="0.8" fill="#aaa"/><path d="M22 22L49 42" stroke="#b09070" stroke-width="1.6"/><circle cx="22.5" cy="32" r="7.3" fill="url(#sp2)"/><path d="M15.5 29H29.5M15.3 33H29.7" stroke="#a07850" stroke-width="0.8"/><circle cx="33.5" cy="32" r="6.5" fill="#d0b898"/><circle cx="40" cy="30" r="2.8" fill="#c8f0f0"/><circle cx="45" cy="30" r="2.8" fill="#5088e0"/><rect x="10" y="29.8" width="3" height="1.5" fill="#d08030"/><rect x="26" y="40.8" width="5" height="0.8" fill="#aaa"/><circle cx="76.3" cy="45.5" r="21" fill="#142030" opacity="0.25"/><circle cx="76.3" cy="45.5" r="21" fill="none" stroke="#2a3a50" stroke-width="0.35"/><circle cx="76.3" cy="45.5" r="15.5" fill="#142030" opacity="0.3"/><circle cx="76.3" cy="45.5" r="15.5" fill="none" stroke="#4a6080" stroke-width="0.35"/><circle cx="76.3" cy="45.5" r="10.5" fill="#142030" opacity="0.35"/><circle cx="76.3" cy="45.5" r="10.5" fill="none" stroke="#4a6080" stroke-width="0.35"/><circle cx="76.3" cy="45.5" r="5.5" fill="#142030" opacity="0.5"/><circle cx="76.3" cy="45.5" r="5.5" fill="none" stroke="#6a88a8" stroke-width="0.35"/><circle cx="74" cy="44" r="0.7" fill="#ccc"/><circle cx="78" cy="47" r="0.7" fill="#c08040"/><circle cx="76" cy="42" r="0.5" fill="#ddd"/><rect x="84" y="50" width="3" height="0.8" fill="#bbb"/><rect x="88" y="40" width="3" height="0.8" fill="#bbb"/><rect x="90" y="31" width="2" height="0.8" fill="#bbb"/><circle cx="8.5" cy="45.5" r="1.5" fill="#e04040"/><rect x="6" y="48.5" width="5" height="0.7" fill="#aaa"/><rect x="16" y="48.5" width="5" height="0.7" fill="#aaa"/><defs><radialGradient id="rs" cx="0.4" cy="0.35"><stop offset="0" stop-color="#ff8888"/><stop offset="1" stop-color="#e02828"/></radialGradient><radialGradient id="ys" cx="0.4" cy="0.35"><stop offset="0" stop-color="#ffe060"/><stop offset="1" stop-color="#f09000"/></radialGradient></defs><circle cx="8.5" cy="57" r="5" fill="url(#rs)"/><circle cx="21.8" cy="57.2" r="4.5" fill="url(#ys)"/><circle cx="33.8" cy="57.3" r="3.8" fill="#a8e8f8"/><circle cx="48" cy="56.8" r="3.5" fill="none" stroke="#ddd" stroke-width="0.5"/><rect x="40" y="49" width="16" height="15" fill="none" stroke="#333" stroke-dasharray="0.4 1" stroke-width="0.5"/><rect x="6.5" y="64" width="4" height="0.7" fill="#aaa"/><rect x="19.8" y="64" width="4" height="0.7" fill="#aaa"/><rect x="31.799999999999997" y="64" width="4" height="0.7" fill="#aaa"/><rect x="46" y="64" width="4" height="0.7" fill="#aaa"/><rect x="74" y="64" width="4" height="0.7" fill="#aaa"/></svg></div><div class="ct">Design Elements — Stars<br>and Planets</div></div>
<div class="card tex" style="left:779px;top:462px;height:133px"><div class="th"><svg width="99" height="66" viewBox="0 0 99 66"><rect width="99" height="66" fill="#fff"/><path d="M15.0 6.6L15.0 11.6L13.6 14.4" fill="none" stroke="#7070e8" stroke-width="0.45" opacity="0.8"/><circle cx="15.0" cy="6.6" r="0.65" fill="#3838d0" opacity="0.75"/><circle cx="15.0" cy="11.6" r="0.65" fill="#3838d0" opacity="0.75"/><circle cx="13.6" cy="14.4" r="0.65" fill="#3838d0" opacity="0.75"/><path d="M15.0 11.6L18.7 15.3" fill="none" stroke="#7070e8" stroke-width="0.45" opacity="0.8"/><circle cx="15.0" cy="11.6" r="0.65" fill="#3838d0" opacity="0.75"/><circle cx="18.7" cy="15.3" r="0.65" fill="#3838d0" opacity="0.75"/><path d="M25.1 7.5L29.2 5.2L35.2 5.2L37.9 2.5L36.1 7.1L37.0 9.4L32.4 8.9L25.1 7.5" fill="none" stroke="#7070e8" stroke-width="0.45" opacity="0.8"/><circle cx="25.1" cy="7.5" r="0.65" fill="#3838d0" opacity="0.75"/><circle cx="29.2" cy="5.2" r="0.65" fill="#3838d0" opacity="0.75"/><circle cx="35.2" cy="5.2" r="0.65" fill="#3838d0" opacity="0.75"/><circle cx="37.9" cy="2.5" r="0.65" fill="#3838d0" opacity="0.75"/><circle cx="36.1" cy="7.1" r="0.65" fill="#3838d0" opacity="0.75"/><circle cx="37.0" cy="9.4" r="0.65" fill="#3838d0" opacity="0.75"/><circle cx="32.4" cy="8.9" r="0.65" fill="#3838d0" opacity="0.75"/><circle cx="25.1" cy="7.5" r="0.65" fill="#3838d0" opacity="0.75"/><path d="M27.8 13.5L26.0 16.2" fill="none" stroke="#7070e8" stroke-width="0.45" opacity="0.8"/><circle cx="27.8" cy="13.5" r="0.65" fill="#3838d0" opacity="0.75"/><circle cx="26.0" cy="16.2" r="0.65" fill="#3838d0" opacity="0.75"/><path d="M60.0 2.5L56.3 8.0L57.2 13.0L62.7 8.4L60.0 2.5" fill="none" stroke="#7070e8" stroke-width="0.45" opacity="0.8"/><circle cx="60.0" cy="2.5" r="0.65" fill="#3838d0" opacity="0.75"/><circle cx="56.3" cy="8.0" r="0.65" fill="#3838d0" opacity="0.75"/><circle cx="57.2" cy="13.0" r="0.65" fill="#3838d0" opacity="0.75"/><circle cx="62.7" cy="8.4" r="0.65" fill="#3838d0" opacity="0.75"/><circle cx="60.0" cy="2.5" r="0.65" fill="#3838d0" opacity="0.75"/><path d="M62.7 8.4L68.6 7.0" fill="none" stroke="#7070e8" stroke-width="0.45" opacity="0.8"/><circle cx="62.7" cy="8.4" r="0.65" fill="#3838d0" opacity="0.75"/><circle cx="68.6" cy="7.0" r="0.65" fill="#3838d0" opacity="0.75"/><path d="M75.5 8.9L80.1 5.7L83.3 8.9L80.1 10.7L75.5 8.9" fill="none" stroke="#7070e8" stroke-width="0.45" opacity="0.8"/><circle cx="75.5" cy="8.9" r="0.65" fill="#3838d0" opacity="0.75"/><circle cx="80.1" cy="5.7" r="0.65" fill="#3838d0" opacity="0.75"/><circle cx="83.3" cy="8.9" r="0.65" fill="#3838d0" opacity="0.75"/><circle cx="80.1" cy="10.7" r="0.65" fill="#3838d0" opacity="0.75"/><circle cx="75.5" cy="8.9" r="0.65" fill="#3838d0" opacity="0.75"/><path d="M77.8 14.9L81.5 13.5" fill="none" stroke="#7070e8" stroke-width="0.45" opacity="0.8"/><circle cx="77.8" cy="14.9" r="0.65" fill="#3838d0" opacity="0.75"/><circle cx="81.5" cy="13.5" r="0.65" fill="#3838d0" opacity="0.75"/><path d="M13.2 32.7L18.7 30.4L21.4 26.8L23.7 24.5L24.0 28.0" fill="none" stroke="#7070e8" stroke-width="0.45" opacity="0.8"/><circle cx="13.2" cy="32.7" r="0.65" fill="#3838d0" opacity="0.75"/><circle cx="18.7" cy="30.4" r="0.65" fill="#3838d0" opacity="0.75"/><circle cx="21.4" cy="26.8" r="0.65" fill="#3838d0" opacity="0.75"/><circle cx="23.7" cy="24.5" r="0.65" fill="#3838d0" opacity="0.75"/><circle cx="24.0" cy="28.0" r="0.65" fill="#3838d0" opacity="0.75"/><path d="M14.1 34.1L17.3 34.6L18.7 30.4" fill="none" stroke="#7070e8" stroke-width="0.45" opacity="0.8"/><circle cx="14.1" cy="34.1" r="0.65" fill="#3838d0" opacity="0.75"/><circle cx="17.3" cy="34.6" r="0.65" fill="#3838d0" opacity="0.75"/><circle cx="18.7" cy="30.4" r="0.65" fill="#3838d0" opacity="0.75"/><path d="M35.2 25.4L37.0 28.1L38.8 27.2L39.8 32.3" fill="none" stroke="#7070e8" stroke-width="0.45" opacity="0.8"/><circle cx="35.2" cy="25.4" r="0.65" fill="#3838d0" opacity="0.75"/><circle cx="37.0" cy="28.1" r="0.65" fill="#3838d0" opacity="0.75"/><circle cx="38.8" cy="27.2" r="0.65" fill="#3838d0" opacity="0.75"/><circle cx="39.8" cy="32.3" r="0.65" fill="#3838d0" opacity="0.75"/><path d="M37.0 28.1L34.3 36.4" fill="none" stroke="#7070e8" stroke-width="0.45" opacity="0.8"/><circle cx="37.0" cy="28.1" r="0.65" fill="#3838d0" opacity="0.75"/><circle cx="34.3" cy="36.4" r="0.65" fill="#3838d0" opacity="0.75"/><path d="M38.8 27.2L42.0 29.0" fill="none" stroke="#7070e8" stroke-width="0.45" opacity="0.8"/><circle cx="38.8" cy="27.2" r="0.65" fill="#3838d0" opacity="0.75"/><circle cx="42.0" cy="29.0" r="0.65" fill="#3838d0" opacity="0.75"/><path d="M48.5 30.0L54.4 35.5L59.0 28.6L48.5 30.0" fill="none" stroke="#7070e8" stroke-width="0.45" opacity="0.8"/><circle cx="48.5" cy="30.0" r="0.65" fill="#3838d0" opacity="0.75"/><circle cx="54.4" cy="35.5" r="0.65" fill="#3838d0" opacity="0.75"/><circle cx="59.0" cy="28.6" r="0.65" fill="#3838d0" opacity="0.75"/><circle cx="48.5" cy="30.0" r="0.65" fill="#3838d0" opacity="0.75"/><path d="M72.8 24.5L79.2 27.2" fill="none" stroke="#7070e8" stroke-width="0.45" opacity="0.8"/><circle cx="72.8" cy="24.5" r="0.65" fill="#3838d0" opacity="0.75"/><circle cx="79.2" cy="27.2" r="0.65" fill="#3838d0" opacity="0.75"/><path d="M66.0 33.0L70.0 34.0L71.0 37.0" fill="none" stroke="#7070e8" stroke-width="0.45" opacity="0.8"/><circle cx="66.0" cy="33.0" r="0.65" fill="#3838d0" opacity="0.75"/><circle cx="70.0" cy="34.0" r="0.65" fill="#3838d0" opacity="0.75"/><circle cx="71.0" cy="37.0" r="0.65" fill="#3838d0" opacity="0.75"/><path d="M18.2 40.1L15.9 46.5L12.3 52.4L27.9 50.6L31.5 52.0L29.0 50.0" fill="none" stroke="#7070e8" stroke-width="0.45" opacity="0.8"/><circle cx="18.2" cy="40.1" r="0.65" fill="#3838d0" opacity="0.75"/><circle cx="15.9" cy="46.5" r="0.65" fill="#3838d0" opacity="0.75"/><circle cx="12.3" cy="52.4" r="0.65" fill="#3838d0" opacity="0.75"/><circle cx="27.9" cy="50.6" r="0.65" fill="#3838d0" opacity="0.75"/><circle cx="31.5" cy="52.0" r="0.65" fill="#3838d0" opacity="0.75"/><circle cx="29.0" cy="50.0" r="0.65" fill="#3838d0" opacity="0.75"/><path d="M38.8 52.0L40.7 50.1L44.3 50.6L47.1 52.4" fill="none" stroke="#7070e8" stroke-width="0.45" opacity="0.8"/><circle cx="38.8" cy="52.0" r="0.65" fill="#3838d0" opacity="0.75"/><circle cx="40.7" cy="50.1" r="0.65" fill="#3838d0" opacity="0.75"/><circle cx="44.3" cy="50.6" r="0.65" fill="#3838d0" opacity="0.75"/><circle cx="47.1" cy="52.4" r="0.65" fill="#3838d0" opacity="0.75"/><path d="M54.4 42.3L60.8 47.9L65.4 44.2" fill="none" stroke="#7070e8" stroke-width="0.45" opacity="0.8"/><circle cx="54.4" cy="42.3" r="0.65" fill="#3838d0" opacity="0.75"/><circle cx="60.8" cy="47.9" r="0.65" fill="#3838d0" opacity="0.75"/><circle cx="65.4" cy="44.2" r="0.65" fill="#3838d0" opacity="0.75"/><path d="M60.8 47.9L67.3 51.0" fill="none" stroke="#7070e8" stroke-width="0.45" opacity="0.8"/><circle cx="60.8" cy="47.9" r="0.65" fill="#3838d0" opacity="0.75"/><circle cx="67.3" cy="51.0" r="0.65" fill="#3838d0" opacity="0.75"/><path d="M76.0 43.3L75.1 45.1L81.9 50.6L83.8 47.9L76.0 43.3" fill="none" stroke="#7070e8" stroke-width="0.45" opacity="0.8"/><circle cx="76.0" cy="43.3" r="0.65" fill="#3838d0" opacity="0.75"/><circle cx="75.1" cy="45.1" r="0.65" fill="#3838d0" opacity="0.75"/><circle cx="81.9" cy="50.6" r="0.65" fill="#3838d0" opacity="0.75"/><circle cx="83.8" cy="47.9" r="0.65" fill="#3838d0" opacity="0.75"/><circle cx="76.0" cy="43.3" r="0.65" fill="#3838d0" opacity="0.75"/><circle cx="51.7" cy="53.2" r="0.4" fill="#6060e0" opacity="0.44"/><circle cx="28.7" cy="50.6" r="0.4" fill="#6060e0" opacity="0.38"/><circle cx="65.5" cy="7.3" r="0.4" fill="#6060e0" opacity="0.21"/><circle cx="38.0" cy="49.3" r="0.4" fill="#6060e0" opacity="0.26"/><circle cx="49.7" cy="21.0" r="0.4" fill="#6060e0" opacity="0.41"/><circle cx="93.6" cy="26.5" r="0.4" fill="#6060e0" opacity="0.45"/><circle cx="6.2" cy="53.6" r="0.4" fill="#6060e0" opacity="0.42"/><circle cx="14.9" cy="46.6" r="0.4" fill="#6060e0" opacity="0.34"/><circle cx="94.6" cy="13.9" r="0.4" fill="#6060e0" opacity="0.33"/><circle cx="87.4" cy="42.2" r="0.4" fill="#6060e0" opacity="0.28"/><circle cx="8.1" cy="62.0" r="0.4" fill="#6060e0" opacity="0.32"/><circle cx="98.6" cy="9.3" r="0.4" fill="#6060e0" opacity="0.40"/><circle cx="80.5" cy="60.7" r="0.4" fill="#6060e0" opacity="0.20"/><circle cx="36.8" cy="3.4" r="0.4" fill="#6060e0" opacity="0.39"/><circle cx="35.1" cy="63.3" r="0.4" fill="#6060e0" opacity="0.29"/><circle cx="76.7" cy="57.3" r="0.4" fill="#6060e0" opacity="0.26"/><circle cx="55.1" cy="63.2" r="0.4" fill="#6060e0" opacity="0.33"/><circle cx="35.6" cy="17.6" r="0.4" fill="#6060e0" opacity="0.40"/><circle cx="19.1" cy="39.9" r="0.4" fill="#6060e0" opacity="0.34"/><circle cx="54.8" cy="8.5" r="0.4" fill="#6060e0" opacity="0.36"/><circle cx="90.7" cy="21.0" r="0.4" fill="#6060e0" opacity="0.28"/><circle cx="90.0" cy="38.2" r="0.4" fill="#6060e0" opacity="0.27"/><circle cx="1.0" cy="49.7" r="0.4" fill="#6060e0" opacity="0.29"/><circle cx="46.2" cy="18.0" r="0.4" fill="#6060e0" opacity="0.36"/><circle cx="72.2" cy="20.4" r="0.4" fill="#6060e0" opacity="0.22"/><circle cx="97.7" cy="60.1" r="0.4" fill="#6060e0" opacity="0.21"/><circle cx="55.9" cy="45.3" r="0.4" fill="#6060e0" opacity="0.30"/><circle cx="72.4" cy="63.3" r="0.4" fill="#6060e0" opacity="0.35"/><circle cx="38.8" cy="12.9" r="0.4" fill="#6060e0" opacity="0.26"/><circle cx="14.9" cy="7.3" r="0.4" fill="#6060e0" opacity="0.25"/><circle cx="83.4" cy="35.4" r="0.4" fill="#6060e0" opacity="0.40"/><circle cx="91.1" cy="53.5" r="0.4" fill="#6060e0" opacity="0.21"/><circle cx="91.7" cy="6.1" r="0.4" fill="#6060e0" opacity="0.39"/><circle cx="83.1" cy="43.4" r="0.4" fill="#6060e0" opacity="0.30"/><circle cx="7.4" cy="5.6" r="0.4" fill="#6060e0" opacity="0.36"/><circle cx="23.9" cy="35.1" r="0.4" fill="#6060e0" opacity="0.27"/><circle cx="16.2" cy="19.5" r="0.4" fill="#6060e0" opacity="0.38"/><circle cx="48.2" cy="25.9" r="0.4" fill="#6060e0" opacity="0.32"/><circle cx="54.8" cy="34.0" r="0.4" fill="#6060e0" opacity="0.31"/><circle cx="95.8" cy="49.6" r="0.4" fill="#6060e0" opacity="0.26"/><circle cx="31.5" cy="12.5" r="0.4" fill="#6060e0" opacity="0.29"/><circle cx="2.8" cy="49.1" r="0.4" fill="#6060e0" opacity="0.34"/><circle cx="41.8" cy="59.0" r="0.4" fill="#6060e0" opacity="0.28"/><circle cx="57.3" cy="61.4" r="0.4" fill="#6060e0" opacity="0.34"/><circle cx="60.7" cy="24.3" r="0.4" fill="#6060e0" opacity="0.45"/><rect x="13.899999999999999" y="17.200000000000003" width="5" height="0.8" fill="#b8b8b8"/><rect x="31.299999999999997" y="17.200000000000003" width="5" height="0.8" fill="#b8b8b8"/><rect x="55.1" y="17.200000000000003" width="5" height="0.8" fill="#b8b8b8"/><rect x="78.1" y="17.200000000000003" width="5" height="0.8" fill="#b8b8b8"/><rect x="17.1" y="36.9" width="5" height="0.8" fill="#b8b8b8"/><rect x="34.5" y="36.9" width="5" height="0.8" fill="#b8b8b8"/><rect x="52.4" y="36.9" width="5" height="0.8" fill="#b8b8b8"/><rect x="73.5" y="36.9" width="5" height="0.8" fill="#b8b8b8"/><rect x="18.9" y="56.1" width="5" height="0.8" fill="#b8b8b8"/><rect x="40.0" y="56.1" width="5" height="0.8" fill="#b8b8b8"/><rect x="59.7" y="56.1" width="5" height="0.8" fill="#b8b8b8"/><rect x="78.1" y="56.1" width="5" height="0.8" fill="#b8b8b8"/><rect x="13" y="59.2" width="5" height="0.6" fill="#888"/><path d="M15.0 61L17.2 63.4M14.9 63.4L17.0 61M16.0 60.7V63.6" stroke="#333" stroke-width="0.6"/><rect x="14.7" y="64.6" width="3" height="0.5" fill="#ccc"/><path d="M21.1 61L23.3 63.4M21.0 63.4L23.1 61M22.1 60.7V63.6" stroke="#333" stroke-width="0.6"/><rect x="20.8" y="64.6" width="3" height="0.5" fill="#ccc"/><path d="M27.2 61L29.4 63.4M27.099999999999998 63.4L29.2 61M28.2 60.7V63.6" stroke="#333" stroke-width="0.6"/><rect x="26.9" y="64.6" width="3" height="0.5" fill="#ccc"/><path d="M33.3 61L35.5 63.4M33.199999999999996 63.4L35.3 61M34.3 60.7V63.6" stroke="#333" stroke-width="0.6"/><rect x="33.0" y="64.6" width="3" height="0.5" fill="#ccc"/><path d="M39.4 61L41.6 63.4M39.3 63.4L41.4 61M40.4 60.7V63.6" stroke="#333" stroke-width="0.6"/><rect x="39.1" y="64.6" width="3" height="0.5" fill="#ccc"/><path d="M45.5 61L47.7 63.4M45.4 63.4L47.5 61M46.5 60.7V63.6" stroke="#333" stroke-width="0.6"/><rect x="45.2" y="64.6" width="3" height="0.5" fill="#ccc"/><path d="M51.599999999999994 61L53.8 63.4M51.49999999999999 63.4L53.599999999999994 61M52.599999999999994 60.7V63.6" stroke="#333" stroke-width="0.6"/><rect x="51.3" y="64.6" width="3" height="0.5" fill="#ccc"/><path d="M57.699999999999996 61L59.9 63.4M57.599999999999994 63.4L59.699999999999996 61M58.699999999999996 60.7V63.6" stroke="#333" stroke-width="0.6"/><rect x="57.4" y="64.6" width="3" height="0.5" fill="#ccc"/><path d="M63.8 61L66.0 63.4M63.699999999999996 63.4L65.8 61M64.8 60.7V63.6" stroke="#333" stroke-width="0.6"/><rect x="63.5" y="64.6" width="3" height="0.5" fill="#ccc"/><path d="M69.9 61L72.10000000000001 63.4M69.80000000000001 63.4L71.9 61M70.9 60.7V63.6" stroke="#333" stroke-width="0.6"/><rect x="69.60000000000001" y="64.6" width="3" height="0.5" fill="#ccc"/><path d="M76.0 61L78.2 63.4M75.9 63.4L78.0 61M77.0 60.7V63.6" stroke="#333" stroke-width="0.6"/><rect x="75.7" y="64.6" width="3" height="0.5" fill="#ccc"/><path d="M82.1 61L84.3 63.4M82.0 63.4L84.1 61M83.1 60.7V63.6" stroke="#333" stroke-width="0.6"/><rect x="81.8" y="64.6" width="3" height="0.5" fill="#ccc"/></svg></div><div class="ct">Design Elements — Zodiac<br>Constellations</div></div>
<div class="card tex" style="left:419px;top:635px;height:122.5px"><div class="th"><svg width="99" height="66" viewBox="0 0 99 66"><defs><linearGradient id="gtile" x1="0" y1="0" x2="1" y2="1"><stop offset="0" stop-color="#b8b8b8"/><stop offset="0.5" stop-color="#f4f4f4"/><stop offset="1" stop-color="#c8c8c8"/></linearGradient></defs><rect width="99" height="66" fill="#e8ecf0"/><rect x="1.0" y="0.3" width="21.2" height="21.2" fill="#d0d0d0" stroke="#8a8a8a" stroke-width="0.8"/><rect x="1.5" y="0.8" width="20.2" height="20.2" fill="url(#gtile)"/><g transform="translate(11.60,10.90) scale(1.12) translate(-11.60,-10.90)"><g fill="none" stroke="#111" stroke-width="1.15"><path d="M8.6 2.9000000000000004C17.6 2.9000000000000004 17.6 18.9 8.6 18.9C14.6 15.9 14.6 5.9 8.6 2.9000000000000004Z"/></g></g><rect x="26.3" y="0.3" width="21.2" height="21.2" fill="#d0d0d0" stroke="#8a8a8a" stroke-width="0.8"/><rect x="26.8" y="0.8" width="20.2" height="20.2" fill="url(#gtile)"/><g transform="translate(36.90,10.90) scale(1.12) translate(-36.90,-10.90)"><g fill="none" stroke="#111" stroke-width="1.15"><circle cx="36.9" cy="13.9" r="4.5"/><path d="M36.9 9.4V2.4000000000000004M34.4 4.9H39.4"/></g></g><rect x="51.6" y="0.3" width="21.2" height="21.2" fill="#d0d0d0" stroke="#8a8a8a" stroke-width="0.8"/><rect x="52.1" y="0.8" width="20.2" height="20.2" fill="url(#gtile)"/><g transform="translate(62.20,10.90) scale(1.12) translate(-62.20,-10.90)"><g fill="none" stroke="#111" stroke-width="1.15"><circle cx="62.2" cy="13.9" r="4.5"/><circle cx="62.2" cy="13.9" r="0.6" fill="#111"/><path d="M62.2 9.4V2.9000000000000004M60.7 4.4L62.2 2.4000000000000004L63.7 4.4"/></g></g><rect x="76.9" y="0.3" width="21.2" height="21.2" fill="#d0d0d0" stroke="#8a8a8a" stroke-width="0.8"/><rect x="77.4" y="0.8" width="20.2" height="20.2" fill="url(#gtile)"/><g transform="translate(87.50,10.90) scale(1.12) translate(-87.50,-10.90)"><g fill="none" stroke="#111" stroke-width="1.15"><circle cx="87.5" cy="10.9" r="8"/></g></g><rect x="1.0" y="23.2" width="21.2" height="21.2" fill="#d0d0d0" stroke="#8a8a8a" stroke-width="0.8"/><rect x="1.5" y="23.7" width="20.2" height="20.2" fill="url(#gtile)"/><g transform="translate(11.60,33.80) scale(1.12) translate(-11.60,-33.80)"><g fill="none" stroke="#111" stroke-width="1.15"><path d="M6.6 41.8L14.6 27.799999999999997M8.6 29.799999999999997C11.6 27.799999999999997 14.6 30.799999999999997 15.6 27.799999999999997M9.6 34.8H14.6"/><circle cx="15.6" cy="27.799999999999997" r="1"/></g></g><rect x="26.3" y="23.2" width="21.2" height="21.2" fill="#d0d0d0" stroke="#8a8a8a" stroke-width="0.8"/><rect x="26.8" y="23.7" width="20.2" height="20.2" fill="url(#gtile)"/><g transform="translate(36.90,33.80) scale(1.12) translate(-36.90,-33.80)"><g fill="none" stroke="#111" stroke-width="1.15"><path d="M28.9 30.799999999999997L31.9 28.799999999999997L34.9 30.799999999999997L37.9 28.799999999999997L40.9 30.799999999999997L44.9 28.799999999999997M28.9 37.8L31.9 35.8L34.9 37.8L37.9 35.8L40.9 37.8L44.9 35.8"/></g></g><rect x="51.6" y="23.2" width="21.2" height="21.2" fill="#d0d0d0" stroke="#8a8a8a" stroke-width="0.8"/><rect x="52.1" y="23.7" width="20.2" height="20.2" fill="url(#gtile)"/><g transform="translate(62.20,33.80) scale(1.12) translate(-62.20,-33.80)"><g fill="none" stroke="#111" stroke-width="1.15"><circle cx="57.7" cy="38.3" r="3.2"/><circle cx="66.7" cy="29.299999999999997" r="3.2"/><path d="M60.0 36.0L64.4 31.599999999999998"/></g></g><rect x="76.9" y="23.2" width="21.2" height="21.2" fill="#d0d0d0" stroke="#8a8a8a" stroke-width="0.8"/><rect x="77.4" y="23.7" width="20.2" height="20.2" fill="url(#gtile)"/><g transform="translate(87.50,33.80) scale(1.12) translate(-87.50,-33.80)"><g fill="none" stroke="#111" stroke-width="1.15"><circle cx="83.0" cy="38.8" r="2.4"/><path d="M84.5 36.8L88.5 25.799999999999997M85.0 37.3L93.5 28.799999999999997M85.5 38.3L95.5 33.8"/></g></g><rect x="1.0" y="46.099999999999994" width="21.2" height="21.2" fill="#d0d0d0" stroke="#8a8a8a" stroke-width="0.8"/><rect x="1.5" y="46.599999999999994" width="20.2" height="20.2" fill="url(#gtile)"/><g transform="translate(11.60,56.70) scale(1.12) translate(-11.60,-56.70)"><g fill="none" stroke="#111" stroke-width="1.15"><circle cx="7.1" cy="60.699999999999996" r="2.7"/><path d="M9.799999999999999 60.699999999999996C10.6 54.699999999999996 5.6 52.699999999999996 8.6 49.699999999999996C11.6 47.699999999999996 16.6 50.699999999999996 13.6 58.699999999999996C11.6 63.699999999999996 14.6 64.69999999999999 16.6 63.699999999999996"/></g></g><rect x="26.3" y="46.099999999999994" width="21.2" height="21.2" fill="#d0d0d0" stroke="#8a8a8a" stroke-width="0.8"/><rect x="26.8" y="46.599999999999994" width="20.2" height="20.2" fill="url(#gtile)"/><g transform="translate(36.90,56.70) scale(1.12) translate(-36.90,-56.70)"><g fill="none" stroke="#111" stroke-width="1.15"><path d="M28.9 49.699999999999996C33.9 51.699999999999996 39.9 51.699999999999996 44.9 49.699999999999996M28.9 64.69999999999999C33.9 62.699999999999996 39.9 62.699999999999996 44.9 64.69999999999999M33.9 51.199999999999996V63.199999999999996M39.9 51.199999999999996V63.199999999999996" stroke-width="1.2"/></g></g><rect x="51.6" y="46.099999999999994" width="21.2" height="21.2" fill="#d0d0d0" stroke="#8a8a8a" stroke-width="0.8"/><rect x="52.1" y="46.599999999999994" width="20.2" height="20.2" fill="url(#gtile)"/><g transform="translate(62.20,56.70) scale(1.12) translate(-62.20,-56.70)"><g fill="none" stroke="#111" stroke-width="1.15"><path d="M55.2 50.699999999999996C57.2 48.699999999999996 59.2 51.699999999999996 59.2 58.699999999999996M59.2 52.699999999999996C61.2 48.699999999999996 64.2 50.699999999999996 63.2 58.699999999999996C62.2 63.699999999999996 65.2 64.69999999999999 67.2 62.699999999999996"/><circle cx="66.2" cy="60.699999999999996" r="2.3"/></g></g><rect x="76.9" y="46.099999999999994" width="21.2" height="21.2" fill="#d0d0d0" stroke="#8a8a8a" stroke-width="0.8"/><rect x="77.4" y="46.599999999999994" width="20.2" height="20.2" fill="url(#gtile)"/><g transform="translate(87.50,56.70) scale(1.12) translate(-87.50,-56.70)"><g fill="none" stroke="#111" stroke-width="1.15"><path d="M81.5 48.699999999999996C86.5 52.699999999999996 86.5 60.699999999999996 81.5 64.69999999999999M93.5 48.699999999999996C88.5 52.699999999999996 88.5 60.699999999999996 93.5 64.69999999999999M80.5 56.699999999999996H94.5"/></g></g></svg></div><div class="ct">Astronomical Symbols</div></div>
<div class="card tex" style="left:539px;top:635px;height:122.5px"><div class="th"><svg width="99" height="66" viewBox="0 0 99 66"><defs><linearGradient id="btile" x1="0" y1="0" x2="0.6" y2="1"><stop offset="0" stop-color="#b0c8e8"/><stop offset="0.6" stop-color="#dce8f6"/><stop offset="0.75" stop-color="#f4f8fc"/><stop offset="1" stop-color="#c0d4ec"/></linearGradient></defs><rect width="99" height="66" fill="#e8ecf0"/><rect x="3.6" y="0.6" width="21.2" height="21.2" fill="#b8cce8" stroke="#4a5a70" stroke-width="0.8"/><rect x="4.1" y="1.1" width="20.2" height="20.2" fill="url(#btile)"/><path d="M9.9 4.9L14.7 5.9L16.6 11.7L18.5 16.5L7.9 9.8L9.9 4.9" fill="none" stroke="#1822b8" stroke-width="0.8"/><circle cx="9.9" cy="4.9" r="1.1" fill="#1822b8"/><circle cx="14.7" cy="5.9" r="1.1" fill="#1822b8"/><circle cx="16.6" cy="11.7" r="1.0" fill="#1822b8"/><circle cx="18.5" cy="16.5" r="1.3" fill="#1822b8"/><circle cx="7.9" cy="9.8" r="0.9" fill="#1822b8"/><circle cx="9.9" cy="4.9" r="0.9" fill="#1822b8"/><rect x="27.6" y="0.6" width="21.2" height="21.2" fill="#b8cce8" stroke="#4a5a70" stroke-width="0.8"/><rect x="28.1" y="1.1" width="20.2" height="20.2" fill="url(#btile)"/><path d="M31.0 7.8L35.8 10.7L39.6 9.8L43.5 5.9L39.6 9.8L40.6 16.5" fill="none" stroke="#1822b8" stroke-width="0.8"/><circle cx="31.0" cy="7.8" r="1.4" fill="#1822b8"/><circle cx="35.8" cy="10.7" r="1.0" fill="#1822b8"/><circle cx="39.6" cy="9.8" r="0.8" fill="#1822b8"/><circle cx="43.5" cy="5.9" r="1.3" fill="#1822b8"/><circle cx="39.6" cy="9.8" r="0.9" fill="#1822b8"/><circle cx="40.6" cy="16.5" r="1.4" fill="#1822b8"/><rect x="51.6" y="0.6" width="21.2" height="21.2" fill="#b8cce8" stroke="#4a5a70" stroke-width="0.8"/><rect x="52.1" y="1.1" width="20.2" height="20.2" fill="url(#btile)"/><path d="M55.0 4.0L58.8 9.8L61.7 14.6L64.6 8.8L68.5 16.5" fill="none" stroke="#1822b8" stroke-width="0.8"/><circle cx="55.0" cy="4.0" r="0.8" fill="#1822b8"/><circle cx="58.8" cy="9.8" r="1.3" fill="#1822b8"/><circle cx="61.7" cy="14.6" r="1.3" fill="#1822b8"/><circle cx="64.6" cy="8.8" r="1.0" fill="#1822b8"/><circle cx="68.5" cy="16.5" r="1.2" fill="#1822b8"/><rect x="75.6" y="0.6" width="21.2" height="21.2" fill="#b8cce8" stroke="#4a5a70" stroke-width="0.8"/><rect x="76.1" y="1.1" width="20.2" height="20.2" fill="url(#btile)"/><path d="M79.0 10.7L83.8 6.9L87.6 12.6L92.5 7.8" fill="none" stroke="#1822b8" stroke-width="0.8"/><circle cx="79.0" cy="10.7" r="1.4" fill="#1822b8"/><circle cx="83.8" cy="6.9" r="1.0" fill="#1822b8"/><circle cx="87.6" cy="12.6" r="1.3" fill="#1822b8"/><circle cx="92.5" cy="7.8" r="1.1" fill="#1822b8"/><rect x="3.6" y="23.5" width="21.2" height="21.2" fill="#b8cce8" stroke="#4a5a70" stroke-width="0.8"/><rect x="4.1" y="24.0" width="20.2" height="20.2" fill="url(#btile)"/><path d="M7.9 27.8L10.8 35.5L15.6 37.5L19.5 32.7" fill="none" stroke="#1822b8" stroke-width="0.8"/><circle cx="7.9" cy="27.8" r="1.2" fill="#1822b8"/><circle cx="10.8" cy="35.5" r="1.1" fill="#1822b8"/><circle cx="15.6" cy="37.5" r="1.4" fill="#1822b8"/><circle cx="19.5" cy="32.7" r="0.9" fill="#1822b8"/><rect x="27.6" y="23.5" width="21.2" height="21.2" fill="#b8cce8" stroke="#4a5a70" stroke-width="0.8"/><rect x="28.1" y="24.0" width="20.2" height="20.2" fill="url(#btile)"/><path d="M31.9 28.8L40.6 27.8L44.5 32.7L44.5 39.4L31.9 37.5L31.9 28.8" fill="none" stroke="#1822b8" stroke-width="0.8"/><circle cx="31.9" cy="28.8" r="1.0" fill="#1822b8"/><circle cx="40.6" cy="27.8" r="0.8" fill="#1822b8"/><circle cx="44.5" cy="32.7" r="1.1" fill="#1822b8"/><circle cx="44.5" cy="39.4" r="1.0" fill="#1822b8"/><circle cx="31.9" cy="37.5" r="1.2" fill="#1822b8"/><circle cx="31.9" cy="28.8" r="1.3" fill="#1822b8"/><rect x="51.6" y="23.5" width="21.2" height="21.2" fill="#b8cce8" stroke="#4a5a70" stroke-width="0.8"/><rect x="52.1" y="24.0" width="20.2" height="20.2" fill="url(#btile)"/><path d="M55.9 38.4L67.5 27.8" fill="none" stroke="#1822b8" stroke-width="0.8"/><circle cx="55.9" cy="38.4" r="1.3" fill="#1822b8"/><circle cx="67.5" cy="27.8" r="1.1" fill="#1822b8"/><rect x="75.6" y="23.5" width="21.2" height="21.2" fill="#b8cce8" stroke="#4a5a70" stroke-width="0.8"/><rect x="76.1" y="24.0" width="20.2" height="20.2" fill="url(#btile)"/><path d="M79.0 30.7L83.8 34.6L88.6 38.4L92.5 39.4" fill="none" stroke="#1822b8" stroke-width="0.8"/><circle cx="79.0" cy="30.7" r="1.3" fill="#1822b8"/><circle cx="83.8" cy="34.6" r="1.1" fill="#1822b8"/><circle cx="88.6" cy="38.4" r="1.1" fill="#1822b8"/><circle cx="92.5" cy="39.4" r="1.0" fill="#1822b8"/><rect x="3.6" y="46.4" width="21.2" height="21.2" fill="#b8cce8" stroke="#4a5a70" stroke-width="0.8"/><rect x="4.1" y="46.9" width="20.2" height="20.2" fill="url(#btile)"/><path d="M7.0 60.4L10.8 53.6L17.6 51.7L20.5 58.4" fill="none" stroke="#1822b8" stroke-width="0.8"/><circle cx="7.0" cy="60.4" r="0.9" fill="#1822b8"/><circle cx="10.8" cy="53.6" r="1.0" fill="#1822b8"/><circle cx="17.6" cy="51.7" r="1.3" fill="#1822b8"/><circle cx="20.5" cy="58.4" r="0.8" fill="#1822b8"/><rect x="27.6" y="46.4" width="21.2" height="21.2" fill="#b8cce8" stroke="#4a5a70" stroke-width="0.8"/><rect x="28.1" y="46.9" width="20.2" height="20.2" fill="url(#btile)"/><path d="M31.9 59.4L36.8 55.6L41.6 57.5L44.5 51.7" fill="none" stroke="#1822b8" stroke-width="0.8"/><circle cx="31.9" cy="59.4" r="1.0" fill="#1822b8"/><circle cx="36.8" cy="55.6" r="1.2" fill="#1822b8"/><circle cx="41.6" cy="57.5" r="1.2" fill="#1822b8"/><circle cx="44.5" cy="51.7" r="1.2" fill="#1822b8"/><rect x="51.6" y="46.4" width="21.2" height="21.2" fill="#b8cce8" stroke="#4a5a70" stroke-width="0.8"/><rect x="52.1" y="46.9" width="20.2" height="20.2" fill="url(#btile)"/><path d="M56.9 50.7L64.6 51.7L67.5 60.4L59.8 62.3L56.9 50.7" fill="none" stroke="#1822b8" stroke-width="0.8"/><circle cx="56.9" cy="50.7" r="1.0" fill="#1822b8"/><circle cx="64.6" cy="51.7" r="1.1" fill="#1822b8"/><circle cx="67.5" cy="60.4" r="1.1" fill="#1822b8"/><circle cx="59.8" cy="62.3" r="0.9" fill="#1822b8"/><circle cx="56.9" cy="50.7" r="1.2" fill="#1822b8"/><rect x="75.6" y="46.4" width="21.2" height="21.2" fill="#b8cce8" stroke="#4a5a70" stroke-width="0.8"/><rect x="76.1" y="46.9" width="20.2" height="20.2" fill="url(#btile)"/><path d="M83.8 49.8L86.7 62.3" fill="none" stroke="#1822b8" stroke-width="0.8"/><circle cx="83.8" cy="49.8" r="1.2" fill="#1822b8"/><circle cx="86.7" cy="62.3" r="1.4" fill="#1822b8"/></svg></div><div class="ct">Constellations Except<br>Zodiac, Northern and<br>Southern</div></div>
<div class="card tex" style="left:659px;top:635px;height:122.5px"><div class="th"><svg width="99" height="66" viewBox="0 0 99 66"><defs><radialGradient id="gg"><stop offset="0" stop-color="#aaa"/><stop offset="1" stop-color="#666"/></radialGradient></defs><rect width="99" height="66" fill="#e8ecf0"/><rect x="1.0" y="0.3" width="21.2" height="21.2" fill="#b0b0b0" stroke="#707070" stroke-width="0.8"/><rect x="2.5" y="1.8" width="18.2" height="18.2" fill="#030303"/><ellipse cx="11.6" cy="10.9" rx="6.4" ry="6.2" fill="url(#gg)"/><rect x="26.3" y="0.3" width="21.2" height="21.2" fill="#b0b0b0" stroke="#707070" stroke-width="0.8"/><rect x="27.8" y="1.8" width="18.2" height="18.2" fill="#030303"/><ellipse cx="36.9" cy="10.9" rx="6.8" ry="5.5" fill="url(#gg)"/><rect x="51.6" y="0.3" width="21.2" height="21.2" fill="#b0b0b0" stroke="#707070" stroke-width="0.8"/><rect x="53.1" y="1.8" width="18.2" height="18.2" fill="#030303"/><ellipse cx="62.2" cy="10.9" rx="6.8" ry="4.2" fill="url(#gg)"/><rect x="76.9" y="0.3" width="21.2" height="21.2" fill="#b0b0b0" stroke="#707070" stroke-width="0.8"/><rect x="78.4" y="1.8" width="18.2" height="18.2" fill="#030303"/><ellipse cx="87.5" cy="10.9" rx="6.6" ry="3.2" fill="url(#gg)"/><rect x="1.0" y="23.2" width="21.2" height="21.2" fill="#b0b0b0" stroke="#707070" stroke-width="0.8"/><rect x="2.5" y="24.7" width="18.2" height="18.2" fill="#030303"/><ellipse cx="11.6" cy="33.8" rx="7" ry="1.4" fill="#888"/><ellipse cx="11.6" cy="33.8" rx="3" ry="2" fill="#999"/><rect x="26.3" y="23.2" width="21.2" height="21.2" fill="#b0b0b0" stroke="#707070" stroke-width="0.8"/><rect x="27.8" y="24.7" width="18.2" height="18.2" fill="#030303"/><path d="M36.64 32.60L36.98 32.42L37.39 32.34L37.85 32.39L38.32 32.59L38.73 32.95L39.05 33.44L39.23 34.04L39.23 34.71L39.03 35.39L38.63 36.02L38.04 36.55L37.28 36.91L36.42 37.06L35.50 36.96L34.61 36.60L33.82 35.98L33.20 35.14L32.82 34.12L32.73 32.99L32.95 31.84L33.50 30.75L34.34 29.82L35.45 29.13L36.73 28.76L38.12 28.74L39.50 29.11L40.77 29.85L41.81 30.94L42.55 32.31L42.90 33.87L42.82 35.51L42.29 37.11L41.32 38.54L39.98 39.69L38.33 40.45" fill="none" stroke="#9a9a9a" stroke-width="0.8"/><path d="M37.16 35.00L36.82 35.18L36.41 35.26L35.95 35.21L35.48 35.01L35.07 34.65L34.75 34.16L34.57 33.56L34.57 32.89L34.77 32.21L35.17 31.58L35.76 31.05L36.52 30.69L37.38 30.54L38.30 30.64L39.19 31.00L39.98 31.62L40.60 32.46L40.98 33.48L41.07 34.61L40.85 35.76L40.30 36.85L39.46 37.78L38.35 38.47L37.07 38.84L35.68 38.86L34.30 38.49L33.03 37.75L31.99 36.66L31.25 35.29L30.90 33.73L30.98 32.09L31.51 30.49L32.48 29.06L33.82 27.91L35.47 27.15" fill="none" stroke="#9a9a9a" stroke-width="0.8"/><circle cx="36.9" cy="33.8" r="1.50" fill="#9a9a9a"/><rect x="51.6" y="23.2" width="21.2" height="21.2" fill="#b0b0b0" stroke="#707070" stroke-width="0.8"/><rect x="53.1" y="24.7" width="18.2" height="18.2" fill="#030303"/><path d="M62.98 32.85L63.29 32.94L63.59 33.13L63.85 33.40L64.06 33.76L64.18 34.19L64.20 34.67L64.10 35.17L63.87 35.66L63.51 36.11L63.03 36.49L62.45 36.77L61.79 36.91L61.08 36.90L60.36 36.72L59.67 36.38L59.04 35.86L58.52 35.19L58.15 34.40L57.96 33.51L57.97 32.57L58.19 31.61L58.63 30.70L59.28 29.88L60.12 29.20L61.11 28.71L62.23 28.43L63.41 28.41L64.60 28.65L65.74 29.15L66.78 29.92L67.64 30.91L68.29 32.10L68.67 33.43L68.76 34.85L68.53 36.28" fill="none" stroke="#9a9a9a" stroke-width="0.8"/><path d="M61.42 34.75L61.11 34.66L60.81 34.47L60.55 34.20L60.34 33.84L60.22 33.41L60.20 32.93L60.30 32.43L60.53 31.94L60.89 31.49L61.37 31.11L61.95 30.83L62.61 30.69L63.32 30.70L64.04 30.88L64.73 31.22L65.36 31.74L65.88 32.41L66.25 33.20L66.44 34.09L66.43 35.03L66.21 35.99L65.77 36.90L65.12 37.72L64.28 38.40L63.29 38.89L62.17 39.17L60.99 39.19L59.80 38.95L58.66 38.45L57.62 37.68L56.76 36.69L56.11 35.50L55.73 34.17L55.64 32.75L55.87 31.32" fill="none" stroke="#9a9a9a" stroke-width="0.8"/><circle cx="62.2" cy="33.8" r="1.50" fill="#9a9a9a"/><rect x="76.9" y="23.2" width="21.2" height="21.2" fill="#b0b0b0" stroke="#707070" stroke-width="0.8"/><rect x="78.4" y="24.7" width="18.2" height="18.2" fill="#030303"/><path d="M88.72 33.82L88.87 34.02L88.97 34.26L89.03 34.54L89.05 34.84L89.00 35.15L88.89 35.48L88.72 35.80L88.48 36.10L88.19 36.37L87.83 36.60L87.42 36.78L86.97 36.89L86.49 36.93L85.98 36.90L85.46 36.78L84.95 36.58L84.45 36.28L83.99 35.90L83.58 35.44L83.23 34.90L82.96 34.30L82.77 33.64L82.69 32.93L82.71 32.20L82.85 31.46L83.10 30.73L83.47 30.02L83.95 29.36L84.54 28.76L85.23 28.24L86.01 27.82L86.87 27.51L87.78 27.32L88.74 27.28L89.71 27.37" fill="none" stroke="#9a9a9a" stroke-width="0.8"/><path d="M86.28 33.78L86.13 33.58L86.03 33.34L85.97 33.06L85.95 32.76L86.00 32.45L86.11 32.12L86.28 31.80L86.52 31.50L86.81 31.23L87.17 31.00L87.58 30.82L88.03 30.71L88.51 30.67L89.02 30.70L89.54 30.82L90.05 31.02L90.55 31.32L91.01 31.70L91.42 32.16L91.77 32.70L92.04 33.30L92.23 33.96L92.31 34.67L92.29 35.40L92.15 36.14L91.90 36.87L91.53 37.58L91.05 38.24L90.46 38.84L89.77 39.36L88.99 39.78L88.13 40.09L87.22 40.28L86.26 40.32L85.29 40.23" fill="none" stroke="#9a9a9a" stroke-width="0.8"/><circle cx="87.5" cy="33.8" r="1.50" fill="#9a9a9a"/><rect x="1.0" y="46.099999999999994" width="21.2" height="21.2" fill="#b0b0b0" stroke="#707070" stroke-width="0.8"/><rect x="2.5" y="47.599999999999994" width="18.2" height="18.2" fill="#030303"/><path d="M12.34 57.67L12.14 57.97L11.83 58.22L11.43 58.39L10.96 58.45L10.45 58.36L9.96 58.13L9.51 57.75L9.16 57.23L8.94 56.60L8.90 55.90L9.05 55.17L9.40 54.47L9.94 53.85L10.66 53.38L11.51 53.09L12.44 53.02L13.41 53.21L14.32 53.65L15.13 54.33L15.76 55.23L16.15 56.30L16.27 57.47L16.07 58.67L15.57 59.82L14.77 60.83L13.70 61.64L12.43 62.16L11.03 62.36L9.59 62.19L8.20 61.65L6.95 60.75L5.95 59.54L5.27 58.08L4.96 56.45L5.08 54.77" fill="none" stroke="#9a9a9a" stroke-width="0.8"/><path d="M10.86 55.73L11.06 55.43L11.37 55.18L11.77 55.01L12.24 54.95L12.75 55.04L13.24 55.27L13.69 55.65L14.04 56.17L14.26 56.80L14.30 57.50L14.15 58.23L13.80 58.93L13.26 59.55L12.54 60.02L11.69 60.31L10.76 60.38L9.79 60.19L8.88 59.75L8.07 59.07L7.44 58.17L7.05 57.10L6.93 55.93L7.13 54.73L7.63 53.58L8.43 52.57L9.50 51.76L10.77 51.24L12.17 51.04L13.61 51.21L15.00 51.75L16.25 52.65L17.25 53.86L17.93 55.32L18.24 56.95L18.12 58.63" fill="none" stroke="#9a9a9a" stroke-width="0.8"/><ellipse cx="11.6" cy="56.699999999999996" rx="2.38" ry="0.82" fill="#9a9a9a" transform="rotate(412.5 11.6 56.699999999999996)"/><circle cx="11.6" cy="56.699999999999996" r="1.50" fill="#9a9a9a"/><rect x="26.3" y="46.099999999999994" width="21.2" height="21.2" fill="#b0b0b0" stroke="#707070" stroke-width="0.8"/><rect x="27.8" y="47.599999999999994" width="18.2" height="18.2" fill="#030303"/><path d="M36.60 57.89L36.31 57.95L35.98 57.94L35.63 57.84L35.30 57.65L34.99 57.37L34.74 57.00L34.56 56.57L34.48 56.07L34.51 55.54L34.66 55.00L34.93 54.47L35.33 53.99L35.84 53.58L36.45 53.28L37.14 53.09L37.88 53.06L38.65 53.18L39.41 53.46L40.11 53.91L40.73 54.52L41.24 55.26L41.59 56.12L41.77 57.07L41.76 58.06L41.54 59.06L41.11 60.02L40.48 60.91L39.67 61.67L38.69 62.26L37.58 62.67L36.38 62.84L35.14 62.77L33.91 62.45L32.74 61.88L31.68 61.06" fill="none" stroke="#9a9a9a" stroke-width="0.8"/><path d="M37.20 55.51L37.49 55.45L37.82 55.46L38.17 55.56L38.50 55.75L38.81 56.03L39.06 56.40L39.24 56.83L39.32 57.33L39.29 57.86L39.14 58.40L38.87 58.93L38.47 59.41L37.96 59.82L37.35 60.12L36.66 60.31L35.92 60.34L35.15 60.22L34.39 59.94L33.69 59.49L33.07 58.88L32.56 58.14L32.21 57.28L32.03 56.33L32.04 55.34L32.26 54.34L32.69 53.38L33.32 52.49L34.13 51.73L35.11 51.14L36.22 50.73L37.42 50.56L38.66 50.63L39.89 50.95L41.06 51.52L42.12 52.34" fill="none" stroke="#9a9a9a" stroke-width="0.8"/><ellipse cx="36.9" cy="56.699999999999996" rx="2.38" ry="0.82" fill="#9a9a9a" transform="rotate(464.1 36.9 56.699999999999996)"/><circle cx="36.9" cy="56.699999999999996" r="1.50" fill="#9a9a9a"/><rect x="51.6" y="46.099999999999994" width="21.2" height="21.2" fill="#b0b0b0" stroke="#707070" stroke-width="0.8"/><rect x="53.1" y="47.599999999999994" width="18.2" height="18.2" fill="#030303"/><path d="M61.08 57.20L60.88 57.11L60.68 56.97L60.50 56.78L60.34 56.56L60.22 56.29L60.14 56.00L60.10 55.67L60.11 55.33L60.18 54.98L60.30 54.62L60.49 54.27L60.73 53.93L61.03 53.62L61.39 53.34L61.80 53.11L62.26 52.93L62.75 52.81L63.28 52.75L63.82 52.77L64.38 52.87L64.94 53.04L65.49 53.30L66.01 53.64L66.50 54.06L66.94 54.55L67.33 55.12L67.64 55.75L67.88 56.43L68.03 57.15L68.08 57.91L68.03 58.69L67.88 59.48L67.62 60.25L67.25 61.01L66.78 61.73" fill="none" stroke="#9a9a9a" stroke-width="0.8"/><path d="M63.32 56.20L63.52 56.29L63.72 56.43L63.90 56.62L64.06 56.84L64.18 57.11L64.26 57.40L64.30 57.73L64.29 58.07L64.22 58.42L64.10 58.78L63.91 59.13L63.67 59.47L63.37 59.78L63.01 60.06L62.60 60.29L62.14 60.47L61.65 60.59L61.12 60.65L60.58 60.63L60.02 60.53L59.46 60.36L58.91 60.10L58.39 59.76L57.90 59.34L57.46 58.85L57.07 58.28L56.76 57.65L56.52 56.97L56.37 56.25L56.32 55.49L56.37 54.71L56.52 53.92L56.78 53.15L57.15 52.39L57.62 51.67" fill="none" stroke="#9a9a9a" stroke-width="0.8"/><ellipse cx="62.2" cy="56.699999999999996" rx="2.38" ry="0.82" fill="#9a9a9a" transform="rotate(515.7 62.2 56.699999999999996)"/><circle cx="62.2" cy="56.699999999999996" r="1.50" fill="#9a9a9a"/><rect x="76.9" y="46.099999999999994" width="21.2" height="21.2" fill="#b0b0b0" stroke="#707070" stroke-width="0.8"/><rect x="78.4" y="47.599999999999994" width="18.2" height="18.2" fill="#030303"/><path d="M81.5 52.699999999999996C84.5 49.699999999999996 89.5 51.699999999999996 92.5 50.699999999999996C93.5 53.699999999999996 90.5 55.699999999999996 92.5 58.699999999999996C93.5 61.699999999999996 90.5 63.699999999999996 85.5 62.699999999999996C83.5 60.699999999999996 85.5 57.699999999999996 84.5 55.699999999999996C82.5 54.699999999999996 80.5 54.699999999999996 81.5 52.699999999999996Z" fill="#8a8a8a"/></svg></div><div class="ct">Galaxies</div></div>
<div class="card tex" style="left:779px;top:635px;height:122.5px"><div class="th"><svg width="99" height="66" viewBox="0 0 99 66"><defs><linearGradient id="btile" x1="0" y1="0" x2="0.6" y2="1"><stop offset="0" stop-color="#b0c8e8"/><stop offset="0.6" stop-color="#dce8f6"/><stop offset="0.75" stop-color="#f4f8fc"/><stop offset="1" stop-color="#c0d4ec"/></linearGradient></defs><rect width="99" height="66" fill="#e8ecf0"/><rect x="1.3" y="6.9" width="21.7" height="21.7" fill="#b8cce8" stroke="#4a5a70" stroke-width="0.8"/><rect x="1.8" y="7.4" width="20.7" height="20.7" fill="url(#btile)"/><path d="M6.7 11.3L14.6 12.3L17.6 21.2L9.7 23.2L6.7 11.3" fill="none" stroke="#1822b8" stroke-width="0.8"/><circle cx="6.7" cy="11.3" r="1.1" fill="#1822b8"/><circle cx="14.6" cy="12.3" r="1.1" fill="#1822b8"/><circle cx="17.6" cy="21.2" r="1.1" fill="#1822b8"/><circle cx="9.7" cy="23.2" r="0.9" fill="#1822b8"/><circle cx="6.7" cy="11.3" r="1.3" fill="#1822b8"/><rect x="26.0" y="6.9" width="21.7" height="21.7" fill="#b8cce8" stroke="#4a5a70" stroke-width="0.8"/><rect x="26.5" y="7.4" width="20.7" height="20.7" fill="url(#btile)"/><path d="M29.5 10.4L33.4 16.3L36.4 21.2L39.3 15.3L43.3 23.2" fill="none" stroke="#1822b8" stroke-width="0.8"/><circle cx="29.5" cy="10.4" r="0.9" fill="#1822b8"/><circle cx="33.4" cy="16.3" r="0.9" fill="#1822b8"/><circle cx="36.4" cy="21.2" r="0.8" fill="#1822b8"/><circle cx="39.3" cy="15.3" r="1.0" fill="#1822b8"/><circle cx="43.3" cy="23.2" r="1.0" fill="#1822b8"/><rect x="50.699999999999996" y="6.9" width="21.7" height="21.7" fill="#b8cce8" stroke="#4a5a70" stroke-width="0.8"/><rect x="51.199999999999996" y="7.4" width="20.7" height="20.7" fill="url(#btile)"/><path d="M56.1 23.2L67.0 13.3" fill="none" stroke="#1822b8" stroke-width="0.8"/><circle cx="56.1" cy="23.2" r="1.3" fill="#1822b8"/><circle cx="67.0" cy="13.3" r="1.0" fill="#1822b8"/><rect x="75.39999999999999" y="6.9" width="21.7" height="21.7" fill="#b8cce8" stroke="#4a5a70" stroke-width="0.8"/><rect x="75.89999999999999" y="7.4" width="20.7" height="20.7" fill="url(#btile)"/><path d="M79.8 20.2L84.8 16.3L89.7 18.2L92.7 12.3" fill="none" stroke="#1822b8" stroke-width="0.8"/><circle cx="79.8" cy="20.2" r="0.9" fill="#1822b8"/><circle cx="84.8" cy="16.3" r="1.0" fill="#1822b8"/><circle cx="89.7" cy="18.2" r="1.4" fill="#1822b8"/><circle cx="92.7" cy="12.3" r="0.8" fill="#1822b8"/><rect x="1.3" y="34.7" width="21.7" height="21.7" fill="#b8cce8" stroke="#4a5a70" stroke-width="0.8"/><rect x="1.8" y="35.2" width="20.7" height="20.7" fill="url(#btile)"/><path d="M5.7 41.1L10.7 39.1L9.7 45.1L16.6 43.1L15.6 50.0L6.7 50.0L9.7 45.1" fill="none" stroke="#1822b8" stroke-width="0.8"/><circle cx="5.7" cy="41.1" r="1.2" fill="#1822b8"/><circle cx="10.7" cy="39.1" r="1.0" fill="#1822b8"/><circle cx="9.7" cy="45.1" r="1.2" fill="#1822b8"/><circle cx="16.6" cy="43.1" r="1.0" fill="#1822b8"/><circle cx="15.6" cy="50.0" r="1.2" fill="#1822b8"/><circle cx="6.7" cy="50.0" r="1.1" fill="#1822b8"/><circle cx="9.7" cy="45.1" r="1.2" fill="#1822b8"/><rect x="26.0" y="34.7" width="21.7" height="21.7" fill="#b8cce8" stroke="#4a5a70" stroke-width="0.8"/><rect x="26.5" y="35.2" width="20.7" height="20.7" fill="url(#btile)"/><path d="M32.4 39.1L37.3 40.1L39.3 46.0L41.3 51.0L30.4 44.1L32.4 39.1" fill="none" stroke="#1822b8" stroke-width="0.8"/><circle cx="32.4" cy="39.1" r="1.3" fill="#1822b8"/><circle cx="37.3" cy="40.1" r="1.1" fill="#1822b8"/><circle cx="39.3" cy="46.0" r="0.9" fill="#1822b8"/><circle cx="41.3" cy="51.0" r="0.8" fill="#1822b8"/><circle cx="30.4" cy="44.1" r="1.4" fill="#1822b8"/><circle cx="32.4" cy="39.1" r="1.1" fill="#1822b8"/></svg></div><div class="ct">Northern Constellations</div></div>
<div class="card tex" style="left:898px;top:635px;height:122.5px"><div class="th"><svg width="99" height="66" viewBox="0 0 99 66"><defs><linearGradient id="btile" x1="0" y1="0" x2="0.6" y2="1"><stop offset="0" stop-color="#b0c8e8"/><stop offset="0.6" stop-color="#dce8f6"/><stop offset="0.75" stop-color="#f4f8fc"/><stop offset="1" stop-color="#c0d4ec"/></linearGradient></defs><rect width="99" height="66" fill="#e8ecf0"/><rect x="3.2" y="0.6" width="21.2" height="21.2" fill="#b8cce8" stroke="#4a5a70" stroke-width="0.8"/><rect x="3.7" y="1.1" width="20.2" height="20.2" fill="url(#btile)"/><path d="M6.6 14.6L10.4 7.8L17.2 5.9L20.1 12.6" fill="none" stroke="#1822b8" stroke-width="0.8"/><circle cx="6.6" cy="14.6" r="1.1" fill="#1822b8"/><circle cx="10.4" cy="7.8" r="1.2" fill="#1822b8"/><circle cx="17.2" cy="5.9" r="0.9" fill="#1822b8"/><circle cx="20.1" cy="12.6" r="1.1" fill="#1822b8"/><rect x="27.4" y="0.6" width="21.2" height="21.2" fill="#b8cce8" stroke="#4a5a70" stroke-width="0.8"/><rect x="27.9" y="1.1" width="20.2" height="20.2" fill="url(#btile)"/><path d="M37.5 4.9L42.3 6.9L38.5 15.5L44.3 17.5L33.7 12.6L37.5 4.9" fill="none" stroke="#1822b8" stroke-width="0.8"/><circle cx="37.5" cy="4.9" r="0.9" fill="#1822b8"/><circle cx="42.3" cy="6.9" r="1.3" fill="#1822b8"/><circle cx="38.5" cy="15.5" r="0.8" fill="#1822b8"/><circle cx="44.3" cy="17.5" r="1.3" fill="#1822b8"/><circle cx="33.7" cy="12.6" r="0.8" fill="#1822b8"/><circle cx="37.5" cy="4.9" r="1.2" fill="#1822b8"/><rect x="51.6" y="0.6" width="21.2" height="21.2" fill="#b8cce8" stroke="#4a5a70" stroke-width="0.8"/><rect x="52.1" y="1.1" width="20.2" height="20.2" fill="url(#btile)"/><path d="M56.9 4.9L64.6 5.9L67.5 14.6L59.8 16.5L56.9 4.9" fill="none" stroke="#1822b8" stroke-width="0.8"/><circle cx="56.9" cy="4.9" r="1.0" fill="#1822b8"/><circle cx="64.6" cy="5.9" r="1.0" fill="#1822b8"/><circle cx="67.5" cy="14.6" r="1.3" fill="#1822b8"/><circle cx="59.8" cy="16.5" r="0.8" fill="#1822b8"/><circle cx="56.9" cy="4.9" r="0.8" fill="#1822b8"/><rect x="75.8" y="0.6" width="21.2" height="21.2" fill="#b8cce8" stroke="#4a5a70" stroke-width="0.8"/><rect x="76.3" y="1.1" width="20.2" height="20.2" fill="url(#btile)"/><path d="M79.2 7.8L84.0 10.7L87.8 9.8L91.7 5.9L87.8 9.8L88.8 16.5" fill="none" stroke="#1822b8" stroke-width="0.8"/><circle cx="79.2" cy="7.8" r="1.3" fill="#1822b8"/><circle cx="84.0" cy="10.7" r="1.1" fill="#1822b8"/><circle cx="87.8" cy="9.8" r="0.9" fill="#1822b8"/><circle cx="91.7" cy="5.9" r="1.4" fill="#1822b8"/><circle cx="87.8" cy="9.8" r="1.4" fill="#1822b8"/><circle cx="88.8" cy="16.5" r="0.9" fill="#1822b8"/><rect x="3.2" y="23.5" width="21.2" height="21.2" fill="#b8cce8" stroke="#4a5a70" stroke-width="0.8"/><rect x="3.7" y="24.0" width="20.2" height="20.2" fill="url(#btile)"/><path d="M7.5 27.8L10.4 35.5L15.2 37.5L19.1 32.7" fill="none" stroke="#1822b8" stroke-width="0.8"/><circle cx="7.5" cy="27.8" r="1.1" fill="#1822b8"/><circle cx="10.4" cy="35.5" r="0.9" fill="#1822b8"/><circle cx="15.2" cy="37.5" r="1.0" fill="#1822b8"/><circle cx="19.1" cy="32.7" r="1.2" fill="#1822b8"/><rect x="27.4" y="23.5" width="21.2" height="21.2" fill="#b8cce8" stroke="#4a5a70" stroke-width="0.8"/><rect x="27.9" y="24.0" width="20.2" height="20.2" fill="url(#btile)"/><path d="M31.7 28.8L40.4 27.8L44.3 32.7L44.3 39.4L31.7 37.5L31.7 28.8" fill="none" stroke="#1822b8" stroke-width="0.8"/><circle cx="31.7" cy="28.8" r="0.9" fill="#1822b8"/><circle cx="40.4" cy="27.8" r="1.2" fill="#1822b8"/><circle cx="44.3" cy="32.7" r="0.8" fill="#1822b8"/><circle cx="44.3" cy="39.4" r="0.9" fill="#1822b8"/><circle cx="31.7" cy="37.5" r="1.3" fill="#1822b8"/><circle cx="31.7" cy="28.8" r="1.0" fill="#1822b8"/><rect x="51.6" y="23.5" width="21.2" height="21.2" fill="#b8cce8" stroke="#4a5a70" stroke-width="0.8"/><rect x="52.1" y="24.0" width="20.2" height="20.2" fill="url(#btile)"/><path d="M55.9 29.8L60.8 27.8L59.8 33.6L66.5 31.7L65.6 38.4L56.9 38.4L59.8 33.6" fill="none" stroke="#1822b8" stroke-width="0.8"/><circle cx="55.9" cy="29.8" r="1.1" fill="#1822b8"/><circle cx="60.8" cy="27.8" r="1.2" fill="#1822b8"/><circle cx="59.8" cy="33.6" r="1.1" fill="#1822b8"/><circle cx="66.5" cy="31.7" r="1.0" fill="#1822b8"/><circle cx="65.6" cy="38.4" r="0.8" fill="#1822b8"/><circle cx="56.9" cy="38.4" r="1.2" fill="#1822b8"/><circle cx="59.8" cy="33.6" r="1.4" fill="#1822b8"/><rect x="75.8" y="23.5" width="21.2" height="21.2" fill="#b8cce8" stroke="#4a5a70" stroke-width="0.8"/><rect x="76.3" y="24.0" width="20.2" height="20.2" fill="url(#btile)"/><path d="M79.2 30.7L84.0 34.6L88.8 38.4L92.7 39.4" fill="none" stroke="#1822b8" stroke-width="0.8"/><circle cx="79.2" cy="30.7" r="1.4" fill="#1822b8"/><circle cx="84.0" cy="34.6" r="1.2" fill="#1822b8"/><circle cx="88.8" cy="38.4" r="1.0" fill="#1822b8"/><circle cx="92.7" cy="39.4" r="1.0" fill="#1822b8"/><rect x="3.2" y="46.4" width="21.2" height="21.2" fill="#b8cce8" stroke="#4a5a70" stroke-width="0.8"/><rect x="3.7" y="46.9" width="20.2" height="20.2" fill="url(#btile)"/><path d="M7.5 61.3L19.1 50.7" fill="none" stroke="#1822b8" stroke-width="0.8"/><circle cx="7.5" cy="61.3" r="1.2" fill="#1822b8"/><circle cx="19.1" cy="50.7" r="1.2" fill="#1822b8"/><rect x="27.4" y="46.4" width="21.2" height="21.2" fill="#b8cce8" stroke="#4a5a70" stroke-width="0.8"/><rect x="27.9" y="46.9" width="20.2" height="20.2" fill="url(#btile)"/><path d="M31.7 52.7L38.5 56.5L44.3 49.8L38.5 56.5L43.3 62.3L38.5 56.5L31.7 61.3" fill="none" stroke="#1822b8" stroke-width="0.8"/><circle cx="31.7" cy="52.7" r="0.9" fill="#1822b8"/><circle cx="38.5" cy="56.5" r="0.9" fill="#1822b8"/><circle cx="44.3" cy="49.8" r="1.0" fill="#1822b8"/><circle cx="38.5" cy="56.5" r="1.1" fill="#1822b8"/><circle cx="43.3" cy="62.3" r="1.3" fill="#1822b8"/><circle cx="38.5" cy="56.5" r="1.1" fill="#1822b8"/><circle cx="31.7" cy="61.3" r="0.8" fill="#1822b8"/><rect x="51.6" y="46.4" width="21.2" height="21.2" fill="#b8cce8" stroke="#4a5a70" stroke-width="0.8"/><rect x="52.1" y="46.9" width="20.2" height="20.2" fill="url(#btile)"/><path d="M59.8 49.8L62.7 62.3" fill="none" stroke="#1822b8" stroke-width="0.8"/><circle cx="59.8" cy="49.8" r="1.3" fill="#1822b8"/><circle cx="62.7" cy="62.3" r="1.1" fill="#1822b8"/><rect x="75.8" y="46.4" width="21.2" height="21.2" fill="#b8cce8" stroke="#4a5a70" stroke-width="0.8"/><rect x="76.3" y="46.9" width="20.2" height="20.2" fill="url(#btile)"/><path d="M79.2 56.5L84.0 52.7L87.8 58.4L92.7 53.6" fill="none" stroke="#1822b8" stroke-width="0.8"/><circle cx="79.2" cy="56.5" r="1.1" fill="#1822b8"/><circle cx="84.0" cy="52.7" r="0.9" fill="#1822b8"/><circle cx="87.8" cy="58.4" r="1.1" fill="#1822b8"/><circle cx="92.7" cy="53.6" r="1.0" fill="#1822b8"/></svg></div><div class="ct">Southern Constellations</div></div>
<div class="card tex" style="left:1018px;top:635px;height:122.5px"><div class="th"><svg width="99" height="66" viewBox="0 0 99 66"><rect width="99" height="66" fill="#e8ecf0"/><rect x="0.8" y="0.3" width="21.2" height="21.2" fill="#b0b0b0" stroke="#707070" stroke-width="0.8"/><rect x="2.3" y="1.8" width="18.2" height="18.2" fill="#030303"/><defs><radialGradient id="pl0" cx="0.4" cy="0.35"><stop offset="0" stop-color="#ffa060"/><stop offset="1" stop-color="#f06010"/></radialGradient></defs><circle cx="11.4" cy="10.9" r="6.8" fill="url(#pl0)"/><rect x="26.0" y="0.3" width="21.2" height="21.2" fill="#b0b0b0" stroke="#707070" stroke-width="0.8"/><rect x="27.5" y="1.8" width="18.2" height="18.2" fill="#030303"/><defs><radialGradient id="pl1" cx="0.4" cy="0.35"><stop offset="0" stop-color="#e8d8c0"/><stop offset="1" stop-color="#b89878"/></radialGradient></defs><circle cx="36.6" cy="10.9" r="6.8" fill="url(#pl1)"/><rect x="51.199999999999996" y="0.3" width="21.2" height="21.2" fill="#b0b0b0" stroke="#707070" stroke-width="0.8"/><rect x="52.699999999999996" y="1.8" width="18.2" height="18.2" fill="#030303"/><defs><radialGradient id="pl2" cx="0.4" cy="0.35"><stop offset="0" stop-color="#f0c060"/><stop offset="1" stop-color="#d08820"/></radialGradient></defs><circle cx="61.8" cy="10.9" r="6.8" fill="url(#pl2)"/><rect x="76.39999999999999" y="0.3" width="21.2" height="21.2" fill="#b0b0b0" stroke="#707070" stroke-width="0.8"/><rect x="77.89999999999999" y="1.8" width="18.2" height="18.2" fill="#030303"/><defs><radialGradient id="pl3" cx="0.4" cy="0.35"><stop offset="0" stop-color="#c0d0e8"/><stop offset="1" stop-color="#4060a0"/></radialGradient></defs><circle cx="86.99999999999999" cy="10.9" r="6.8" fill="url(#pl3)"/><rect x="0.8" y="23.2" width="21.2" height="21.2" fill="#b0b0b0" stroke="#707070" stroke-width="0.8"/><rect x="2.3" y="24.7" width="18.2" height="18.2" fill="#030303"/><defs><radialGradient id="pl4" cx="0.4" cy="0.35"><stop offset="0" stop-color="#e0dcd8"/><stop offset="1" stop-color="#908880"/></radialGradient></defs><circle cx="11.4" cy="33.8" r="6" fill="url(#pl4)"/><rect x="26.0" y="23.2" width="21.2" height="21.2" fill="#b0b0b0" stroke="#707070" stroke-width="0.8"/><rect x="27.5" y="24.7" width="18.2" height="18.2" fill="#030303"/><defs><radialGradient id="pl5" cx="0.4" cy="0.35"><stop offset="0" stop-color="#e0a080"/><stop offset="1" stop-color="#a06040"/></radialGradient></defs><circle cx="36.6" cy="33.8" r="6.8" fill="url(#pl5)"/><rect x="51.199999999999996" y="23.2" width="21.2" height="21.2" fill="#b0b0b0" stroke="#707070" stroke-width="0.8"/><rect x="52.699999999999996" y="24.7" width="18.2" height="18.2" fill="#030303"/><defs><radialGradient id="pl6" cx="0.4" cy="0.35"><stop offset="0" stop-color="#f0e0d0"/><stop offset="1" stop-color="#b09070"/></radialGradient></defs><circle cx="61.8" cy="33.8" r="6.8" fill="url(#pl6)"/><rect x="76.39999999999999" y="23.2" width="21.2" height="21.2" fill="#b0b0b0" stroke="#707070" stroke-width="0.8"/><rect x="77.89999999999999" y="24.7" width="18.2" height="18.2" fill="#030303"/><path d="M79.99999999999999 28.799999999999997L93.99999999999999 38.8" stroke="#b09878" stroke-width="1.2"/><circle cx="86.99999999999999" cy="33.8" r="4" fill="#c0a888"/><rect x="0.8" y="46.099999999999994" width="21.2" height="21.2" fill="#b0b0b0" stroke="#707070" stroke-width="0.8"/><rect x="2.3" y="47.599999999999994" width="18.2" height="18.2" fill="#030303"/><defs><radialGradient id="pl8" cx="0.4" cy="0.35"><stop offset="0" stop-color="#d8f4f4"/><stop offset="1" stop-color="#70b8c0"/></radialGradient></defs><circle cx="11.4" cy="56.699999999999996" r="6.8" fill="url(#pl8)"/><rect x="26.0" y="46.099999999999994" width="21.2" height="21.2" fill="#b0b0b0" stroke="#707070" stroke-width="0.8"/><rect x="27.5" y="47.599999999999994" width="18.2" height="18.2" fill="#030303"/><defs><radialGradient id="pl9" cx="0.4" cy="0.35"><stop offset="0" stop-color="#70a8f0"/><stop offset="1" stop-color="#2858c0"/></radialGradient></defs><circle cx="36.6" cy="56.699999999999996" r="6.8" fill="url(#pl9)"/><rect x="51.199999999999996" y="46.099999999999994" width="21.2" height="21.2" fill="#b0b0b0" stroke="#707070" stroke-width="0.8"/><rect x="52.699999999999996" y="47.599999999999994" width="18.2" height="18.2" fill="#030303"/><defs><radialGradient id="pl10" cx="0.4" cy="0.35"><stop offset="0" stop-color="#e8d8c8"/><stop offset="1" stop-color="#a08068"/></radialGradient></defs><circle cx="61.8" cy="56.699999999999996" r="6.8" fill="url(#pl10)"/><rect x="76.39999999999999" y="46.099999999999994" width="21.2" height="21.2" fill="#b0b0b0" stroke="#707070" stroke-width="0.8"/><rect x="77.89999999999999" y="47.599999999999994" width="18.2" height="18.2" fill="#030303"/><defs><radialGradient id="pl11" cx="0.4" cy="0.35"><stop offset="0" stop-color="#ff8080"/><stop offset="1" stop-color="#e01818"/></radialGradient></defs><circle cx="86.99999999999999" cy="56.699999999999996" r="6" fill="url(#pl11)"/></svg></div><div class="ct">Stars and Planets</div></div>
<div class="card tex" style="left:1138px;top:635px;height:122.5px"><div class="th"><svg width="99" height="66" viewBox="0 0 99 66"><defs><linearGradient id="btile" x1="0" y1="0" x2="0.6" y2="1"><stop offset="0" stop-color="#b0c8e8"/><stop offset="0.6" stop-color="#dce8f6"/><stop offset="0.75" stop-color="#f4f8fc"/><stop offset="1" stop-color="#c0d4ec"/></linearGradient></defs><rect width="99" height="66" fill="#e8ecf0"/><rect x="3.3" y="0.6" width="21.2" height="21.2" fill="#b8cce8" stroke="#4a5a70" stroke-width="0.8"/><rect x="3.8" y="1.1" width="20.2" height="20.2" fill="url(#btile)"/><path d="M6.7 4.0L10.5 9.8L13.4 14.6L16.3 8.8L20.2 16.5" fill="none" stroke="#1822b8" stroke-width="0.8"/><circle cx="6.7" cy="4.0" r="1.0" fill="#1822b8"/><circle cx="10.5" cy="9.8" r="1.4" fill="#1822b8"/><circle cx="13.4" cy="14.6" r="1.3" fill="#1822b8"/><circle cx="16.3" cy="8.8" r="1.3" fill="#1822b8"/><circle cx="20.2" cy="16.5" r="1.3" fill="#1822b8"/><rect x="27.5" y="0.6" width="21.2" height="21.2" fill="#b8cce8" stroke="#4a5a70" stroke-width="0.8"/><rect x="28.0" y="1.1" width="20.2" height="20.2" fill="url(#btile)"/><path d="M30.9 7.8L35.7 10.7L39.5 9.8L43.4 5.9L39.5 9.8L40.5 16.5" fill="none" stroke="#1822b8" stroke-width="0.8"/><circle cx="30.9" cy="7.8" r="0.8" fill="#1822b8"/><circle cx="35.7" cy="10.7" r="1.2" fill="#1822b8"/><circle cx="39.5" cy="9.8" r="1.3" fill="#1822b8"/><circle cx="43.4" cy="5.9" r="1.4" fill="#1822b8"/><circle cx="39.5" cy="9.8" r="0.9" fill="#1822b8"/><circle cx="40.5" cy="16.5" r="1.1" fill="#1822b8"/><rect x="51.699999999999996" y="0.6" width="21.2" height="21.2" fill="#b8cce8" stroke="#4a5a70" stroke-width="0.8"/><rect x="52.199999999999996" y="1.1" width="20.2" height="20.2" fill="url(#btile)"/><path d="M55.1 7.8L59.9 11.7L64.7 15.5L68.6 16.5" fill="none" stroke="#1822b8" stroke-width="0.8"/><circle cx="55.1" cy="7.8" r="1.3" fill="#1822b8"/><circle cx="59.9" cy="11.7" r="0.8" fill="#1822b8"/><circle cx="64.7" cy="15.5" r="0.9" fill="#1822b8"/><circle cx="68.6" cy="16.5" r="0.8" fill="#1822b8"/><rect x="75.89999999999999" y="0.6" width="21.2" height="21.2" fill="#b8cce8" stroke="#4a5a70" stroke-width="0.8"/><rect x="76.39999999999999" y="1.1" width="20.2" height="20.2" fill="url(#btile)"/><path d="M80.2 6.9L87.0 10.7L92.8 4.0L87.0 10.7L91.8 16.5L87.0 10.7L80.2 15.5" fill="none" stroke="#1822b8" stroke-width="0.8"/><circle cx="80.2" cy="6.9" r="1.1" fill="#1822b8"/><circle cx="87.0" cy="10.7" r="1.1" fill="#1822b8"/><circle cx="92.8" cy="4.0" r="1.3" fill="#1822b8"/><circle cx="87.0" cy="10.7" r="1.1" fill="#1822b8"/><circle cx="91.8" cy="16.5" r="1.4" fill="#1822b8"/><circle cx="87.0" cy="10.7" r="1.1" fill="#1822b8"/><circle cx="80.2" cy="15.5" r="1.1" fill="#1822b8"/><rect x="3.3" y="23.5" width="21.2" height="21.2" fill="#b8cce8" stroke="#4a5a70" stroke-width="0.8"/><rect x="3.8" y="24.0" width="20.2" height="20.2" fill="url(#btile)"/><path d="M7.6 29.8L12.5 27.8L11.5 33.6L18.2 31.7L17.3 38.4L8.6 38.4L11.5 33.6" fill="none" stroke="#1822b8" stroke-width="0.8"/><circle cx="7.6" cy="29.8" r="0.9" fill="#1822b8"/><circle cx="12.5" cy="27.8" r="1.2" fill="#1822b8"/><circle cx="11.5" cy="33.6" r="1.0" fill="#1822b8"/><circle cx="18.2" cy="31.7" r="1.3" fill="#1822b8"/><circle cx="17.3" cy="38.4" r="1.1" fill="#1822b8"/><circle cx="8.6" cy="38.4" r="0.9" fill="#1822b8"/><circle cx="11.5" cy="33.6" r="0.9" fill="#1822b8"/><rect x="27.5" y="23.5" width="21.2" height="21.2" fill="#b8cce8" stroke="#4a5a70" stroke-width="0.8"/><rect x="28.0" y="24.0" width="20.2" height="20.2" fill="url(#btile)"/><path d="M32.8 27.8L40.5 28.8L43.4 37.5L35.7 39.4L32.8 27.8" fill="none" stroke="#1822b8" stroke-width="0.8"/><circle cx="32.8" cy="27.8" r="0.9" fill="#1822b8"/><circle cx="40.5" cy="28.8" r="0.9" fill="#1822b8"/><circle cx="43.4" cy="37.5" r="1.1" fill="#1822b8"/><circle cx="35.7" cy="39.4" r="1.1" fill="#1822b8"/><circle cx="32.8" cy="27.8" r="1.1" fill="#1822b8"/><rect x="51.699999999999996" y="23.5" width="21.2" height="21.2" fill="#b8cce8" stroke="#4a5a70" stroke-width="0.8"/><rect x="52.199999999999996" y="24.0" width="20.2" height="20.2" fill="url(#btile)"/><path d="M61.8 27.8L66.6 29.8L62.8 38.4L68.6 40.4L58.0 35.5L61.8 27.8" fill="none" stroke="#1822b8" stroke-width="0.8"/><circle cx="61.8" cy="27.8" r="1.4" fill="#1822b8"/><circle cx="66.6" cy="29.8" r="1.3" fill="#1822b8"/><circle cx="62.8" cy="38.4" r="1.2" fill="#1822b8"/><circle cx="68.6" cy="40.4" r="1.1" fill="#1822b8"/><circle cx="58.0" cy="35.5" r="1.3" fill="#1822b8"/><circle cx="61.8" cy="27.8" r="1.1" fill="#1822b8"/><rect x="75.89999999999999" y="23.5" width="21.2" height="21.2" fill="#b8cce8" stroke="#4a5a70" stroke-width="0.8"/><rect x="76.39999999999999" y="24.0" width="20.2" height="20.2" fill="url(#btile)"/><path d="M82.2 27.8L87.0 28.8L88.9 34.6L90.8 39.4L80.2 32.7L82.2 27.8" fill="none" stroke="#1822b8" stroke-width="0.8"/><circle cx="82.2" cy="27.8" r="1.1" fill="#1822b8"/><circle cx="87.0" cy="28.8" r="1.1" fill="#1822b8"/><circle cx="88.9" cy="34.6" r="0.9" fill="#1822b8"/><circle cx="90.8" cy="39.4" r="0.8" fill="#1822b8"/><circle cx="80.2" cy="32.7" r="0.9" fill="#1822b8"/><circle cx="82.2" cy="27.8" r="1.1" fill="#1822b8"/><rect x="3.3" y="46.4" width="21.2" height="21.2" fill="#b8cce8" stroke="#4a5a70" stroke-width="0.8"/><rect x="3.8" y="46.9" width="20.2" height="20.2" fill="url(#btile)"/><path d="M11.5 49.8L14.4 62.3" fill="none" stroke="#1822b8" stroke-width="0.8"/><circle cx="11.5" cy="49.8" r="1.1" fill="#1822b8"/><circle cx="14.4" cy="62.3" r="1.2" fill="#1822b8"/><rect x="27.5" y="46.4" width="21.2" height="21.2" fill="#b8cce8" stroke="#4a5a70" stroke-width="0.8"/><rect x="28.0" y="46.9" width="20.2" height="20.2" fill="url(#btile)"/><path d="M31.8 61.3L43.4 50.7" fill="none" stroke="#1822b8" stroke-width="0.8"/><circle cx="31.8" cy="61.3" r="1.2" fill="#1822b8"/><circle cx="43.4" cy="50.7" r="1.4" fill="#1822b8"/><rect x="51.699999999999996" y="46.4" width="21.2" height="21.2" fill="#b8cce8" stroke="#4a5a70" stroke-width="0.8"/><rect x="52.199999999999996" y="46.9" width="20.2" height="20.2" fill="url(#btile)"/><path d="M56.0 51.7L64.7 50.7L68.6 55.6L68.6 62.3L56.0 60.4L56.0 51.7" fill="none" stroke="#1822b8" stroke-width="0.8"/><circle cx="56.0" cy="51.7" r="1.1" fill="#1822b8"/><circle cx="64.7" cy="50.7" r="1.1" fill="#1822b8"/><circle cx="68.6" cy="55.6" r="1.0" fill="#1822b8"/><circle cx="68.6" cy="62.3" r="0.9" fill="#1822b8"/><circle cx="56.0" cy="60.4" r="1.1" fill="#1822b8"/><circle cx="56.0" cy="51.7" r="1.0" fill="#1822b8"/><rect x="75.89999999999999" y="46.4" width="21.2" height="21.2" fill="#b8cce8" stroke="#4a5a70" stroke-width="0.8"/><rect x="76.39999999999999" y="46.9" width="20.2" height="20.2" fill="url(#btile)"/><path d="M79.3 56.5L84.1 52.7L87.9 58.4L92.8 53.6" fill="none" stroke="#1822b8" stroke-width="0.8"/><circle cx="79.3" cy="56.5" r="1.3" fill="#1822b8"/><circle cx="84.1" cy="52.7" r="0.8" fill="#1822b8"/><circle cx="87.9" cy="58.4" r="1.0" fill="#1822b8"/><circle cx="92.8" cy="53.6" r="1.4" fill="#1822b8"/></svg></div><div class="ct">Zodiac Constellations</div></div>
<div class="a" style="left:0;top:760.6px;width:1280px;height:3.4px;background:#efefef;border-bottom:1px solid #c0c0c0"></div>
<div class="a" style="left:1277.3px;top:14.4px;width:2.7px;height:750px;background:#efefef;border-right:1px solid #c6c6c6"></div>
</body></html>
